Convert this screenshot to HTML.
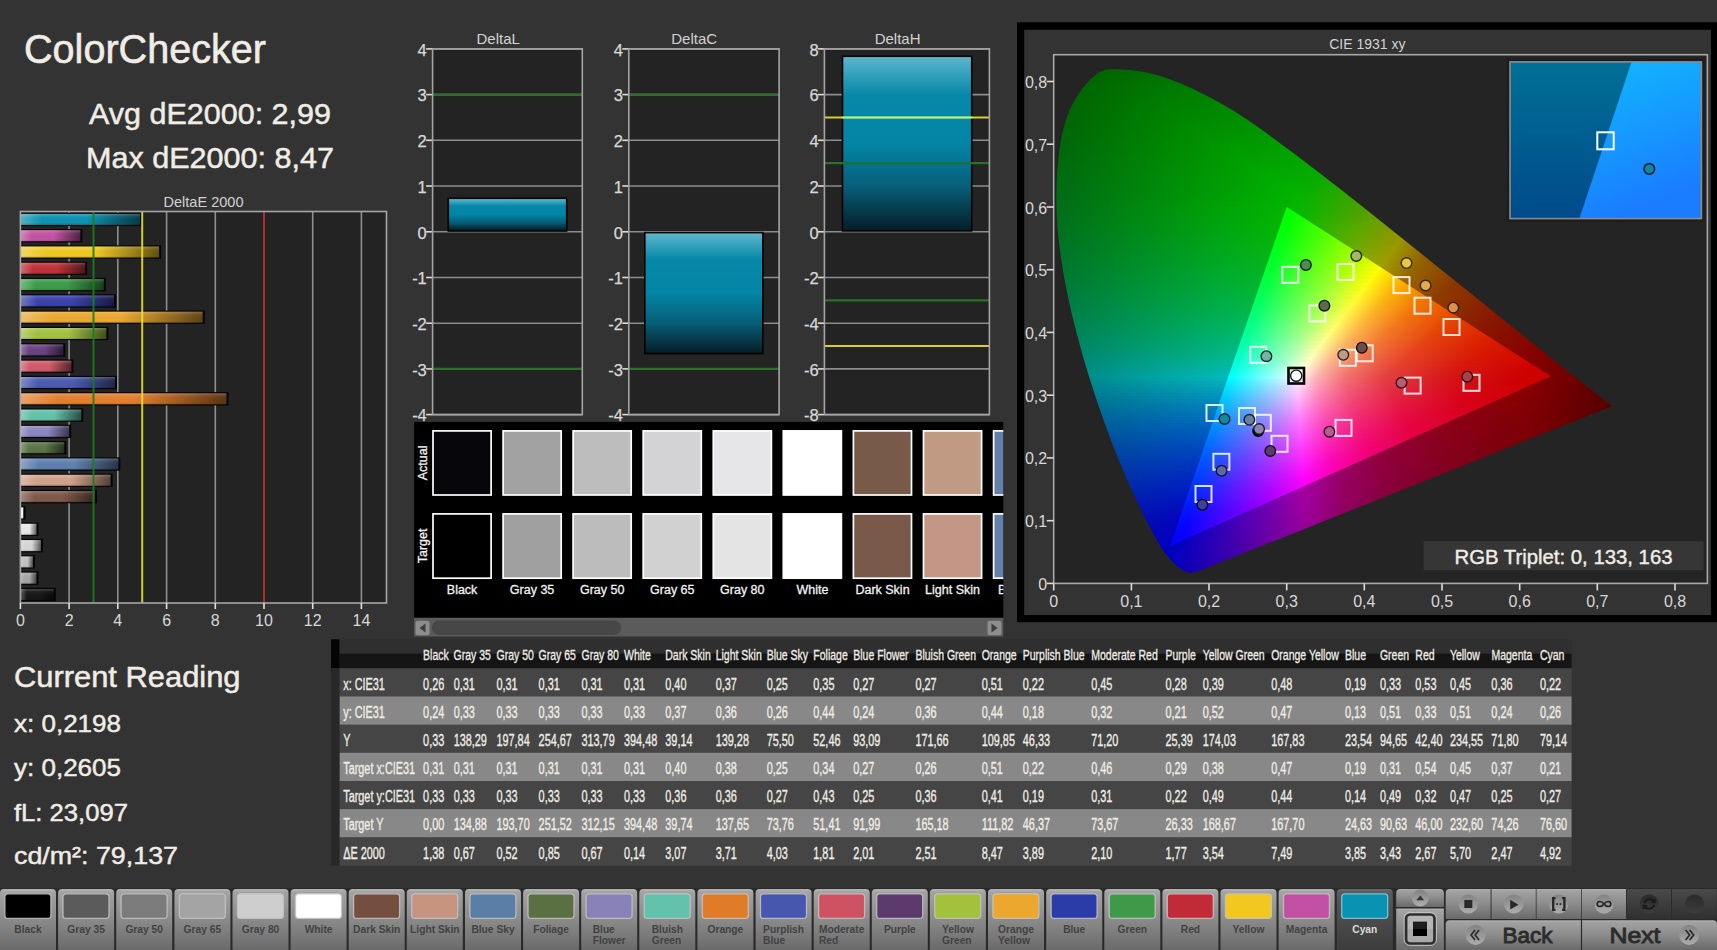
<!DOCTYPE html>
<html><head><meta charset="utf-8"><title>ColorChecker</title>
<style>
html,body{margin:0;padding:0;background:#333;overflow:hidden;}
svg{display:block;font-family:"Liberation Sans", sans-serif;}
</style></head><body>
<svg width="1717" height="950" viewBox="0 0 1717 950">
<defs>
<linearGradient id="deb0" x1="0" y1="0" x2="1" y2="0"><stop offset="0" stop-color="#575757"/><stop offset="0.18" stop-color="#161616"/><stop offset="0.55" stop-color="#161616"/><stop offset="1" stop-color="#090909"/></linearGradient>
<linearGradient id="deb1" x1="0" y1="0" x2="1" y2="0"><stop offset="0" stop-color="#bfbfbf"/><stop offset="0.18" stop-color="#a6a6a6"/><stop offset="0.55" stop-color="#a6a6a6"/><stop offset="1" stop-color="#424242"/></linearGradient>
<linearGradient id="deb2" x1="0" y1="0" x2="1" y2="0"><stop offset="0" stop-color="#d3d3d3"/><stop offset="0.18" stop-color="#c2c2c2"/><stop offset="0.55" stop-color="#c2c2c2"/><stop offset="1" stop-color="#4e4e4e"/></linearGradient>
<linearGradient id="deb3" x1="0" y1="0" x2="1" y2="0"><stop offset="0" stop-color="#e1e1e1"/><stop offset="0.18" stop-color="#d6d6d6"/><stop offset="0.55" stop-color="#d6d6d6"/><stop offset="1" stop-color="#565656"/></linearGradient>
<linearGradient id="deb4" x1="0" y1="0" x2="1" y2="0"><stop offset="0" stop-color="#eeeeee"/><stop offset="0.18" stop-color="#e8e8e8"/><stop offset="0.55" stop-color="#e8e8e8"/><stop offset="1" stop-color="#5d5d5d"/></linearGradient>
<linearGradient id="deb5" x1="0" y1="0" x2="1" y2="0"><stop offset="0" stop-color="#ffffff"/><stop offset="0.18" stop-color="#ffffff"/><stop offset="0.55" stop-color="#ffffff"/><stop offset="1" stop-color="#666666"/></linearGradient>
<linearGradient id="deb6" x1="0" y1="0" x2="1" y2="0"><stop offset="0" stop-color="#a4877d"/><stop offset="0.18" stop-color="#80594b"/><stop offset="0.55" stop-color="#80594b"/><stop offset="1" stop-color="#33241e"/></linearGradient>
<linearGradient id="deb7" x1="0" y1="0" x2="1" y2="0"><stop offset="0" stop-color="#dfbcab"/><stop offset="0.18" stop-color="#d2a28a"/><stop offset="0.55" stop-color="#d2a28a"/><stop offset="1" stop-color="#544137"/></linearGradient>
<linearGradient id="deb8" x1="0" y1="0" x2="1" y2="0"><stop offset="0" stop-color="#8ca4c6"/><stop offset="0.18" stop-color="#5f80b0"/><stop offset="0.55" stop-color="#5f80b0"/><stop offset="1" stop-color="#263346"/></linearGradient>
<linearGradient id="deb9" x1="0" y1="0" x2="1" y2="0"><stop offset="0" stop-color="#899c7a"/><stop offset="0.18" stop-color="#5b7646"/><stop offset="0.55" stop-color="#5b7646"/><stop offset="1" stop-color="#242f1c"/></linearGradient>
<linearGradient id="deb10" x1="0" y1="0" x2="1" y2="0"><stop offset="0" stop-color="#aca8d3"/><stop offset="0.18" stop-color="#8c86c2"/><stop offset="0.55" stop-color="#8c86c2"/><stop offset="1" stop-color="#38364e"/></linearGradient>
<linearGradient id="deb11" x1="0" y1="0" x2="1" y2="0"><stop offset="0" stop-color="#8ed3c2"/><stop offset="0.18" stop-color="#62c2aa"/><stop offset="0.55" stop-color="#62c2aa"/><stop offset="1" stop-color="#274e44"/></linearGradient>
<linearGradient id="deb12" x1="0" y1="0" x2="1" y2="0"><stop offset="0" stop-color="#eba469"/><stop offset="0.18" stop-color="#e3802e"/><stop offset="0.55" stop-color="#e3802e"/><stop offset="1" stop-color="#5b3312"/></linearGradient>
<linearGradient id="deb13" x1="0" y1="0" x2="1" y2="0"><stop offset="0" stop-color="#7d89c8"/><stop offset="0.18" stop-color="#4b5bb2"/><stop offset="0.55" stop-color="#4b5bb2"/><stop offset="1" stop-color="#1e2447"/></linearGradient>
<linearGradient id="deb14" x1="0" y1="0" x2="1" y2="0"><stop offset="0" stop-color="#df8994"/><stop offset="0.18" stop-color="#d25b6a"/><stop offset="0.55" stop-color="#d25b6a"/><stop offset="1" stop-color="#54242a"/></linearGradient>
<linearGradient id="deb15" x1="0" y1="0" x2="1" y2="0"><stop offset="0" stop-color="#9477a5"/><stop offset="0.18" stop-color="#6b4282"/><stop offset="0.55" stop-color="#6b4282"/><stop offset="1" stop-color="#2b1a34"/></linearGradient>
<linearGradient id="deb16" x1="0" y1="0" x2="1" y2="0"><stop offset="0" stop-color="#bcd377"/><stop offset="0.18" stop-color="#a2c242"/><stop offset="0.55" stop-color="#a2c242"/><stop offset="1" stop-color="#414e1a"/></linearGradient>
<linearGradient id="deb17" x1="0" y1="0" x2="1" y2="0"><stop offset="0" stop-color="#f1c06a"/><stop offset="0.18" stop-color="#eca830"/><stop offset="0.55" stop-color="#eca830"/><stop offset="1" stop-color="#5e4313"/></linearGradient>
<linearGradient id="deb18" x1="0" y1="0" x2="1" y2="0"><stop offset="0" stop-color="#7177c2"/><stop offset="0.18" stop-color="#3a42aa"/><stop offset="0.55" stop-color="#3a42aa"/><stop offset="1" stop-color="#171a44"/></linearGradient>
<linearGradient id="deb19" x1="0" y1="0" x2="1" y2="0"><stop offset="0" stop-color="#73b87d"/><stop offset="0.18" stop-color="#3c9c4a"/><stop offset="0.55" stop-color="#3c9c4a"/><stop offset="1" stop-color="#183e1e"/></linearGradient>
<linearGradient id="deb20" x1="0" y1="0" x2="1" y2="0"><stop offset="0" stop-color="#d36b71"/><stop offset="0.18" stop-color="#c2323a"/><stop offset="0.55" stop-color="#c2323a"/><stop offset="1" stop-color="#4e1417"/></linearGradient>
<linearGradient id="deb21" x1="0" y1="0" x2="1" y2="0"><stop offset="0" stop-color="#f4d760"/><stop offset="0.18" stop-color="#f0c822"/><stop offset="0.55" stop-color="#f0c822"/><stop offset="1" stop-color="#60500e"/></linearGradient>
<linearGradient id="deb22" x1="0" y1="0" x2="1" y2="0"><stop offset="0" stop-color="#d582bc"/><stop offset="0.18" stop-color="#c452a2"/><stop offset="0.55" stop-color="#c452a2"/><stop offset="1" stop-color="#4e2141"/></linearGradient>
<linearGradient id="deb23" x1="0" y1="0" x2="1" y2="0"><stop offset="0" stop-color="#50b1c8"/><stop offset="0.18" stop-color="#0c92b2"/><stop offset="0.55" stop-color="#0c92b2"/><stop offset="1" stop-color="#053a47"/></linearGradient>
<linearGradient id="barhl" x1="0" y1="0" x2="0" y2="1"><stop offset="0" stop-color="#fff" stop-opacity="0.22"/><stop offset="0.25" stop-color="#fff" stop-opacity="0.05"/><stop offset="0.8" stop-color="#000" stop-opacity="0"/><stop offset="1" stop-color="#000" stop-opacity="0.12"/></linearGradient>
<linearGradient id="lchbar" x1="0" y1="0" x2="0" y2="1"><stop offset="0" stop-color="#5cb6cc"/><stop offset="0.22" stop-color="#0688a8"/><stop offset="0.5" stop-color="#0385a5"/><stop offset="0.75" stop-color="#065e78"/><stop offset="1" stop-color="#061e28"/></linearGradient>
<clipPath id="hsclip"><path d="M1612.2,406.2 L1570.8,373.8 C1560.7,365.8 1552.3,359.1 1540.6,349.7 C1528.9,340.3 1515.2,329.2 1500.4,317.3 C1485.6,305.4 1468.7,291.8 1451.7,278.1 C1434.7,264.5 1416.6,249.8 1398.6,235.4 C1380.5,221.0 1361.9,206.0 1343.4,191.6 C1325.0,177.2 1303.5,160.8 1287.9,149.1 C1272.3,137.4 1261.6,129.3 1250.0,121.5 C1238.4,113.7 1229.3,108.1 1218.4,102.1 C1207.5,96.1 1195.9,90.1 1184.7,85.3 C1173.5,80.5 1162.0,76.2 1151.0,73.5 C1140.0,70.8 1127.4,69.6 1119.0,69.3 C1110.6,69.0 1106.4,68.8 1100.5,71.8 C1094.6,74.8 1088.8,80.8 1083.7,87.0 C1078.7,93.2 1073.9,100.8 1070.2,108.9 C1066.5,117.0 1063.9,126.5 1061.8,135.8 C1059.7,145.2 1058.7,156.0 1057.8,165.0 C1056.9,174.0 1056.7,181.7 1056.5,190.0 C1056.3,198.3 1056.3,206.7 1056.7,215.0 C1057.1,223.3 1057.8,231.7 1058.7,240.0 C1059.6,248.3 1060.8,256.7 1062.1,265.0 C1063.4,273.3 1064.9,281.7 1066.6,290.0 C1068.3,298.3 1070.1,306.7 1072.1,315.0 C1074.1,323.3 1076.3,331.7 1078.5,340.0 C1080.7,348.3 1083.0,356.7 1085.5,365.0 C1088.0,373.3 1090.6,381.7 1093.3,390.0 C1096.0,398.3 1098.9,406.7 1101.8,415.0 C1104.7,423.3 1107.7,431.7 1110.9,440.0 C1114.1,448.3 1117.4,456.7 1120.9,465.0 C1124.4,473.3 1127.9,481.7 1131.7,490.0 C1135.5,498.3 1139.4,506.7 1143.6,515.0 C1147.8,523.3 1153.1,533.7 1156.7,540.0 C1160.3,546.3 1161.8,548.8 1165.0,553.0 C1168.2,557.2 1172.6,561.9 1176.0,565.0 C1179.4,568.1 1182.3,570.3 1185.2,571.6 C1188.1,572.9 1190.4,573.0 1193.3,572.6 C1196.2,572.2 1199.8,570.5 1202.6,569.5 C1205.4,568.5 1207.5,567.6 1210.0,566.6 L1612.2,406.2 Z"/></clipPath>
<clipPath id="triclip"><path d="M1550.72,376.36 L1286.68,206.96 L1170.19,545.76 Z"/></clipPath>
<linearGradient id="ho0" gradientUnits="userSpaceOnUse" x1="1054" y1="0" x2="1616" y2="0"><stop offset="0.000" stop-color="#005c00"/><stop offset="0.521" stop-color="#018a00"/><stop offset="0.829" stop-color="#5d6200"/><stop offset="0.900" stop-color="#4d3e00"/><stop offset="1.000" stop-color="#351f00"/></linearGradient>
<linearGradient id="ho1" gradientUnits="userSpaceOnUse" x1="1054" y1="0" x2="1616" y2="0"><stop offset="0.000" stop-color="#005d00"/><stop offset="0.518" stop-color="#018c00"/><stop offset="0.829" stop-color="#5e6300"/><stop offset="0.943" stop-color="#422d00"/><stop offset="1.000" stop-color="#351e00"/></linearGradient>
<linearGradient id="ho2" gradientUnits="userSpaceOnUse" x1="1054" y1="0" x2="1616" y2="0"><stop offset="0.000" stop-color="#005d00"/><stop offset="0.516" stop-color="#018c00"/><stop offset="0.829" stop-color="#606300"/><stop offset="0.934" stop-color="#443000"/><stop offset="1.000" stop-color="#351e00"/></linearGradient>
<linearGradient id="ho3" gradientUnits="userSpaceOnUse" x1="1054" y1="0" x2="1616" y2="0"><stop offset="0.000" stop-color="#005d00"/><stop offset="0.333" stop-color="#008100"/><stop offset="0.518" stop-color="#028d00"/><stop offset="0.822" stop-color="#616500"/><stop offset="0.877" stop-color="#544700"/><stop offset="0.991" stop-color="#371f00"/><stop offset="1.000" stop-color="#361e00"/></linearGradient>
<linearGradient id="ho4" gradientUnits="userSpaceOnUse" x1="1054" y1="0" x2="1616" y2="0"><stop offset="0.000" stop-color="#005e00"/><stop offset="0.219" stop-color="#007700"/><stop offset="0.514" stop-color="#028e00"/><stop offset="0.822" stop-color="#636500"/><stop offset="0.931" stop-color="#463000"/><stop offset="1.000" stop-color="#361e00"/></linearGradient>
<linearGradient id="ho5" gradientUnits="userSpaceOnUse" x1="1054" y1="0" x2="1616" y2="0"><stop offset="0.000" stop-color="#005e00"/><stop offset="0.190" stop-color="#007600"/><stop offset="0.512" stop-color="#028f00"/><stop offset="0.819" stop-color="#646600"/><stop offset="0.931" stop-color="#462f00"/><stop offset="1.000" stop-color="#361d00"/></linearGradient>
<linearGradient id="ho6" gradientUnits="userSpaceOnUse" x1="1054" y1="0" x2="1616" y2="0"><stop offset="0.000" stop-color="#005e00"/><stop offset="0.180" stop-color="#007600"/><stop offset="0.511" stop-color="#029000"/><stop offset="0.817" stop-color="#656700"/><stop offset="0.925" stop-color="#483100"/><stop offset="1.000" stop-color="#371d00"/></linearGradient>
<linearGradient id="ho7" gradientUnits="userSpaceOnUse" x1="1054" y1="0" x2="1616" y2="0"><stop offset="0.000" stop-color="#005f01"/><stop offset="0.174" stop-color="#007700"/><stop offset="0.509" stop-color="#029100"/><stop offset="0.813" stop-color="#666800"/><stop offset="0.923" stop-color="#493100"/><stop offset="1.000" stop-color="#371d00"/></linearGradient>
<linearGradient id="ho8" gradientUnits="userSpaceOnUse" x1="1054" y1="0" x2="1616" y2="0"><stop offset="0.000" stop-color="#005f01"/><stop offset="0.176" stop-color="#007800"/><stop offset="0.507" stop-color="#029200"/><stop offset="0.811" stop-color="#686800"/><stop offset="0.918" stop-color="#4b3200"/><stop offset="1.000" stop-color="#371c00"/></linearGradient>
<linearGradient id="ho9" gradientUnits="userSpaceOnUse" x1="1054" y1="0" x2="1616" y2="0"><stop offset="0.000" stop-color="#005f01"/><stop offset="0.180" stop-color="#007900"/><stop offset="0.505" stop-color="#029300"/><stop offset="0.808" stop-color="#696900"/><stop offset="0.916" stop-color="#4b3200"/><stop offset="1.000" stop-color="#381c00"/></linearGradient>
<linearGradient id="ho10" gradientUnits="userSpaceOnUse" x1="1054" y1="0" x2="1616" y2="0"><stop offset="0.000" stop-color="#006001"/><stop offset="0.183" stop-color="#007b00"/><stop offset="0.504" stop-color="#029400"/><stop offset="0.802" stop-color="#6a6a00"/><stop offset="0.918" stop-color="#4b3100"/><stop offset="1.000" stop-color="#381c00"/></linearGradient>
<linearGradient id="ho11" gradientUnits="userSpaceOnUse" x1="1054" y1="0" x2="1616" y2="0"><stop offset="0.000" stop-color="#006001"/><stop offset="0.189" stop-color="#007c00"/><stop offset="0.502" stop-color="#029500"/><stop offset="0.799" stop-color="#6b6b00"/><stop offset="0.916" stop-color="#4c3100"/><stop offset="1.000" stop-color="#381b00"/></linearGradient>
<linearGradient id="ho12" gradientUnits="userSpaceOnUse" x1="1054" y1="0" x2="1616" y2="0"><stop offset="0.000" stop-color="#006102"/><stop offset="0.194" stop-color="#007e00"/><stop offset="0.500" stop-color="#029600"/><stop offset="0.795" stop-color="#6c6c00"/><stop offset="0.915" stop-color="#4d3100"/><stop offset="1.000" stop-color="#391b00"/></linearGradient>
<linearGradient id="ho13" gradientUnits="userSpaceOnUse" x1="1054" y1="0" x2="1616" y2="0"><stop offset="0.000" stop-color="#006102"/><stop offset="0.199" stop-color="#007f00"/><stop offset="0.498" stop-color="#029600"/><stop offset="0.792" stop-color="#6d6d00"/><stop offset="0.897" stop-color="#523700"/><stop offset="1.000" stop-color="#391b00"/></linearGradient>
<linearGradient id="ho14" gradientUnits="userSpaceOnUse" x1="1054" y1="0" x2="1616" y2="0"><stop offset="0.000" stop-color="#006102"/><stop offset="0.206" stop-color="#008100"/><stop offset="0.496" stop-color="#029700"/><stop offset="0.788" stop-color="#6e6e00"/><stop offset="0.884" stop-color="#563b00"/><stop offset="1.000" stop-color="#391a00"/></linearGradient>
<linearGradient id="ho15" gradientUnits="userSpaceOnUse" x1="1054" y1="0" x2="1616" y2="0"><stop offset="0.000" stop-color="#006203"/><stop offset="0.214" stop-color="#008300"/><stop offset="0.495" stop-color="#029800"/><stop offset="0.785" stop-color="#6f6f00"/><stop offset="0.877" stop-color="#593e00"/><stop offset="1.000" stop-color="#3a1a00"/></linearGradient>
<linearGradient id="ho16" gradientUnits="userSpaceOnUse" x1="1054" y1="0" x2="1616" y2="0"><stop offset="0.000" stop-color="#006203"/><stop offset="0.221" stop-color="#008500"/><stop offset="0.493" stop-color="#029900"/><stop offset="0.779" stop-color="#707000"/><stop offset="0.868" stop-color="#5c4100"/><stop offset="0.991" stop-color="#3b1b00"/><stop offset="1.000" stop-color="#3a1a00"/></linearGradient>
<linearGradient id="ho17" gradientUnits="userSpaceOnUse" x1="1054" y1="0" x2="1616" y2="0"><stop offset="0.000" stop-color="#006204"/><stop offset="0.228" stop-color="#008600"/><stop offset="0.491" stop-color="#029a00"/><stop offset="0.776" stop-color="#717100"/><stop offset="0.868" stop-color="#5c4000"/><stop offset="0.993" stop-color="#3b1a00"/><stop offset="1.000" stop-color="#3a1900"/></linearGradient>
<linearGradient id="ho18" gradientUnits="userSpaceOnUse" x1="1054" y1="0" x2="1616" y2="0"><stop offset="0.000" stop-color="#006304"/><stop offset="0.235" stop-color="#008800"/><stop offset="0.489" stop-color="#029b00"/><stop offset="0.772" stop-color="#727200"/><stop offset="0.867" stop-color="#5d4000"/><stop offset="0.991" stop-color="#3c1a00"/><stop offset="1.000" stop-color="#3b1900"/></linearGradient>
<linearGradient id="ho19" gradientUnits="userSpaceOnUse" x1="1054" y1="0" x2="1616" y2="0"><stop offset="0.000" stop-color="#006305"/><stop offset="0.242" stop-color="#008a00"/><stop offset="0.488" stop-color="#029c00"/><stop offset="0.769" stop-color="#737300"/><stop offset="0.865" stop-color="#5e4000"/><stop offset="0.989" stop-color="#3d1a00"/><stop offset="1.000" stop-color="#3b1900"/></linearGradient>
<linearGradient id="ho20" gradientUnits="userSpaceOnUse" x1="1054" y1="0" x2="1616" y2="0"><stop offset="0.000" stop-color="#006305"/><stop offset="0.249" stop-color="#008c00"/><stop offset="0.486" stop-color="#039d00"/><stop offset="0.765" stop-color="#747300"/><stop offset="0.863" stop-color="#5f4000"/><stop offset="0.988" stop-color="#3d1a00"/><stop offset="1.000" stop-color="#3b1800"/></linearGradient>
<linearGradient id="ho21" gradientUnits="userSpaceOnUse" x1="1054" y1="0" x2="1616" y2="0"><stop offset="0.000" stop-color="#006406"/><stop offset="0.258" stop-color="#008d00"/><stop offset="0.484" stop-color="#039e00"/><stop offset="0.762" stop-color="#757400"/><stop offset="0.861" stop-color="#604000"/><stop offset="0.986" stop-color="#3e1a00"/><stop offset="1.000" stop-color="#3c1800"/></linearGradient>
<linearGradient id="ho22" gradientUnits="userSpaceOnUse" x1="1054" y1="0" x2="1616" y2="0"><stop offset="0.000" stop-color="#006406"/><stop offset="0.265" stop-color="#008f00"/><stop offset="0.482" stop-color="#039f00"/><stop offset="0.756" stop-color="#767600"/><stop offset="0.861" stop-color="#603f00"/><stop offset="0.988" stop-color="#3e1a00"/><stop offset="1.000" stop-color="#3c1800"/></linearGradient>
<linearGradient id="ho23" gradientUnits="userSpaceOnUse" x1="1054" y1="0" x2="1616" y2="0"><stop offset="0.000" stop-color="#006407"/><stop offset="0.272" stop-color="#009100"/><stop offset="0.480" stop-color="#03a000"/><stop offset="0.753" stop-color="#777700"/><stop offset="0.859" stop-color="#613f00"/><stop offset="0.986" stop-color="#3f1a00"/><stop offset="1.000" stop-color="#3c1700"/></linearGradient>
<linearGradient id="ho24" gradientUnits="userSpaceOnUse" x1="1054" y1="0" x2="1616" y2="0"><stop offset="0.000" stop-color="#006507"/><stop offset="0.281" stop-color="#009300"/><stop offset="0.479" stop-color="#03a100"/><stop offset="0.749" stop-color="#787700"/><stop offset="0.859" stop-color="#623e00"/><stop offset="0.988" stop-color="#3f1900"/><stop offset="1.000" stop-color="#3d1700"/></linearGradient>
<linearGradient id="ho25" gradientUnits="userSpaceOnUse" x1="1054" y1="0" x2="1616" y2="0"><stop offset="0.000" stop-color="#006508"/><stop offset="0.288" stop-color="#009500"/><stop offset="0.477" stop-color="#03a100"/><stop offset="0.746" stop-color="#797800"/><stop offset="0.859" stop-color="#623d00"/><stop offset="0.988" stop-color="#3f1800"/><stop offset="1.000" stop-color="#3d1700"/></linearGradient>
<linearGradient id="ho26" gradientUnits="userSpaceOnUse" x1="1054" y1="0" x2="1616" y2="0"><stop offset="0.000" stop-color="#006509"/><stop offset="0.297" stop-color="#009700"/><stop offset="0.477" stop-color="#04a200"/><stop offset="0.740" stop-color="#7a7a00"/><stop offset="0.843" stop-color="#684300"/><stop offset="0.963" stop-color="#451d00"/><stop offset="1.000" stop-color="#3d1600"/></linearGradient>
<linearGradient id="ho27" gradientUnits="userSpaceOnUse" x1="1054" y1="0" x2="1616" y2="0"><stop offset="0.000" stop-color="#006609"/><stop offset="0.304" stop-color="#009800"/><stop offset="0.475" stop-color="#04a300"/><stop offset="0.737" stop-color="#7b7a00"/><stop offset="0.827" stop-color="#6d4a00"/><stop offset="0.941" stop-color="#4b2100"/><stop offset="1.000" stop-color="#3e1600"/></linearGradient>
<linearGradient id="ho28" gradientUnits="userSpaceOnUse" x1="1054" y1="0" x2="1616" y2="0"><stop offset="0.000" stop-color="#00660a"/><stop offset="0.313" stop-color="#009a00"/><stop offset="0.473" stop-color="#04a400"/><stop offset="0.733" stop-color="#7c7b00"/><stop offset="0.822" stop-color="#6e4b00"/><stop offset="0.940" stop-color="#4c2100"/><stop offset="1.000" stop-color="#3e1600"/></linearGradient>
<linearGradient id="ho29" gradientUnits="userSpaceOnUse" x1="1054" y1="0" x2="1616" y2="0"><stop offset="0.000" stop-color="#00660b"/><stop offset="0.320" stop-color="#009c00"/><stop offset="0.472" stop-color="#04a500"/><stop offset="0.730" stop-color="#7d7c00"/><stop offset="0.819" stop-color="#6f4b00"/><stop offset="0.940" stop-color="#4c2100"/><stop offset="1.000" stop-color="#3e1500"/></linearGradient>
<linearGradient id="ho30" gradientUnits="userSpaceOnUse" x1="1054" y1="0" x2="1616" y2="0"><stop offset="0.000" stop-color="#00670b"/><stop offset="0.329" stop-color="#009e00"/><stop offset="0.470" stop-color="#04a600"/><stop offset="0.726" stop-color="#7e7c00"/><stop offset="0.813" stop-color="#704c00"/><stop offset="0.940" stop-color="#4d2000"/><stop offset="1.000" stop-color="#3f1500"/></linearGradient>
<linearGradient id="ho31" gradientUnits="userSpaceOnUse" x1="1054" y1="0" x2="1616" y2="0"><stop offset="0.000" stop-color="#00670c"/><stop offset="0.336" stop-color="#00a000"/><stop offset="0.470" stop-color="#05a700"/><stop offset="0.721" stop-color="#7f7e00"/><stop offset="0.806" stop-color="#724e00"/><stop offset="0.938" stop-color="#4e2000"/><stop offset="1.000" stop-color="#3f1500"/></linearGradient>
<linearGradient id="ho32" gradientUnits="userSpaceOnUse" x1="1054" y1="0" x2="1616" y2="0"><stop offset="0.000" stop-color="#00670d"/><stop offset="0.345" stop-color="#00a100"/><stop offset="0.466" stop-color="#04a800"/><stop offset="0.717" stop-color="#807f00"/><stop offset="0.802" stop-color="#724e00"/><stop offset="0.936" stop-color="#4e2000"/><stop offset="1.000" stop-color="#3f1400"/></linearGradient>
<linearGradient id="ho33" gradientUnits="userSpaceOnUse" x1="1054" y1="0" x2="1616" y2="0"><stop offset="0.000" stop-color="#00680d"/><stop offset="0.352" stop-color="#00a300"/><stop offset="0.464" stop-color="#04a900"/><stop offset="0.714" stop-color="#818000"/><stop offset="0.797" stop-color="#734f00"/><stop offset="0.915" stop-color="#552400"/><stop offset="1.000" stop-color="#401400"/></linearGradient>
<linearGradient id="ho34" gradientUnits="userSpaceOnUse" x1="1054" y1="0" x2="1616" y2="0"><stop offset="0.000" stop-color="#00680e"/><stop offset="0.361" stop-color="#00a500"/><stop offset="0.463" stop-color="#05aa00"/><stop offset="0.710" stop-color="#828000"/><stop offset="0.794" stop-color="#744f00"/><stop offset="0.886" stop-color="#5d2c00"/><stop offset="1.000" stop-color="#401400"/></linearGradient>
<linearGradient id="ho35" gradientUnits="userSpaceOnUse" x1="1054" y1="0" x2="1616" y2="0"><stop offset="0.000" stop-color="#00680f"/><stop offset="0.368" stop-color="#00a700"/><stop offset="0.461" stop-color="#05ab00"/><stop offset="0.706" stop-color="#828100"/><stop offset="0.790" stop-color="#754f00"/><stop offset="0.875" stop-color="#612e00"/><stop offset="1.000" stop-color="#401300"/></linearGradient>
<linearGradient id="ho36" gradientUnits="userSpaceOnUse" x1="1054" y1="0" x2="1616" y2="0"><stop offset="0.000" stop-color="#00690f"/><stop offset="0.377" stop-color="#00a900"/><stop offset="0.459" stop-color="#05ab00"/><stop offset="0.701" stop-color="#848300"/><stop offset="0.783" stop-color="#765100"/><stop offset="0.867" stop-color="#643100"/><stop offset="1.000" stop-color="#411300"/></linearGradient>
<linearGradient id="ho37" gradientUnits="userSpaceOnUse" x1="1054" y1="0" x2="1616" y2="0"><stop offset="0.000" stop-color="#006910"/><stop offset="0.384" stop-color="#00ab00"/><stop offset="0.457" stop-color="#05ac00"/><stop offset="0.698" stop-color="#858400"/><stop offset="0.778" stop-color="#785200"/><stop offset="0.863" stop-color="#663100"/><stop offset="1.000" stop-color="#411200"/></linearGradient>
<linearGradient id="ho38" gradientUnits="userSpaceOnUse" x1="1054" y1="0" x2="1616" y2="0"><stop offset="0.000" stop-color="#006911"/><stop offset="0.393" stop-color="#00ac00"/><stop offset="0.457" stop-color="#06ad00"/><stop offset="0.694" stop-color="#868400"/><stop offset="0.774" stop-color="#785200"/><stop offset="0.861" stop-color="#663100"/><stop offset="1.000" stop-color="#411200"/></linearGradient>
<linearGradient id="ho39" gradientUnits="userSpaceOnUse" x1="1054" y1="0" x2="1616" y2="0"><stop offset="0.000" stop-color="#006a12"/><stop offset="0.402" stop-color="#00ae00"/><stop offset="0.456" stop-color="#06ae00"/><stop offset="0.690" stop-color="#868500"/><stop offset="0.770" stop-color="#795200"/><stop offset="0.861" stop-color="#673000"/><stop offset="1.000" stop-color="#421200"/></linearGradient>
<linearGradient id="ho40" gradientUnits="userSpaceOnUse" x1="1054" y1="0" x2="1616" y2="0"><stop offset="0.000" stop-color="#006a13"/><stop offset="0.409" stop-color="#00b000"/><stop offset="0.456" stop-color="#07af00"/><stop offset="0.685" stop-color="#888700"/><stop offset="0.763" stop-color="#7b5400"/><stop offset="0.859" stop-color="#683000"/><stop offset="1.000" stop-color="#421100"/></linearGradient>
<linearGradient id="ho41" gradientUnits="userSpaceOnUse" x1="1054" y1="0" x2="1616" y2="0"><stop offset="0.000" stop-color="#006a13"/><stop offset="0.418" stop-color="#00b200"/><stop offset="0.457" stop-color="#0aaf00"/><stop offset="0.681" stop-color="#898800"/><stop offset="0.758" stop-color="#7c5500"/><stop offset="0.858" stop-color="#692f00"/><stop offset="1.000" stop-color="#421100"/></linearGradient>
<linearGradient id="ho42" gradientUnits="userSpaceOnUse" x1="1054" y1="0" x2="1616" y2="0"><stop offset="0.000" stop-color="#006b14"/><stop offset="0.423" stop-color="#00b300"/><stop offset="0.463" stop-color="#0eaf00"/><stop offset="0.678" stop-color="#898800"/><stop offset="0.754" stop-color="#7c5500"/><stop offset="0.858" stop-color="#692e00"/><stop offset="1.000" stop-color="#431100"/></linearGradient>
<linearGradient id="ho43" gradientUnits="userSpaceOnUse" x1="1054" y1="0" x2="1616" y2="0"><stop offset="0.000" stop-color="#006b15"/><stop offset="0.423" stop-color="#00b400"/><stop offset="0.464" stop-color="#11b000"/><stop offset="0.674" stop-color="#8a8900"/><stop offset="0.749" stop-color="#7e5600"/><stop offset="0.856" stop-color="#6a2e00"/><stop offset="1.000" stop-color="#431000"/></linearGradient>
<linearGradient id="ho44" gradientUnits="userSpaceOnUse" x1="1054" y1="0" x2="1616" y2="0"><stop offset="0.000" stop-color="#006b16"/><stop offset="0.425" stop-color="#00b500"/><stop offset="0.477" stop-color="#1aaf00"/><stop offset="0.671" stop-color="#8b8900"/><stop offset="0.746" stop-color="#7e5600"/><stop offset="0.856" stop-color="#6a2d00"/><stop offset="1.000" stop-color="#441000"/></linearGradient>
<linearGradient id="ho45" gradientUnits="userSpaceOnUse" x1="1054" y1="0" x2="1616" y2="0"><stop offset="0.000" stop-color="#006c17"/><stop offset="0.320" stop-color="#00a603"/><stop offset="0.431" stop-color="#01b500"/><stop offset="0.662" stop-color="#8c8d00"/><stop offset="0.742" stop-color="#7f5600"/><stop offset="0.856" stop-color="#6b2c00"/><stop offset="1.000" stop-color="#440f00"/></linearGradient>
<linearGradient id="ho46" gradientUnits="userSpaceOnUse" x1="1054" y1="0" x2="1616" y2="0"><stop offset="0.000" stop-color="#006c18"/><stop offset="0.308" stop-color="#00a405"/><stop offset="0.431" stop-color="#02b600"/><stop offset="0.660" stop-color="#8e8e00"/><stop offset="0.731" stop-color="#815a00"/><stop offset="0.854" stop-color="#6c2c00"/><stop offset="1.000" stop-color="#440f00"/></linearGradient>
<linearGradient id="ho47" gradientUnits="userSpaceOnUse" x1="1054" y1="0" x2="1616" y2="0"><stop offset="0.000" stop-color="#006c19"/><stop offset="0.304" stop-color="#00a407"/><stop offset="0.431" stop-color="#03b600"/><stop offset="0.655" stop-color="#8e8f00"/><stop offset="0.731" stop-color="#815800"/><stop offset="0.854" stop-color="#6c2b00"/><stop offset="1.000" stop-color="#450f00"/></linearGradient>
<linearGradient id="ho48" gradientUnits="userSpaceOnUse" x1="1054" y1="0" x2="1616" y2="0"><stop offset="0.000" stop-color="#006d19"/><stop offset="0.304" stop-color="#00a408"/><stop offset="0.432" stop-color="#04b700"/><stop offset="0.651" stop-color="#8f9000"/><stop offset="0.724" stop-color="#835a00"/><stop offset="0.852" stop-color="#6d2b00"/><stop offset="1.000" stop-color="#450e00"/></linearGradient>
<linearGradient id="ho49" gradientUnits="userSpaceOnUse" x1="1054" y1="0" x2="1616" y2="0"><stop offset="0.000" stop-color="#006d1a"/><stop offset="0.304" stop-color="#00a409"/><stop offset="0.431" stop-color="#04b800"/><stop offset="0.648" stop-color="#919100"/><stop offset="0.719" stop-color="#845b00"/><stop offset="0.833" stop-color="#743000"/><stop offset="0.982" stop-color="#491000"/><stop offset="1.000" stop-color="#450e00"/></linearGradient>
<linearGradient id="ho50" gradientUnits="userSpaceOnUse" x1="1054" y1="0" x2="1616" y2="0"><stop offset="0.000" stop-color="#006e1b"/><stop offset="0.304" stop-color="#00a50b"/><stop offset="0.429" stop-color="#04b800"/><stop offset="0.609" stop-color="#7c9900"/><stop offset="0.649" stop-color="#918c00"/><stop offset="0.721" stop-color="#845900"/><stop offset="0.847" stop-color="#702b00"/><stop offset="1.000" stop-color="#460e00"/></linearGradient>
<linearGradient id="ho51" gradientUnits="userSpaceOnUse" x1="1054" y1="0" x2="1616" y2="0"><stop offset="0.000" stop-color="#006e1c"/><stop offset="0.302" stop-color="#00a50c"/><stop offset="0.427" stop-color="#04b800"/><stop offset="0.582" stop-color="#6e9f00"/><stop offset="0.644" stop-color="#928f00"/><stop offset="0.714" stop-color="#855b00"/><stop offset="0.824" stop-color="#773100"/><stop offset="0.975" stop-color="#4b1000"/><stop offset="1.000" stop-color="#460d00"/></linearGradient>
<linearGradient id="ho52" gradientUnits="userSpaceOnUse" x1="1054" y1="0" x2="1616" y2="0"><stop offset="0.000" stop-color="#006e1d"/><stop offset="0.302" stop-color="#00a50e"/><stop offset="0.425" stop-color="#05b801"/><stop offset="0.555" stop-color="#5fa600"/><stop offset="0.641" stop-color="#938f00"/><stop offset="0.710" stop-color="#865b00"/><stop offset="0.819" stop-color="#783100"/><stop offset="0.975" stop-color="#4c0f00"/><stop offset="1.000" stop-color="#460d00"/></linearGradient>
<linearGradient id="ho53" gradientUnits="userSpaceOnUse" x1="1054" y1="0" x2="1616" y2="0"><stop offset="0.000" stop-color="#006f1e"/><stop offset="0.302" stop-color="#00a60f"/><stop offset="0.423" stop-color="#05b801"/><stop offset="0.536" stop-color="#54aa00"/><stop offset="0.635" stop-color="#949100"/><stop offset="0.703" stop-color="#875d00"/><stop offset="0.810" stop-color="#793200"/><stop offset="0.972" stop-color="#4d0f00"/><stop offset="1.000" stop-color="#470c00"/></linearGradient>
<linearGradient id="ho54" gradientUnits="userSpaceOnUse" x1="1054" y1="0" x2="1616" y2="0"><stop offset="0.000" stop-color="#006f1f"/><stop offset="0.302" stop-color="#00a611"/><stop offset="0.420" stop-color="#04b802"/><stop offset="0.527" stop-color="#51ac00"/><stop offset="0.632" stop-color="#959200"/><stop offset="0.698" stop-color="#885e00"/><stop offset="0.802" stop-color="#7a3300"/><stop offset="0.916" stop-color="#5c1700"/><stop offset="1.000" stop-color="#470c00"/></linearGradient>
<linearGradient id="ho55" gradientUnits="userSpaceOnUse" x1="1054" y1="0" x2="1616" y2="0"><stop offset="0.000" stop-color="#006f21"/><stop offset="0.302" stop-color="#00a612"/><stop offset="0.418" stop-color="#04b803"/><stop offset="0.528" stop-color="#55ac00"/><stop offset="0.628" stop-color="#969200"/><stop offset="0.694" stop-color="#895e00"/><stop offset="0.797" stop-color="#7b3400"/><stop offset="0.877" stop-color="#681e00"/><stop offset="1.000" stop-color="#470c00"/></linearGradient>
<linearGradient id="ho56" gradientUnits="userSpaceOnUse" x1="1054" y1="0" x2="1616" y2="0"><stop offset="0.000" stop-color="#007022"/><stop offset="0.302" stop-color="#00a714"/><stop offset="0.416" stop-color="#04b805"/><stop offset="0.530" stop-color="#59ac00"/><stop offset="0.625" stop-color="#979300"/><stop offset="0.690" stop-color="#8a5e00"/><stop offset="0.794" stop-color="#7c3300"/><stop offset="0.870" stop-color="#6b1f00"/><stop offset="1.000" stop-color="#480b00"/></linearGradient>
<linearGradient id="ho57" gradientUnits="userSpaceOnUse" x1="1054" y1="0" x2="1616" y2="0"><stop offset="0.000" stop-color="#007023"/><stop offset="0.301" stop-color="#00a716"/><stop offset="0.415" stop-color="#04b806"/><stop offset="0.536" stop-color="#5fab00"/><stop offset="0.619" stop-color="#989500"/><stop offset="0.683" stop-color="#8b6000"/><stop offset="0.783" stop-color="#7e3500"/><stop offset="0.859" stop-color="#6f2100"/><stop offset="1.000" stop-color="#480b00"/></linearGradient>
<linearGradient id="ho58" gradientUnits="userSpaceOnUse" x1="1054" y1="0" x2="1616" y2="0"><stop offset="0.000" stop-color="#007024"/><stop offset="0.301" stop-color="#00a717"/><stop offset="0.413" stop-color="#04b808"/><stop offset="0.541" stop-color="#66aa00"/><stop offset="0.616" stop-color="#999600"/><stop offset="0.680" stop-color="#8c6000"/><stop offset="0.779" stop-color="#7e3500"/><stop offset="0.858" stop-color="#702100"/><stop offset="1.000" stop-color="#490a00"/></linearGradient>
<linearGradient id="ho59" gradientUnits="userSpaceOnUse" x1="1054" y1="0" x2="1616" y2="0"><stop offset="0.000" stop-color="#007125"/><stop offset="0.301" stop-color="#00a719"/><stop offset="0.411" stop-color="#05b80a"/><stop offset="0.543" stop-color="#6baa00"/><stop offset="0.612" stop-color="#9a9600"/><stop offset="0.674" stop-color="#8d6100"/><stop offset="0.772" stop-color="#7f3600"/><stop offset="0.856" stop-color="#712000"/><stop offset="1.000" stop-color="#490a00"/></linearGradient>
<linearGradient id="ho60" gradientUnits="userSpaceOnUse" x1="1054" y1="0" x2="1616" y2="0"><stop offset="0.000" stop-color="#007126"/><stop offset="0.301" stop-color="#00a81b"/><stop offset="0.409" stop-color="#05b80d"/><stop offset="0.537" stop-color="#6aac00"/><stop offset="0.607" stop-color="#9b9900"/><stop offset="0.667" stop-color="#8f6300"/><stop offset="0.762" stop-color="#813800"/><stop offset="0.854" stop-color="#722000"/><stop offset="1.000" stop-color="#490a00"/></linearGradient>
<linearGradient id="ho61" gradientUnits="userSpaceOnUse" x1="1054" y1="0" x2="1616" y2="0"><stop offset="0.000" stop-color="#007127"/><stop offset="0.301" stop-color="#00a81d"/><stop offset="0.406" stop-color="#04b80f"/><stop offset="0.537" stop-color="#6dac00"/><stop offset="0.603" stop-color="#9c9900"/><stop offset="0.664" stop-color="#906300"/><stop offset="0.758" stop-color="#823800"/><stop offset="0.852" stop-color="#731f00"/><stop offset="1.000" stop-color="#4a0900"/></linearGradient>
<linearGradient id="ho62" gradientUnits="userSpaceOnUse" x1="1054" y1="0" x2="1616" y2="0"><stop offset="0.000" stop-color="#007229"/><stop offset="0.301" stop-color="#00a81e"/><stop offset="0.404" stop-color="#04b811"/><stop offset="0.541" stop-color="#73ab00"/><stop offset="0.600" stop-color="#9d9900"/><stop offset="0.660" stop-color="#906300"/><stop offset="0.754" stop-color="#833700"/><stop offset="0.852" stop-color="#731e00"/><stop offset="1.000" stop-color="#4a0900"/></linearGradient>
<linearGradient id="ho63" gradientUnits="userSpaceOnUse" x1="1054" y1="0" x2="1616" y2="0"><stop offset="0.000" stop-color="#00722a"/><stop offset="0.301" stop-color="#00a920"/><stop offset="0.402" stop-color="#04b814"/><stop offset="0.546" stop-color="#7aaa00"/><stop offset="0.596" stop-color="#9e9a00"/><stop offset="0.655" stop-color="#916400"/><stop offset="0.747" stop-color="#843800"/><stop offset="0.852" stop-color="#741e00"/><stop offset="1.000" stop-color="#4a0800"/></linearGradient>
<linearGradient id="ho64" gradientUnits="userSpaceOnUse" x1="1054" y1="0" x2="1616" y2="0"><stop offset="0.000" stop-color="#00732b"/><stop offset="0.301" stop-color="#00a922"/><stop offset="0.400" stop-color="#04b816"/><stop offset="0.553" stop-color="#84a800"/><stop offset="0.593" stop-color="#9f9a00"/><stop offset="0.651" stop-color="#926400"/><stop offset="0.742" stop-color="#853900"/><stop offset="0.851" stop-color="#751d00"/><stop offset="1.000" stop-color="#4b0800"/></linearGradient>
<linearGradient id="ho65" gradientUnits="userSpaceOnUse" x1="1054" y1="0" x2="1616" y2="0"><stop offset="0.000" stop-color="#00732d"/><stop offset="0.301" stop-color="#00a924"/><stop offset="0.399" stop-color="#04b819"/><stop offset="0.560" stop-color="#8da600"/><stop offset="0.587" stop-color="#a09d00"/><stop offset="0.644" stop-color="#946700"/><stop offset="0.733" stop-color="#863a00"/><stop offset="0.851" stop-color="#751c00"/><stop offset="1.000" stop-color="#4b0800"/></linearGradient>
<linearGradient id="ho66" gradientUnits="userSpaceOnUse" x1="1054" y1="0" x2="1616" y2="0"><stop offset="0.000" stop-color="#00732e"/><stop offset="0.301" stop-color="#00aa26"/><stop offset="0.397" stop-color="#05b81b"/><stop offset="0.560" stop-color="#90a500"/><stop offset="0.584" stop-color="#a19d00"/><stop offset="0.641" stop-color="#956700"/><stop offset="0.730" stop-color="#873a00"/><stop offset="0.851" stop-color="#761b00"/><stop offset="1.000" stop-color="#4c0700"/></linearGradient>
<linearGradient id="ho67" gradientUnits="userSpaceOnUse" x1="1054" y1="0" x2="1616" y2="0"><stop offset="0.000" stop-color="#00742f"/><stop offset="0.301" stop-color="#00aa28"/><stop offset="0.395" stop-color="#05b81d"/><stop offset="0.557" stop-color="#90a501"/><stop offset="0.580" stop-color="#a19d00"/><stop offset="0.639" stop-color="#956500"/><stop offset="0.728" stop-color="#873900"/><stop offset="0.851" stop-color="#761a00"/><stop offset="1.000" stop-color="#4c0700"/></linearGradient>
<linearGradient id="ho68" gradientUnits="userSpaceOnUse" x1="1054" y1="0" x2="1616" y2="0"><stop offset="0.000" stop-color="#007431"/><stop offset="0.301" stop-color="#00ab2b"/><stop offset="0.391" stop-color="#04b820"/><stop offset="0.550" stop-color="#8da602"/><stop offset="0.577" stop-color="#a19d00"/><stop offset="0.639" stop-color="#956300"/><stop offset="0.730" stop-color="#883700"/><stop offset="0.851" stop-color="#761a00"/><stop offset="1.000" stop-color="#4c0600"/></linearGradient>
<linearGradient id="ho69" gradientUnits="userSpaceOnUse" x1="1054" y1="0" x2="1616" y2="0"><stop offset="0.000" stop-color="#007432"/><stop offset="0.301" stop-color="#00ab2d"/><stop offset="0.390" stop-color="#04b823"/><stop offset="0.546" stop-color="#8ea604"/><stop offset="0.571" stop-color="#a19e01"/><stop offset="0.635" stop-color="#966300"/><stop offset="0.726" stop-color="#883700"/><stop offset="0.849" stop-color="#771900"/><stop offset="1.000" stop-color="#4d0600"/></linearGradient>
<linearGradient id="ho70" gradientUnits="userSpaceOnUse" x1="1054" y1="0" x2="1616" y2="0"><stop offset="0.000" stop-color="#007534"/><stop offset="0.301" stop-color="#00ab2f"/><stop offset="0.388" stop-color="#04b826"/><stop offset="0.543" stop-color="#8ea607"/><stop offset="0.568" stop-color="#a19e02"/><stop offset="0.628" stop-color="#976500"/><stop offset="0.715" stop-color="#8a3900"/><stop offset="0.849" stop-color="#781800"/><stop offset="1.000" stop-color="#4d0600"/></linearGradient>
<linearGradient id="ho71" gradientUnits="userSpaceOnUse" x1="1054" y1="0" x2="1616" y2="0"><stop offset="0.000" stop-color="#007535"/><stop offset="0.302" stop-color="#00ac31"/><stop offset="0.386" stop-color="#04b828"/><stop offset="0.539" stop-color="#8ea60a"/><stop offset="0.564" stop-color="#a19d04"/><stop offset="0.621" stop-color="#996700"/><stop offset="0.705" stop-color="#8c3b00"/><stop offset="0.849" stop-color="#781700"/><stop offset="1.000" stop-color="#4d0500"/></linearGradient>
<linearGradient id="ho72" gradientUnits="userSpaceOnUse" x1="1054" y1="0" x2="1616" y2="0"><stop offset="0.000" stop-color="#007637"/><stop offset="0.302" stop-color="#00ac34"/><stop offset="0.384" stop-color="#04b82b"/><stop offset="0.536" stop-color="#8ea60d"/><stop offset="0.560" stop-color="#a19c07"/><stop offset="0.617" stop-color="#996700"/><stop offset="0.705" stop-color="#8c3900"/><stop offset="0.849" stop-color="#791600"/><stop offset="1.000" stop-color="#4e0500"/></linearGradient>
<linearGradient id="ho73" gradientUnits="userSpaceOnUse" x1="1054" y1="0" x2="1616" y2="0"><stop offset="0.000" stop-color="#007638"/><stop offset="0.302" stop-color="#00ad36"/><stop offset="0.383" stop-color="#05b82e"/><stop offset="0.532" stop-color="#8fa610"/><stop offset="0.555" stop-color="#a19e0a"/><stop offset="0.610" stop-color="#996800"/><stop offset="0.699" stop-color="#8d3a00"/><stop offset="0.849" stop-color="#791600"/><stop offset="1.000" stop-color="#4e0400"/></linearGradient>
<linearGradient id="ho74" gradientUnits="userSpaceOnUse" x1="1054" y1="0" x2="1616" y2="0"><stop offset="0.000" stop-color="#00763a"/><stop offset="0.302" stop-color="#00ad39"/><stop offset="0.381" stop-color="#05b831"/><stop offset="0.528" stop-color="#8fa613"/><stop offset="0.552" stop-color="#a19d0d"/><stop offset="0.607" stop-color="#996801"/><stop offset="0.699" stop-color="#8d3800"/><stop offset="0.849" stop-color="#7a1500"/><stop offset="1.000" stop-color="#4f0400"/></linearGradient>
<linearGradient id="ho75" gradientUnits="userSpaceOnUse" x1="1054" y1="0" x2="1616" y2="0"><stop offset="0.000" stop-color="#00773c"/><stop offset="0.304" stop-color="#00ae3b"/><stop offset="0.379" stop-color="#05b834"/><stop offset="0.525" stop-color="#8fa616"/><stop offset="0.548" stop-color="#a19d10"/><stop offset="0.601" stop-color="#996802"/><stop offset="0.694" stop-color="#8e3800"/><stop offset="0.849" stop-color="#7a1400"/><stop offset="1.000" stop-color="#4f0300"/></linearGradient>
<linearGradient id="ho76" gradientUnits="userSpaceOnUse" x1="1054" y1="0" x2="1616" y2="0"><stop offset="0.000" stop-color="#00773e"/><stop offset="0.304" stop-color="#00ae3e"/><stop offset="0.375" stop-color="#04b838"/><stop offset="0.518" stop-color="#8ca71b"/><stop offset="0.543" stop-color="#a29f14"/><stop offset="0.596" stop-color="#996904"/><stop offset="0.685" stop-color="#903a00"/><stop offset="0.835" stop-color="#801600"/><stop offset="1.000" stop-color="#4f0300"/></linearGradient>
<linearGradient id="ho77" gradientUnits="userSpaceOnUse" x1="1054" y1="0" x2="1616" y2="0"><stop offset="0.000" stop-color="#00783f"/><stop offset="0.306" stop-color="#00af41"/><stop offset="0.374" stop-color="#04b83b"/><stop offset="0.514" stop-color="#8ca71e"/><stop offset="0.539" stop-color="#a29e18"/><stop offset="0.591" stop-color="#996906"/><stop offset="0.674" stop-color="#913c00"/><stop offset="0.815" stop-color="#831800"/><stop offset="1.000" stop-color="#500300"/></linearGradient>
<linearGradient id="ho78" gradientUnits="userSpaceOnUse" x1="1054" y1="0" x2="1616" y2="0"><stop offset="0.000" stop-color="#007841"/><stop offset="0.306" stop-color="#00b044"/><stop offset="0.372" stop-color="#04b83e"/><stop offset="0.511" stop-color="#8ca722"/><stop offset="0.536" stop-color="#a29e1b"/><stop offset="0.587" stop-color="#996808"/><stop offset="0.669" stop-color="#923c00"/><stop offset="0.810" stop-color="#841800"/><stop offset="1.000" stop-color="#500200"/></linearGradient>
<linearGradient id="ho79" gradientUnits="userSpaceOnUse" x1="1054" y1="0" x2="1616" y2="0"><stop offset="0.000" stop-color="#007843"/><stop offset="0.308" stop-color="#00b047"/><stop offset="0.370" stop-color="#04b842"/><stop offset="0.507" stop-color="#8da725"/><stop offset="0.532" stop-color="#a29d1e"/><stop offset="0.584" stop-color="#99670b"/><stop offset="0.665" stop-color="#923b00"/><stop offset="0.810" stop-color="#851700"/><stop offset="1.000" stop-color="#500200"/></linearGradient>
<linearGradient id="ho80" gradientUnits="userSpaceOnUse" x1="1054" y1="0" x2="1616" y2="0"><stop offset="0.000" stop-color="#007945"/><stop offset="0.310" stop-color="#00b14a"/><stop offset="0.368" stop-color="#05b945"/><stop offset="0.504" stop-color="#8da729"/><stop offset="0.527" stop-color="#a29f23"/><stop offset="0.577" stop-color="#9a690e"/><stop offset="0.655" stop-color="#923d01"/><stop offset="0.799" stop-color="#861700"/><stop offset="0.865" stop-color="#780d00"/><stop offset="1.000" stop-color="#510200"/></linearGradient>
<linearGradient id="ho81" gradientUnits="userSpaceOnUse" x1="1054" y1="0" x2="1616" y2="0"><stop offset="0.000" stop-color="#007947"/><stop offset="0.310" stop-color="#00b14d"/><stop offset="0.367" stop-color="#05b949"/><stop offset="0.500" stop-color="#8da72d"/><stop offset="0.523" stop-color="#a29e26"/><stop offset="0.573" stop-color="#996911"/><stop offset="0.651" stop-color="#923d01"/><stop offset="0.801" stop-color="#861600"/><stop offset="0.868" stop-color="#770c00"/><stop offset="1.000" stop-color="#510100"/></linearGradient>
<linearGradient id="ho82" gradientUnits="userSpaceOnUse" x1="1054" y1="0" x2="1616" y2="0"><stop offset="0.000" stop-color="#007a49"/><stop offset="0.311" stop-color="#00b250"/><stop offset="0.365" stop-color="#05b94c"/><stop offset="0.496" stop-color="#8da731"/><stop offset="0.520" stop-color="#a29e2a"/><stop offset="0.569" stop-color="#996813"/><stop offset="0.648" stop-color="#923c02"/><stop offset="0.799" stop-color="#871500"/><stop offset="0.865" stop-color="#790b00"/><stop offset="1.000" stop-color="#520100"/></linearGradient>
<linearGradient id="ho83" gradientUnits="userSpaceOnUse" x1="1054" y1="0" x2="1616" y2="0"><stop offset="0.000" stop-color="#007a4b"/><stop offset="0.313" stop-color="#00b354"/><stop offset="0.363" stop-color="#05b950"/><stop offset="0.493" stop-color="#8ea735"/><stop offset="0.516" stop-color="#a29d2e"/><stop offset="0.564" stop-color="#9a6816"/><stop offset="0.641" stop-color="#923c03"/><stop offset="0.790" stop-color="#881600"/><stop offset="0.856" stop-color="#7c0c00"/><stop offset="1.000" stop-color="#520100"/></linearGradient>
<linearGradient id="ho84" gradientUnits="userSpaceOnUse" x1="1054" y1="0" x2="1616" y2="0"><stop offset="0.000" stop-color="#007a4d"/><stop offset="0.317" stop-color="#00b457"/><stop offset="0.361" stop-color="#05b954"/><stop offset="0.489" stop-color="#8ea739"/><stop offset="0.511" stop-color="#a39f33"/><stop offset="0.559" stop-color="#9a691a"/><stop offset="0.633" stop-color="#923d05"/><stop offset="0.778" stop-color="#8a1700"/><stop offset="0.852" stop-color="#7e0b00"/><stop offset="1.000" stop-color="#520100"/></linearGradient>
<linearGradient id="ho85" gradientUnits="userSpaceOnUse" x1="1054" y1="0" x2="1616" y2="0"><stop offset="0.000" stop-color="#007b4f"/><stop offset="0.319" stop-color="#00b55b"/><stop offset="0.359" stop-color="#06b958"/><stop offset="0.486" stop-color="#8fa83e"/><stop offset="0.507" stop-color="#a39f37"/><stop offset="0.553" stop-color="#9a6a1d"/><stop offset="0.626" stop-color="#923e08"/><stop offset="0.765" stop-color="#8b1800"/><stop offset="0.849" stop-color="#7f0b00"/><stop offset="1.000" stop-color="#530000"/></linearGradient>
<linearGradient id="ho86" gradientUnits="userSpaceOnUse" x1="1054" y1="0" x2="1616" y2="0"><stop offset="0.000" stop-color="#007b51"/><stop offset="0.320" stop-color="#00b65f"/><stop offset="0.358" stop-color="#06b95c"/><stop offset="0.484" stop-color="#91a742"/><stop offset="0.504" stop-color="#a39e3b"/><stop offset="0.550" stop-color="#9a6920"/><stop offset="0.623" stop-color="#923d0a"/><stop offset="0.751" stop-color="#8d1900"/><stop offset="0.849" stop-color="#800a00"/><stop offset="1.000" stop-color="#530000"/></linearGradient>
<linearGradient id="ho87" gradientUnits="userSpaceOnUse" x1="1054" y1="0" x2="1616" y2="0"><stop offset="0.000" stop-color="#007c53"/><stop offset="0.324" stop-color="#00b763"/><stop offset="0.356" stop-color="#06b960"/><stop offset="0.480" stop-color="#92a847"/><stop offset="0.500" stop-color="#a39e3f"/><stop offset="0.546" stop-color="#9a6823"/><stop offset="0.619" stop-color="#923c0b"/><stop offset="0.740" stop-color="#8d1a00"/><stop offset="0.847" stop-color="#810900"/><stop offset="1.000" stop-color="#540000"/></linearGradient>
<linearGradient id="ho88" gradientUnits="userSpaceOnUse" x1="1054" y1="0" x2="1616" y2="0"><stop offset="0.000" stop-color="#007c56"/><stop offset="0.327" stop-color="#00b867"/><stop offset="0.354" stop-color="#06ba65"/><stop offset="0.477" stop-color="#92a84b"/><stop offset="0.495" stop-color="#a4a045"/><stop offset="0.539" stop-color="#9b6a27"/><stop offset="0.609" stop-color="#923e0f"/><stop offset="0.726" stop-color="#8e1b00"/><stop offset="0.845" stop-color="#820900"/><stop offset="1.000" stop-color="#540000"/></linearGradient>
<linearGradient id="ho89" gradientUnits="userSpaceOnUse" x1="1054" y1="0" x2="1616" y2="0"><stop offset="0.000" stop-color="#007c58"/><stop offset="0.331" stop-color="#00b96b"/><stop offset="0.354" stop-color="#09ba69"/><stop offset="0.477" stop-color="#97a74f"/><stop offset="0.491" stop-color="#a4a04a"/><stop offset="0.536" stop-color="#9b6a2a"/><stop offset="0.605" stop-color="#923d11"/><stop offset="0.726" stop-color="#8d1a00"/><stop offset="0.843" stop-color="#830800"/><stop offset="1.000" stop-color="#540000"/></linearGradient>
<linearGradient id="ho90" gradientUnits="userSpaceOnUse" x1="1054" y1="0" x2="1616" y2="0"><stop offset="0.000" stop-color="#007d5b"/><stop offset="0.335" stop-color="#00ba70"/><stop offset="0.356" stop-color="#0dba6d"/><stop offset="0.480" stop-color="#a0a653"/><stop offset="0.496" stop-color="#a29246"/><stop offset="0.544" stop-color="#995e27"/><stop offset="0.621" stop-color="#91340e"/><stop offset="0.746" stop-color="#8d1500"/><stop offset="0.845" stop-color="#830700"/><stop offset="1.000" stop-color="#550000"/></linearGradient>
<linearGradient id="ho91" gradientUnits="userSpaceOnUse" x1="1054" y1="0" x2="1616" y2="0"><stop offset="0.000" stop-color="#007d5d"/><stop offset="0.335" stop-color="#00ba74"/><stop offset="0.358" stop-color="#11ba72"/><stop offset="0.480" stop-color="#a5a557"/><stop offset="0.523" stop-color="#9c6d34"/><stop offset="0.587" stop-color="#934018"/><stop offset="0.703" stop-color="#8e1c02"/><stop offset="0.840" stop-color="#860700"/><stop offset="1.000" stop-color="#550000"/></linearGradient>
<linearGradient id="ho92" gradientUnits="userSpaceOnUse" x1="1054" y1="0" x2="1616" y2="0"><stop offset="0.000" stop-color="#007e60"/><stop offset="0.335" stop-color="#00ba79"/><stop offset="0.361" stop-color="#18ba76"/><stop offset="0.477" stop-color="#a6a55c"/><stop offset="0.518" stop-color="#9c6e38"/><stop offset="0.580" stop-color="#94411b"/><stop offset="0.692" stop-color="#8e1c04"/><stop offset="0.838" stop-color="#870600"/><stop offset="1.000" stop-color="#560000"/></linearGradient>
<linearGradient id="ho93" gradientUnits="userSpaceOnUse" x1="1054" y1="0" x2="1616" y2="0"><stop offset="0.000" stop-color="#007e62"/><stop offset="0.336" stop-color="#01bb7e"/><stop offset="0.423" stop-color="#68b26f"/><stop offset="0.473" stop-color="#a6a461"/><stop offset="0.514" stop-color="#9d6d3c"/><stop offset="0.577" stop-color="#94401e"/><stop offset="0.689" stop-color="#8e1c05"/><stop offset="0.838" stop-color="#870500"/><stop offset="1.000" stop-color="#560000"/></linearGradient>
<linearGradient id="ho94" gradientUnits="userSpaceOnUse" x1="1054" y1="0" x2="1616" y2="0"><stop offset="0.000" stop-color="#007f65"/><stop offset="0.336" stop-color="#02bb83"/><stop offset="0.450" stop-color="#8fab6d"/><stop offset="0.470" stop-color="#a6a466"/><stop offset="0.511" stop-color="#9d6c3f"/><stop offset="0.573" stop-color="#943f20"/><stop offset="0.685" stop-color="#8e1b06"/><stop offset="0.840" stop-color="#870400"/><stop offset="1.000" stop-color="#560000"/></linearGradient>
<linearGradient id="ho95" gradientUnits="userSpaceOnUse" x1="1054" y1="0" x2="1616" y2="0"><stop offset="0.000" stop-color="#007f68"/><stop offset="0.336" stop-color="#03bb88"/><stop offset="0.448" stop-color="#92ab73"/><stop offset="0.466" stop-color="#a7a46c"/><stop offset="0.507" stop-color="#9d6c43"/><stop offset="0.569" stop-color="#943f22"/><stop offset="0.681" stop-color="#8e1a08"/><stop offset="0.840" stop-color="#880300"/><stop offset="1.000" stop-color="#560000"/></linearGradient>
<linearGradient id="ho96" gradientUnits="userSpaceOnUse" x1="1054" y1="0" x2="1616" y2="0"><stop offset="0.000" stop-color="#007f6b"/><stop offset="0.335" stop-color="#04bb8e"/><stop offset="0.447" stop-color="#95ab79"/><stop offset="0.463" stop-color="#a7a372"/><stop offset="0.502" stop-color="#9e6d48"/><stop offset="0.562" stop-color="#943f26"/><stop offset="0.671" stop-color="#8e1b0a"/><stop offset="0.831" stop-color="#8b0300"/><stop offset="1.000" stop-color="#560000"/></linearGradient>
<linearGradient id="ho97" gradientUnits="userSpaceOnUse" x1="1054" y1="0" x2="1616" y2="0"><stop offset="0.000" stop-color="#00806e"/><stop offset="0.333" stop-color="#04bb93"/><stop offset="0.443" stop-color="#96ac80"/><stop offset="0.459" stop-color="#a8a378"/><stop offset="0.498" stop-color="#9e6c4c"/><stop offset="0.559" stop-color="#943e28"/><stop offset="0.667" stop-color="#8e1a0c"/><stop offset="0.822" stop-color="#8c0300"/><stop offset="1.000" stop-color="#550000"/></linearGradient>
<linearGradient id="ho98" gradientUnits="userSpaceOnUse" x1="1054" y1="0" x2="1616" y2="0"><stop offset="0.000" stop-color="#008071"/><stop offset="0.331" stop-color="#04bc99"/><stop offset="0.441" stop-color="#99ac86"/><stop offset="0.454" stop-color="#a9a681"/><stop offset="0.491" stop-color="#9f6f53"/><stop offset="0.548" stop-color="#95412e"/><stop offset="0.649" stop-color="#8e1c10"/><stop offset="0.799" stop-color="#8c0400"/><stop offset="0.852" stop-color="#850100"/><stop offset="1.000" stop-color="#550000"/></linearGradient>
<linearGradient id="ho99" gradientUnits="userSpaceOnUse" x1="1054" y1="0" x2="1616" y2="0"><stop offset="0.000" stop-color="#008174"/><stop offset="0.327" stop-color="#03bca0"/><stop offset="0.436" stop-color="#98ad8e"/><stop offset="0.450" stop-color="#a9a687"/><stop offset="0.488" stop-color="#a06e58"/><stop offset="0.544" stop-color="#954031"/><stop offset="0.644" stop-color="#8e1c12"/><stop offset="0.797" stop-color="#8c0400"/><stop offset="0.854" stop-color="#850100"/><stop offset="1.000" stop-color="#550000"/></linearGradient>
<linearGradient id="ho100" gradientUnits="userSpaceOnUse" x1="1054" y1="0" x2="1616" y2="0"><stop offset="0.000" stop-color="#008177"/><stop offset="0.326" stop-color="#03bca6"/><stop offset="0.434" stop-color="#9bad95"/><stop offset="0.447" stop-color="#aaa58e"/><stop offset="0.484" stop-color="#a06d5c"/><stop offset="0.541" stop-color="#964034"/><stop offset="0.641" stop-color="#8e1b13"/><stop offset="0.799" stop-color="#8c0301"/><stop offset="0.858" stop-color="#840000"/><stop offset="1.000" stop-color="#550000"/></linearGradient>
<linearGradient id="ho101" gradientUnits="userSpaceOnUse" x1="1054" y1="0" x2="1616" y2="0"><stop offset="0.000" stop-color="#00827a"/><stop offset="0.324" stop-color="#03bcad"/><stop offset="0.431" stop-color="#9cae9d"/><stop offset="0.443" stop-color="#aaa595"/><stop offset="0.480" stop-color="#a16d61"/><stop offset="0.536" stop-color="#964037"/><stop offset="0.633" stop-color="#8f1b16"/><stop offset="0.797" stop-color="#8c0201"/><stop offset="0.858" stop-color="#840000"/><stop offset="1.000" stop-color="#550000"/></linearGradient>
<linearGradient id="ho102" gradientUnits="userSpaceOnUse" x1="1054" y1="0" x2="1616" y2="0"><stop offset="0.000" stop-color="#00827e"/><stop offset="0.322" stop-color="#03bcb4"/><stop offset="0.425" stop-color="#9aafa5"/><stop offset="0.438" stop-color="#aba99f"/><stop offset="0.473" stop-color="#a27069"/><stop offset="0.527" stop-color="#97423d"/><stop offset="0.619" stop-color="#8f1d1a"/><stop offset="0.790" stop-color="#8c0201"/><stop offset="0.852" stop-color="#860000"/><stop offset="1.000" stop-color="#550000"/></linearGradient>
<linearGradient id="ho103" gradientUnits="userSpaceOnUse" x1="1054" y1="0" x2="1616" y2="0"><stop offset="0.000" stop-color="#008281"/><stop offset="0.320" stop-color="#04bdbb"/><stop offset="0.420" stop-color="#99b0ae"/><stop offset="0.434" stop-color="#aca8a7"/><stop offset="0.470" stop-color="#a26f6e"/><stop offset="0.523" stop-color="#984140"/><stop offset="0.616" stop-color="#8f1c1c"/><stop offset="0.790" stop-color="#8c0202"/><stop offset="0.852" stop-color="#860000"/><stop offset="1.000" stop-color="#540000"/></linearGradient>
<linearGradient id="ho104" gradientUnits="userSpaceOnUse" x1="1054" y1="0" x2="1616" y2="0"><stop offset="0.000" stop-color="#008183"/><stop offset="0.319" stop-color="#03b7bd"/><stop offset="0.423" stop-color="#9fa8ae"/><stop offset="0.434" stop-color="#aca1a7"/><stop offset="0.470" stop-color="#a26a6f"/><stop offset="0.523" stop-color="#973e41"/><stop offset="0.616" stop-color="#8f1a1d"/><stop offset="0.786" stop-color="#8c0102"/><stop offset="0.852" stop-color="#860000"/><stop offset="1.000" stop-color="#540000"/></linearGradient>
<linearGradient id="ho105" gradientUnits="userSpaceOnUse" x1="1054" y1="0" x2="1616" y2="0"><stop offset="0.000" stop-color="#007e83"/><stop offset="0.317" stop-color="#03b1bd"/><stop offset="0.423" stop-color="#9ea0ae"/><stop offset="0.434" stop-color="#ab99a8"/><stop offset="0.470" stop-color="#a26570"/><stop offset="0.523" stop-color="#973b42"/><stop offset="0.616" stop-color="#8f181d"/><stop offset="0.781" stop-color="#8c0103"/><stop offset="0.851" stop-color="#860000"/><stop offset="1.000" stop-color="#540000"/></linearGradient>
<linearGradient id="ho106" gradientUnits="userSpaceOnUse" x1="1054" y1="0" x2="1616" y2="0"><stop offset="0.000" stop-color="#007c84"/><stop offset="0.315" stop-color="#03aabd"/><stop offset="0.422" stop-color="#9b99ae"/><stop offset="0.434" stop-color="#ab92a8"/><stop offset="0.472" stop-color="#a15f6f"/><stop offset="0.527" stop-color="#963641"/><stop offset="0.625" stop-color="#8f151c"/><stop offset="0.783" stop-color="#8c0103"/><stop offset="0.849" stop-color="#870000"/><stop offset="1.000" stop-color="#540000"/></linearGradient>
<linearGradient id="ho107" gradientUnits="userSpaceOnUse" x1="1054" y1="0" x2="1616" y2="0"><stop offset="0.000" stop-color="#007984"/><stop offset="0.313" stop-color="#03a4bd"/><stop offset="0.420" stop-color="#9892af"/><stop offset="0.434" stop-color="#ab8ca8"/><stop offset="0.472" stop-color="#a15a6f"/><stop offset="0.527" stop-color="#963342"/><stop offset="0.625" stop-color="#8f131d"/><stop offset="0.778" stop-color="#8c0104"/><stop offset="0.845" stop-color="#870001"/><stop offset="1.000" stop-color="#540000"/></linearGradient>
<linearGradient id="ho108" gradientUnits="userSpaceOnUse" x1="1054" y1="0" x2="1616" y2="0"><stop offset="0.000" stop-color="#007685"/><stop offset="0.311" stop-color="#039ebe"/><stop offset="0.418" stop-color="#958baf"/><stop offset="0.436" stop-color="#aa82a5"/><stop offset="0.473" stop-color="#a0546e"/><stop offset="0.530" stop-color="#962e41"/><stop offset="0.632" stop-color="#8e101c"/><stop offset="0.781" stop-color="#8c0004"/><stop offset="0.843" stop-color="#870001"/><stop offset="1.000" stop-color="#530000"/></linearGradient>
<linearGradient id="ho109" gradientUnits="userSpaceOnUse" x1="1054" y1="0" x2="1616" y2="0"><stop offset="0.000" stop-color="#007485"/><stop offset="0.310" stop-color="#0398be"/><stop offset="0.416" stop-color="#9285af"/><stop offset="0.436" stop-color="#aa7ca6"/><stop offset="0.475" stop-color="#a04e6d"/><stop offset="0.534" stop-color="#952a40"/><stop offset="0.639" stop-color="#8e0d1b"/><stop offset="0.788" stop-color="#8c0004"/><stop offset="0.847" stop-color="#850001"/><stop offset="1.000" stop-color="#530000"/></linearGradient>
<linearGradient id="ho110" gradientUnits="userSpaceOnUse" x1="1054" y1="0" x2="1616" y2="0"><stop offset="0.000" stop-color="#007186"/><stop offset="0.308" stop-color="#0392be"/><stop offset="0.415" stop-color="#907eaf"/><stop offset="0.436" stop-color="#aa76a6"/><stop offset="0.475" stop-color="#9f4a6e"/><stop offset="0.534" stop-color="#952841"/><stop offset="0.639" stop-color="#8e0b1c"/><stop offset="0.790" stop-color="#8c0005"/><stop offset="0.852" stop-color="#820001"/><stop offset="1.000" stop-color="#530000"/></linearGradient>
<linearGradient id="ho111" gradientUnits="userSpaceOnUse" x1="1054" y1="0" x2="1616" y2="0"><stop offset="0.000" stop-color="#006f86"/><stop offset="0.306" stop-color="#038dbe"/><stop offset="0.413" stop-color="#8d79b0"/><stop offset="0.436" stop-color="#a970a6"/><stop offset="0.475" stop-color="#9f466f"/><stop offset="0.534" stop-color="#952542"/><stop offset="0.639" stop-color="#8e0a1d"/><stop offset="0.797" stop-color="#8c0004"/><stop offset="0.859" stop-color="#7f0001"/><stop offset="1.000" stop-color="#530000"/></linearGradient>
<linearGradient id="ho112" gradientUnits="userSpaceOnUse" x1="1054" y1="0" x2="1616" y2="0"><stop offset="0.000" stop-color="#006c86"/><stop offset="0.304" stop-color="#0387bf"/><stop offset="0.411" stop-color="#8b73b0"/><stop offset="0.436" stop-color="#a96aa7"/><stop offset="0.475" stop-color="#9f426f"/><stop offset="0.536" stop-color="#952242"/><stop offset="0.642" stop-color="#8e081d"/><stop offset="0.831" stop-color="#880002"/><stop offset="1.000" stop-color="#530000"/></linearGradient>
<linearGradient id="ho113" gradientUnits="userSpaceOnUse" x1="1054" y1="0" x2="1616" y2="0"><stop offset="0.000" stop-color="#006a87"/><stop offset="0.304" stop-color="#0482bf"/><stop offset="0.411" stop-color="#8b6db0"/><stop offset="0.436" stop-color="#a964a7"/><stop offset="0.477" stop-color="#9f3d6e"/><stop offset="0.537" stop-color="#951f42"/><stop offset="0.646" stop-color="#8e061d"/><stop offset="0.836" stop-color="#850002"/><stop offset="1.000" stop-color="#530000"/></linearGradient>
<linearGradient id="ho114" gradientUnits="userSpaceOnUse" x1="1054" y1="0" x2="1616" y2="0"><stop offset="0.000" stop-color="#006887"/><stop offset="0.301" stop-color="#037dbf"/><stop offset="0.407" stop-color="#8668b1"/><stop offset="0.438" stop-color="#a85da4"/><stop offset="0.479" stop-color="#9e396d"/><stop offset="0.541" stop-color="#941b41"/><stop offset="0.653" stop-color="#8e031c"/><stop offset="0.836" stop-color="#840003"/><stop offset="1.000" stop-color="#520000"/></linearGradient>
<linearGradient id="ho115" gradientUnits="userSpaceOnUse" x1="1054" y1="0" x2="1616" y2="0"><stop offset="0.000" stop-color="#006588"/><stop offset="0.297" stop-color="#0279bf"/><stop offset="0.406" stop-color="#8463b1"/><stop offset="0.438" stop-color="#a858a4"/><stop offset="0.479" stop-color="#9e356e"/><stop offset="0.541" stop-color="#941941"/><stop offset="0.653" stop-color="#8e031d"/><stop offset="0.838" stop-color="#830003"/><stop offset="1.000" stop-color="#520000"/></linearGradient>
<linearGradient id="ho116" gradientUnits="userSpaceOnUse" x1="1054" y1="0" x2="1616" y2="0"><stop offset="0.000" stop-color="#006388"/><stop offset="0.295" stop-color="#0274bf"/><stop offset="0.404" stop-color="#825eb1"/><stop offset="0.438" stop-color="#a853a5"/><stop offset="0.480" stop-color="#9e316d"/><stop offset="0.544" stop-color="#941641"/><stop offset="0.660" stop-color="#8e011c"/><stop offset="0.843" stop-color="#800003"/><stop offset="1.000" stop-color="#520000"/></linearGradient>
<linearGradient id="ho117" gradientUnits="userSpaceOnUse" x1="1054" y1="0" x2="1616" y2="0"><stop offset="0.000" stop-color="#006189"/><stop offset="0.292" stop-color="#016fbf"/><stop offset="0.361" stop-color="#4e64ba"/><stop offset="0.438" stop-color="#a84ea5"/><stop offset="0.480" stop-color="#9e2d6e"/><stop offset="0.546" stop-color="#941341"/><stop offset="0.664" stop-color="#8e011c"/><stop offset="0.843" stop-color="#800003"/><stop offset="1.000" stop-color="#520000"/></linearGradient>
<linearGradient id="ho118" gradientUnits="userSpaceOnUse" x1="1054" y1="0" x2="1616" y2="0"><stop offset="0.000" stop-color="#005e89"/><stop offset="0.290" stop-color="#016bc0"/><stop offset="0.359" stop-color="#4c5fbb"/><stop offset="0.438" stop-color="#a849a6"/><stop offset="0.480" stop-color="#9e2a6f"/><stop offset="0.546" stop-color="#941141"/><stop offset="0.662" stop-color="#8e001d"/><stop offset="0.845" stop-color="#7e0004"/><stop offset="1.000" stop-color="#510000"/></linearGradient>
<linearGradient id="ho119" gradientUnits="userSpaceOnUse" x1="1054" y1="0" x2="1616" y2="0"><stop offset="0.000" stop-color="#005c8a"/><stop offset="0.286" stop-color="#0067c0"/><stop offset="0.320" stop-color="#2062bf"/><stop offset="0.436" stop-color="#a745a8"/><stop offset="0.480" stop-color="#9e276f"/><stop offset="0.546" stop-color="#940f42"/><stop offset="0.660" stop-color="#8e001e"/><stop offset="0.845" stop-color="#7d0004"/><stop offset="1.000" stop-color="#510000"/></linearGradient>
<linearGradient id="ho120" gradientUnits="userSpaceOnUse" x1="1054" y1="0" x2="1616" y2="0"><stop offset="0.000" stop-color="#005a8a"/><stop offset="0.285" stop-color="#0062c0"/><stop offset="0.319" stop-color="#1f5dbf"/><stop offset="0.436" stop-color="#a741a8"/><stop offset="0.484" stop-color="#9d226d"/><stop offset="0.552" stop-color="#940c41"/><stop offset="0.667" stop-color="#8e001d"/><stop offset="0.845" stop-color="#7d0004"/><stop offset="1.000" stop-color="#500000"/></linearGradient>
<linearGradient id="ho121" gradientUnits="userSpaceOnUse" x1="1054" y1="0" x2="1616" y2="0"><stop offset="0.000" stop-color="#00588a"/><stop offset="0.281" stop-color="#005ec0"/><stop offset="0.308" stop-color="#155bc0"/><stop offset="0.429" stop-color="#9e3eaa"/><stop offset="0.441" stop-color="#a738a1"/><stop offset="0.488" stop-color="#9d1e6a"/><stop offset="0.559" stop-color="#93083e"/><stop offset="0.692" stop-color="#8c0019"/><stop offset="0.847" stop-color="#7b0005"/><stop offset="1.000" stop-color="#500000"/></linearGradient>
<linearGradient id="ho122" gradientUnits="userSpaceOnUse" x1="1054" y1="0" x2="1616" y2="0"><stop offset="0.000" stop-color="#00558b"/><stop offset="0.279" stop-color="#005ac0"/><stop offset="0.306" stop-color="#1556c0"/><stop offset="0.427" stop-color="#9c3aaa"/><stop offset="0.441" stop-color="#a734a2"/><stop offset="0.488" stop-color="#9d1b6b"/><stop offset="0.559" stop-color="#93063f"/><stop offset="0.694" stop-color="#8b0019"/><stop offset="0.847" stop-color="#7b0005"/><stop offset="1.000" stop-color="#4f0000"/></linearGradient>
<linearGradient id="ho123" gradientUnits="userSpaceOnUse" x1="1054" y1="0" x2="1616" y2="0"><stop offset="0.000" stop-color="#00538b"/><stop offset="0.276" stop-color="#0057c0"/><stop offset="0.301" stop-color="#1153c0"/><stop offset="0.420" stop-color="#9438ac"/><stop offset="0.441" stop-color="#a730a2"/><stop offset="0.488" stop-color="#9d186c"/><stop offset="0.559" stop-color="#940540"/><stop offset="0.696" stop-color="#8a0019"/><stop offset="0.847" stop-color="#7a0006"/><stop offset="1.000" stop-color="#4e0000"/></linearGradient>
<linearGradient id="ho124" gradientUnits="userSpaceOnUse" x1="1054" y1="0" x2="1616" y2="0"><stop offset="0.000" stop-color="#00518c"/><stop offset="0.274" stop-color="#0053c0"/><stop offset="0.299" stop-color="#104fc0"/><stop offset="0.418" stop-color="#9234ad"/><stop offset="0.441" stop-color="#a72ca2"/><stop offset="0.489" stop-color="#9d156b"/><stop offset="0.562" stop-color="#93033f"/><stop offset="0.706" stop-color="#880018"/><stop offset="0.847" stop-color="#790006"/><stop offset="1.000" stop-color="#4e0000"/></linearGradient>
<linearGradient id="ho125" gradientUnits="userSpaceOnUse" x1="1054" y1="0" x2="1616" y2="0"><stop offset="0.000" stop-color="#004f8c"/><stop offset="0.272" stop-color="#004fc1"/><stop offset="0.297" stop-color="#104bc0"/><stop offset="0.418" stop-color="#922fac"/><stop offset="0.441" stop-color="#a728a3"/><stop offset="0.489" stop-color="#9d126c"/><stop offset="0.564" stop-color="#93023f"/><stop offset="0.706" stop-color="#880018"/><stop offset="0.847" stop-color="#780006"/><stop offset="1.000" stop-color="#4d0000"/></linearGradient>
<linearGradient id="ho126" gradientUnits="userSpaceOnUse" x1="1054" y1="0" x2="1616" y2="0"><stop offset="0.000" stop-color="#004d8d"/><stop offset="0.270" stop-color="#004bc1"/><stop offset="0.295" stop-color="#1047c0"/><stop offset="0.416" stop-color="#902cad"/><stop offset="0.441" stop-color="#a724a3"/><stop offset="0.489" stop-color="#9d0f6d"/><stop offset="0.564" stop-color="#940140"/><stop offset="0.703" stop-color="#870019"/><stop offset="0.847" stop-color="#770007"/><stop offset="1.000" stop-color="#4d0000"/></linearGradient>
<linearGradient id="ho127" gradientUnits="userSpaceOnUse" x1="1054" y1="0" x2="1616" y2="0"><stop offset="0.000" stop-color="#004b8d"/><stop offset="0.269" stop-color="#0048c1"/><stop offset="0.294" stop-color="#1044c1"/><stop offset="0.416" stop-color="#9028ad"/><stop offset="0.441" stop-color="#a721a4"/><stop offset="0.489" stop-color="#9d0d6e"/><stop offset="0.564" stop-color="#940041"/><stop offset="0.699" stop-color="#87001a"/><stop offset="0.849" stop-color="#760007"/><stop offset="1.000" stop-color="#4c0000"/></linearGradient>
<linearGradient id="ho128" gradientUnits="userSpaceOnUse" x1="1054" y1="0" x2="1616" y2="0"><stop offset="0.000" stop-color="#00498d"/><stop offset="0.265" stop-color="#0044c1"/><stop offset="0.290" stop-color="#0e40c1"/><stop offset="0.413" stop-color="#8c25ae"/><stop offset="0.443" stop-color="#a61ca2"/><stop offset="0.493" stop-color="#9c096b"/><stop offset="0.571" stop-color="#93003f"/><stop offset="0.706" stop-color="#85001a"/><stop offset="0.849" stop-color="#750007"/><stop offset="1.000" stop-color="#4c0000"/></linearGradient>
<linearGradient id="ho129" gradientUnits="userSpaceOnUse" x1="1054" y1="0" x2="1616" y2="0"><stop offset="0.000" stop-color="#00478e"/><stop offset="0.263" stop-color="#0041c1"/><stop offset="0.288" stop-color="#0d3dc1"/><stop offset="0.413" stop-color="#8c21ae"/><stop offset="0.443" stop-color="#a619a2"/><stop offset="0.493" stop-color="#9d076c"/><stop offset="0.571" stop-color="#93003f"/><stop offset="0.703" stop-color="#85001b"/><stop offset="0.849" stop-color="#740008"/><stop offset="1.000" stop-color="#4b0000"/></linearGradient>
<linearGradient id="ho130" gradientUnits="userSpaceOnUse" x1="1054" y1="0" x2="1616" y2="0"><stop offset="0.000" stop-color="#00458e"/><stop offset="0.262" stop-color="#003ec1"/><stop offset="0.286" stop-color="#0d3ac1"/><stop offset="0.411" stop-color="#8a1eae"/><stop offset="0.443" stop-color="#a615a3"/><stop offset="0.495" stop-color="#9c046b"/><stop offset="0.577" stop-color="#92003d"/><stop offset="0.712" stop-color="#830019"/><stop offset="0.849" stop-color="#740008"/><stop offset="1.000" stop-color="#4b0000"/></linearGradient>
<linearGradient id="ho131" gradientUnits="userSpaceOnUse" x1="1054" y1="0" x2="1616" y2="0"><stop offset="0.000" stop-color="#00438f"/><stop offset="0.260" stop-color="#003ac1"/><stop offset="0.285" stop-color="#0d36c1"/><stop offset="0.411" stop-color="#8a1aae"/><stop offset="0.443" stop-color="#a612a3"/><stop offset="0.495" stop-color="#9d026c"/><stop offset="0.580" stop-color="#91003c"/><stop offset="0.719" stop-color="#820019"/><stop offset="0.849" stop-color="#730008"/><stop offset="1.000" stop-color="#4a0000"/></linearGradient>
<linearGradient id="ho132" gradientUnits="userSpaceOnUse" x1="1054" y1="0" x2="1616" y2="0"><stop offset="0.000" stop-color="#00418f"/><stop offset="0.258" stop-color="#0037c1"/><stop offset="0.285" stop-color="#0e33c1"/><stop offset="0.415" stop-color="#8e16ad"/><stop offset="0.443" stop-color="#a70ea4"/><stop offset="0.495" stop-color="#9d016d"/><stop offset="0.582" stop-color="#90003c"/><stop offset="0.722" stop-color="#810018"/><stop offset="0.849" stop-color="#720009"/><stop offset="1.000" stop-color="#490001"/></linearGradient>
<linearGradient id="ho133" gradientUnits="userSpaceOnUse" x1="1054" y1="0" x2="1616" y2="0"><stop offset="0.000" stop-color="#003f90"/><stop offset="0.256" stop-color="#0034c1"/><stop offset="0.283" stop-color="#0e30c1"/><stop offset="0.413" stop-color="#8c13ae"/><stop offset="0.445" stop-color="#a60ba2"/><stop offset="0.498" stop-color="#9c006b"/><stop offset="0.584" stop-color="#8f003c"/><stop offset="0.728" stop-color="#7f0018"/><stop offset="0.851" stop-color="#710009"/><stop offset="1.000" stop-color="#490001"/></linearGradient>
<linearGradient id="ho134" gradientUnits="userSpaceOnUse" x1="1054" y1="0" x2="1616" y2="0"><stop offset="0.000" stop-color="#003d90"/><stop offset="0.254" stop-color="#0031c1"/><stop offset="0.281" stop-color="#0e2cc1"/><stop offset="0.413" stop-color="#8c0fad"/><stop offset="0.445" stop-color="#a607a2"/><stop offset="0.498" stop-color="#9c006c"/><stop offset="0.580" stop-color="#8e003d"/><stop offset="0.721" stop-color="#7f0019"/><stop offset="0.851" stop-color="#700009"/><stop offset="1.000" stop-color="#480001"/></linearGradient>
<linearGradient id="ho135" gradientUnits="userSpaceOnUse" x1="1054" y1="0" x2="1616" y2="0"><stop offset="0.000" stop-color="#003b90"/><stop offset="0.254" stop-color="#002ec1"/><stop offset="0.283" stop-color="#1129c1"/><stop offset="0.420" stop-color="#930bac"/><stop offset="0.445" stop-color="#a605a2"/><stop offset="0.498" stop-color="#9d006c"/><stop offset="0.577" stop-color="#8e003f"/><stop offset="0.714" stop-color="#7f001b"/><stop offset="0.851" stop-color="#6f000a"/><stop offset="1.000" stop-color="#480001"/></linearGradient>
<linearGradient id="ho136" gradientUnits="userSpaceOnUse" x1="1054" y1="0" x2="1616" y2="0"><stop offset="0.000" stop-color="#003991"/><stop offset="0.253" stop-color="#002bc1"/><stop offset="0.281" stop-color="#1126c1"/><stop offset="0.420" stop-color="#9207ac"/><stop offset="0.445" stop-color="#a602a3"/><stop offset="0.502" stop-color="#9b006a"/><stop offset="0.584" stop-color="#8c003d"/><stop offset="0.728" stop-color="#7d0019"/><stop offset="0.851" stop-color="#6e000a"/><stop offset="1.000" stop-color="#470001"/></linearGradient>
<linearGradient id="ho137" gradientUnits="userSpaceOnUse" x1="1054" y1="0" x2="1616" y2="0"><stop offset="0.000" stop-color="#003791"/><stop offset="0.251" stop-color="#0028c1"/><stop offset="0.279" stop-color="#1023c1"/><stop offset="0.420" stop-color="#9204ac"/><stop offset="0.445" stop-color="#a601a3"/><stop offset="0.505" stop-color="#990067"/><stop offset="0.589" stop-color="#8b003b"/><stop offset="0.738" stop-color="#7b0018"/><stop offset="0.851" stop-color="#6e000a"/><stop offset="1.000" stop-color="#470001"/></linearGradient>
<linearGradient id="ho138" gradientUnits="userSpaceOnUse" x1="1054" y1="0" x2="1616" y2="0"><stop offset="0.000" stop-color="#003592"/><stop offset="0.249" stop-color="#0025c1"/><stop offset="0.278" stop-color="#1020c1"/><stop offset="0.418" stop-color="#9103ac"/><stop offset="0.447" stop-color="#a600a1"/><stop offset="0.505" stop-color="#990067"/><stop offset="0.591" stop-color="#8a003b"/><stop offset="0.742" stop-color="#7a0017"/><stop offset="0.852" stop-color="#6c000a"/><stop offset="1.000" stop-color="#460001"/></linearGradient>
<linearGradient id="ho139" gradientUnits="userSpaceOnUse" x1="1054" y1="0" x2="1616" y2="0"><stop offset="0.000" stop-color="#003392"/><stop offset="0.249" stop-color="#0022c2"/><stop offset="0.283" stop-color="#161cc1"/><stop offset="0.438" stop-color="#a200a8"/><stop offset="0.456" stop-color="#a40097"/><stop offset="0.514" stop-color="#960061"/><stop offset="0.605" stop-color="#870036"/><stop offset="0.770" stop-color="#770014"/><stop offset="0.856" stop-color="#6b000a"/><stop offset="1.000" stop-color="#450001"/></linearGradient>
<linearGradient id="ho140" gradientUnits="userSpaceOnUse" x1="1054" y1="0" x2="1616" y2="0"><stop offset="0.000" stop-color="#003192"/><stop offset="0.247" stop-color="#001fc2"/><stop offset="0.281" stop-color="#1619c1"/><stop offset="0.429" stop-color="#9a00aa"/><stop offset="0.447" stop-color="#a600a2"/><stop offset="0.502" stop-color="#98006a"/><stop offset="0.585" stop-color="#89003d"/><stop offset="0.733" stop-color="#790019"/><stop offset="0.852" stop-color="#6b000b"/><stop offset="1.000" stop-color="#450001"/></linearGradient>
<linearGradient id="ho141" gradientUnits="userSpaceOnUse" x1="1054" y1="0" x2="1616" y2="0"><stop offset="0.000" stop-color="#003093"/><stop offset="0.247" stop-color="#001cc2"/><stop offset="0.288" stop-color="#1d15c1"/><stop offset="0.420" stop-color="#9200ac"/><stop offset="0.447" stop-color="#a500a1"/><stop offset="0.502" stop-color="#97006a"/><stop offset="0.585" stop-color="#88003d"/><stop offset="0.733" stop-color="#79001a"/><stop offset="0.852" stop-color="#6a000b"/><stop offset="1.000" stop-color="#440002"/></linearGradient>
<linearGradient id="ho142" gradientUnits="userSpaceOnUse" x1="1054" y1="0" x2="1616" y2="0"><stop offset="0.000" stop-color="#002e93"/><stop offset="0.246" stop-color="#001ac2"/><stop offset="0.286" stop-color="#1d12c1"/><stop offset="0.411" stop-color="#8a00ae"/><stop offset="0.447" stop-color="#a400a1"/><stop offset="0.502" stop-color="#96006a"/><stop offset="0.587" stop-color="#87003d"/><stop offset="0.737" stop-color="#770019"/><stop offset="0.852" stop-color="#69000b"/><stop offset="1.000" stop-color="#440002"/></linearGradient>
<linearGradient id="ho143" gradientUnits="userSpaceOnUse" x1="1054" y1="0" x2="1616" y2="0"><stop offset="0.000" stop-color="#002c94"/><stop offset="0.246" stop-color="#0117c2"/><stop offset="0.308" stop-color="#300bbf"/><stop offset="0.420" stop-color="#9100ab"/><stop offset="0.448" stop-color="#a2009e"/><stop offset="0.505" stop-color="#950067"/><stop offset="0.593" stop-color="#86003b"/><stop offset="0.747" stop-color="#760018"/><stop offset="0.854" stop-color="#68000c"/><stop offset="1.000" stop-color="#430002"/></linearGradient>
<linearGradient id="ho144" gradientUnits="userSpaceOnUse" x1="1054" y1="0" x2="1616" y2="0"><stop offset="0.000" stop-color="#002a94"/><stop offset="0.244" stop-color="#0114c2"/><stop offset="0.306" stop-color="#3008bf"/><stop offset="0.432" stop-color="#9a00a6"/><stop offset="0.450" stop-color="#a1009b"/><stop offset="0.509" stop-color="#930065"/><stop offset="0.600" stop-color="#840039"/><stop offset="0.762" stop-color="#740016"/><stop offset="0.856" stop-color="#67000c"/><stop offset="1.000" stop-color="#430002"/></linearGradient>
<linearGradient id="ho145" gradientUnits="userSpaceOnUse" x1="1054" y1="0" x2="1616" y2="0"><stop offset="0.000" stop-color="#002894"/><stop offset="0.244" stop-color="#0112c2"/><stop offset="0.375" stop-color="#6c00b5"/><stop offset="0.448" stop-color="#a1009d"/><stop offset="0.507" stop-color="#930066"/><stop offset="0.598" stop-color="#84003a"/><stop offset="0.760" stop-color="#730017"/><stop offset="0.856" stop-color="#66000c"/><stop offset="1.000" stop-color="#420002"/></linearGradient>
<linearGradient id="ho146" gradientUnits="userSpaceOnUse" x1="1054" y1="0" x2="1616" y2="0"><stop offset="0.000" stop-color="#002795"/><stop offset="0.244" stop-color="#020fc2"/><stop offset="0.370" stop-color="#6800b6"/><stop offset="0.448" stop-color="#a0009c"/><stop offset="0.507" stop-color="#920066"/><stop offset="0.598" stop-color="#83003a"/><stop offset="0.760" stop-color="#720017"/><stop offset="0.856" stop-color="#65000c"/><stop offset="1.000" stop-color="#410002"/></linearGradient>
<linearGradient id="ho147" gradientUnits="userSpaceOnUse" x1="1054" y1="0" x2="1616" y2="0"><stop offset="0.000" stop-color="#002595"/><stop offset="0.242" stop-color="#020dc2"/><stop offset="0.367" stop-color="#6500b5"/><stop offset="0.448" stop-color="#9f009c"/><stop offset="0.507" stop-color="#910066"/><stop offset="0.598" stop-color="#82003a"/><stop offset="0.760" stop-color="#720017"/><stop offset="0.856" stop-color="#64000c"/><stop offset="1.000" stop-color="#410002"/></linearGradient>
<linearGradient id="ho148" gradientUnits="userSpaceOnUse" x1="1054" y1="0" x2="1616" y2="0"><stop offset="0.000" stop-color="#002396"/><stop offset="0.242" stop-color="#020ac2"/><stop offset="0.365" stop-color="#6300b5"/><stop offset="0.448" stop-color="#9e009b"/><stop offset="0.509" stop-color="#900064"/><stop offset="0.601" stop-color="#810039"/><stop offset="0.767" stop-color="#700017"/><stop offset="0.858" stop-color="#63000c"/><stop offset="1.000" stop-color="#400003"/></linearGradient>
<linearGradient id="ho149" gradientUnits="userSpaceOnUse" x1="1054" y1="0" x2="1616" y2="0"><stop offset="0.000" stop-color="#002296"/><stop offset="0.242" stop-color="#0307c2"/><stop offset="0.358" stop-color="#5e00b5"/><stop offset="0.448" stop-color="#9d009a"/><stop offset="0.509" stop-color="#8f0064"/><stop offset="0.603" stop-color="#800039"/><stop offset="0.772" stop-color="#6f0016"/><stop offset="0.861" stop-color="#61000c"/><stop offset="1.000" stop-color="#400003"/></linearGradient>
<linearGradient id="ho150" gradientUnits="userSpaceOnUse" x1="1054" y1="0" x2="1616" y2="0"><stop offset="0.000" stop-color="#002096"/><stop offset="0.242" stop-color="#0405c2"/><stop offset="0.351" stop-color="#5800b6"/><stop offset="0.450" stop-color="#9c0098"/><stop offset="0.512" stop-color="#8e0062"/><stop offset="0.609" stop-color="#7e0037"/><stop offset="0.783" stop-color="#6d0015"/><stop offset="0.867" stop-color="#5f000c"/><stop offset="1.000" stop-color="#3f0003"/></linearGradient>
<linearGradient id="ho151" gradientUnits="userSpaceOnUse" x1="1054" y1="0" x2="1616" y2="0"><stop offset="0.000" stop-color="#001e97"/><stop offset="0.240" stop-color="#0304c2"/><stop offset="0.343" stop-color="#5300b7"/><stop offset="0.450" stop-color="#9b0097"/><stop offset="0.512" stop-color="#8d0062"/><stop offset="0.610" stop-color="#7d0037"/><stop offset="0.786" stop-color="#6c0015"/><stop offset="0.870" stop-color="#5d000c"/><stop offset="1.000" stop-color="#3f0003"/></linearGradient>
<linearGradient id="ho152" gradientUnits="userSpaceOnUse" x1="1054" y1="0" x2="1616" y2="0"><stop offset="0.000" stop-color="#001d97"/><stop offset="0.240" stop-color="#0402c2"/><stop offset="0.338" stop-color="#4f00b7"/><stop offset="0.450" stop-color="#9a0097"/><stop offset="0.514" stop-color="#8c0061"/><stop offset="0.614" stop-color="#7c0036"/><stop offset="0.794" stop-color="#6b0014"/><stop offset="0.883" stop-color="#59000b"/><stop offset="1.000" stop-color="#3e0003"/></linearGradient>
<linearGradient id="ho153" gradientUnits="userSpaceOnUse" x1="1054" y1="0" x2="1616" y2="0"><stop offset="0.000" stop-color="#001b98"/><stop offset="0.238" stop-color="#0401c2"/><stop offset="0.338" stop-color="#4f00b5"/><stop offset="0.450" stop-color="#990096"/><stop offset="0.514" stop-color="#8b0061"/><stop offset="0.614" stop-color="#7b0036"/><stop offset="0.795" stop-color="#6a0014"/><stop offset="0.890" stop-color="#57000a"/><stop offset="1.000" stop-color="#3e0003"/></linearGradient>
<linearGradient id="ho154" gradientUnits="userSpaceOnUse" x1="1054" y1="0" x2="1616" y2="0"><stop offset="0.000" stop-color="#001998"/><stop offset="0.237" stop-color="#0401c2"/><stop offset="0.347" stop-color="#5500b2"/><stop offset="0.450" stop-color="#980095"/><stop offset="0.514" stop-color="#8a0060"/><stop offset="0.614" stop-color="#7b0036"/><stop offset="0.795" stop-color="#690015"/><stop offset="0.891" stop-color="#56000a"/><stop offset="1.000" stop-color="#3d0003"/></linearGradient>
<linearGradient id="ho155" gradientUnits="userSpaceOnUse" x1="1054" y1="0" x2="1616" y2="0"><stop offset="0.000" stop-color="#001898"/><stop offset="0.235" stop-color="#0400c2"/><stop offset="0.367" stop-color="#6300ac"/><stop offset="0.452" stop-color="#960093"/><stop offset="0.518" stop-color="#88005e"/><stop offset="0.621" stop-color="#790034"/><stop offset="0.810" stop-color="#670013"/><stop offset="1.000" stop-color="#3c0004"/></linearGradient>
<linearGradient id="ho156" gradientUnits="userSpaceOnUse" x1="1054" y1="0" x2="1616" y2="0"><stop offset="0.000" stop-color="#001699"/><stop offset="0.233" stop-color="#0400c2"/><stop offset="0.384" stop-color="#6e00a6"/><stop offset="0.452" stop-color="#950092"/><stop offset="0.520" stop-color="#87005d"/><stop offset="0.625" stop-color="#780033"/><stop offset="0.817" stop-color="#660013"/><stop offset="1.000" stop-color="#3c0004"/></linearGradient>
<linearGradient id="ho157" gradientUnits="userSpaceOnUse" x1="1054" y1="0" x2="1616" y2="0"><stop offset="0.000" stop-color="#001499"/><stop offset="0.231" stop-color="#0400c2"/><stop offset="0.402" stop-color="#7900a1"/><stop offset="0.452" stop-color="#950091"/><stop offset="0.520" stop-color="#86005d"/><stop offset="0.626" stop-color="#770033"/><stop offset="0.822" stop-color="#640012"/><stop offset="1.000" stop-color="#3b0004"/></linearGradient>
<linearGradient id="ho158" gradientUnits="userSpaceOnUse" x1="1054" y1="0" x2="1616" y2="0"><stop offset="0.000" stop-color="#001399"/><stop offset="0.228" stop-color="#0300c1"/><stop offset="0.407" stop-color="#7c009e"/><stop offset="0.454" stop-color="#93008f"/><stop offset="0.523" stop-color="#85005b"/><stop offset="0.632" stop-color="#750031"/><stop offset="0.838" stop-color="#610011"/><stop offset="1.000" stop-color="#3b0004"/></linearGradient>
<linearGradient id="ho159" gradientUnits="userSpaceOnUse" x1="1054" y1="0" x2="1616" y2="0"><stop offset="0.000" stop-color="#00119a"/><stop offset="0.222" stop-color="#0200c1"/><stop offset="0.402" stop-color="#78009f"/><stop offset="0.454" stop-color="#92008e"/><stop offset="0.523" stop-color="#84005b"/><stop offset="0.633" stop-color="#740031"/><stop offset="0.845" stop-color="#5e0010"/><stop offset="1.000" stop-color="#3a0004"/></linearGradient>
<linearGradient id="ho160" gradientUnits="userSpaceOnUse" x1="1054" y1="0" x2="1616" y2="0"><stop offset="0.000" stop-color="#00109a"/><stop offset="0.217" stop-color="#0100c0"/><stop offset="0.399" stop-color="#75009f"/><stop offset="0.454" stop-color="#91008e"/><stop offset="0.525" stop-color="#830059"/><stop offset="0.637" stop-color="#730030"/><stop offset="0.854" stop-color="#5b000f"/><stop offset="1.000" stop-color="#3a0004"/></linearGradient>
<linearGradient id="ho161" gradientUnits="userSpaceOnUse" x1="1054" y1="0" x2="1616" y2="0"><stop offset="0.000" stop-color="#000e9a"/><stop offset="0.212" stop-color="#0000bf"/><stop offset="0.267" stop-color="#2000b9"/><stop offset="0.450" stop-color="#910091"/><stop offset="0.520" stop-color="#83005c"/><stop offset="0.628" stop-color="#730032"/><stop offset="0.827" stop-color="#610012"/><stop offset="1.000" stop-color="#390004"/></linearGradient>
<linearGradient id="ho162" gradientUnits="userSpaceOnUse" x1="1054" y1="0" x2="1616" y2="0"><stop offset="0.000" stop-color="#000d9b"/><stop offset="0.206" stop-color="#0000bf"/><stop offset="0.246" stop-color="#1200bb"/><stop offset="0.450" stop-color="#900090"/><stop offset="0.520" stop-color="#82005c"/><stop offset="0.630" stop-color="#720032"/><stop offset="0.836" stop-color="#5e0011"/><stop offset="1.000" stop-color="#380004"/></linearGradient>
<linearGradient id="ho163" gradientUnits="userSpaceOnUse" x1="1054" y1="0" x2="1616" y2="0"><stop offset="0.000" stop-color="#000b9b"/><stop offset="0.205" stop-color="#0000be"/><stop offset="0.246" stop-color="#1300b9"/><stop offset="0.450" stop-color="#8f008f"/><stop offset="0.521" stop-color="#81005b"/><stop offset="0.633" stop-color="#710031"/><stop offset="0.852" stop-color="#590010"/><stop offset="1.000" stop-color="#380004"/></linearGradient>
<linearGradient id="ho164" gradientUnits="userSpaceOnUse" x1="1054" y1="0" x2="1616" y2="0"><stop offset="0.000" stop-color="#000a9c"/><stop offset="0.201" stop-color="#0000bd"/><stop offset="0.240" stop-color="#1000b9"/><stop offset="0.450" stop-color="#8e008e"/><stop offset="0.523" stop-color="#80005a"/><stop offset="0.637" stop-color="#700030"/><stop offset="0.856" stop-color="#57000f"/><stop offset="1.000" stop-color="#370005"/></linearGradient>
<linearGradient id="ho165" gradientUnits="userSpaceOnUse" x1="1054" y1="0" x2="1616" y2="0"><stop offset="0.000" stop-color="#00089c"/><stop offset="0.196" stop-color="#0000bc"/><stop offset="0.233" stop-color="#0d00b9"/><stop offset="0.450" stop-color="#8d008d"/><stop offset="0.525" stop-color="#7f0058"/><stop offset="0.641" stop-color="#6f002f"/><stop offset="0.856" stop-color="#56000f"/><stop offset="1.000" stop-color="#370005"/></linearGradient>
<linearGradient id="ho166" gradientUnits="userSpaceOnUse" x1="1054" y1="0" x2="1616" y2="0"><stop offset="0.000" stop-color="#00069c"/><stop offset="0.189" stop-color="#0000bb"/><stop offset="0.228" stop-color="#0a00b8"/><stop offset="0.448" stop-color="#8b008d"/><stop offset="0.532" stop-color="#7d0055"/><stop offset="0.653" stop-color="#6d002d"/><stop offset="0.858" stop-color="#55000f"/><stop offset="1.000" stop-color="#360005"/></linearGradient>
<linearGradient id="ho167" gradientUnits="userSpaceOnUse" x1="1054" y1="0" x2="1616" y2="0"><stop offset="0.000" stop-color="#00059d"/><stop offset="0.180" stop-color="#0000b9"/><stop offset="0.222" stop-color="#0800b7"/><stop offset="0.445" stop-color="#88008d"/><stop offset="0.496" stop-color="#820068"/><stop offset="0.594" stop-color="#73003c"/><stop offset="0.767" stop-color="#61001a"/><stop offset="0.868" stop-color="#52000e"/><stop offset="1.000" stop-color="#360005"/></linearGradient>
<linearGradient id="ho168" gradientUnits="userSpaceOnUse" x1="1054" y1="0" x2="1616" y2="0"><stop offset="0.000" stop-color="#00049d"/><stop offset="0.173" stop-color="#0000b8"/><stop offset="0.221" stop-color="#0800b6"/><stop offset="0.445" stop-color="#87008c"/><stop offset="0.488" stop-color="#83006e"/><stop offset="0.582" stop-color="#740040"/><stop offset="0.744" stop-color="#62001d"/><stop offset="0.863" stop-color="#52000f"/><stop offset="1.000" stop-color="#350005"/></linearGradient>
<linearGradient id="ho169" gradientUnits="userSpaceOnUse" x1="1054" y1="0" x2="1616" y2="0"><stop offset="0.000" stop-color="#00039d"/><stop offset="0.167" stop-color="#0000b6"/><stop offset="0.217" stop-color="#0600b6"/><stop offset="0.443" stop-color="#85008b"/><stop offset="0.468" stop-color="#86007c"/><stop offset="0.552" stop-color="#77004b"/><stop offset="0.690" stop-color="#660025"/><stop offset="0.859" stop-color="#52000f"/><stop offset="1.000" stop-color="#350005"/></linearGradient>
<linearGradient id="ho170" gradientUnits="userSpaceOnUse" x1="1054" y1="0" x2="1616" y2="0"><stop offset="0.000" stop-color="#00029e"/><stop offset="0.165" stop-color="#0000b5"/><stop offset="0.215" stop-color="#0600b5"/><stop offset="0.443" stop-color="#84008a"/><stop offset="0.470" stop-color="#85007a"/><stop offset="0.555" stop-color="#76004a"/><stop offset="0.698" stop-color="#650024"/><stop offset="0.859" stop-color="#520010"/><stop offset="1.000" stop-color="#340005"/></linearGradient>
<linearGradient id="tr0" gradientUnits="userSpaceOnUse" x1="1169" y1="0" x2="1552" y2="0"><stop offset="0.000" stop-color="#00ff21"/><stop offset="0.282" stop-color="#00ff00"/><stop offset="0.334" stop-color="#06ff00"/><stop offset="0.587" stop-color="#bdff00"/><stop offset="0.671" stop-color="#fffc00"/><stop offset="0.775" stop-color="#fbb200"/><stop offset="0.916" stop-color="#f17500"/><stop offset="1.000" stop-color="#ec5c00"/></linearGradient>
<linearGradient id="tr1" gradientUnits="userSpaceOnUse" x1="1169" y1="0" x2="1552" y2="0"><stop offset="0.000" stop-color="#00ff23"/><stop offset="0.292" stop-color="#00ff00"/><stop offset="0.334" stop-color="#07ff00"/><stop offset="0.587" stop-color="#bfff00"/><stop offset="0.666" stop-color="#fffd00"/><stop offset="0.770" stop-color="#fbb300"/><stop offset="0.909" stop-color="#f27500"/><stop offset="1.000" stop-color="#ec5a00"/></linearGradient>
<linearGradient id="tr2" gradientUnits="userSpaceOnUse" x1="1169" y1="0" x2="1552" y2="0"><stop offset="0.000" stop-color="#00ff24"/><stop offset="0.300" stop-color="#00ff00"/><stop offset="0.337" stop-color="#0aff00"/><stop offset="0.587" stop-color="#c2ff00"/><stop offset="0.663" stop-color="#fffc00"/><stop offset="0.768" stop-color="#fbb200"/><stop offset="0.906" stop-color="#f17500"/><stop offset="1.000" stop-color="#eb5900"/></linearGradient>
<linearGradient id="tr3" gradientUnits="userSpaceOnUse" x1="1169" y1="0" x2="1552" y2="0"><stop offset="0.000" stop-color="#00ff26"/><stop offset="0.308" stop-color="#00ff00"/><stop offset="0.347" stop-color="#13ff00"/><stop offset="0.587" stop-color="#c5ff00"/><stop offset="0.658" stop-color="#fffd00"/><stop offset="0.762" stop-color="#fbb200"/><stop offset="0.901" stop-color="#f17400"/><stop offset="1.000" stop-color="#eb5700"/></linearGradient>
<linearGradient id="tr4" gradientUnits="userSpaceOnUse" x1="1169" y1="0" x2="1552" y2="0"><stop offset="0.000" stop-color="#00ff27"/><stop offset="0.316" stop-color="#02ff00"/><stop offset="0.535" stop-color="#9eff00"/><stop offset="0.655" stop-color="#fffc00"/><stop offset="0.757" stop-color="#fbb300"/><stop offset="0.893" stop-color="#f27500"/><stop offset="1.000" stop-color="#ea5600"/></linearGradient>
<linearGradient id="tr5" gradientUnits="userSpaceOnUse" x1="1169" y1="0" x2="1552" y2="0"><stop offset="0.000" stop-color="#00ff29"/><stop offset="0.319" stop-color="#03ff00"/><stop offset="0.556" stop-color="#b1ff00"/><stop offset="0.650" stop-color="#fffd00"/><stop offset="0.752" stop-color="#fbb300"/><stop offset="0.888" stop-color="#f27500"/><stop offset="1.000" stop-color="#ea5400"/></linearGradient>
<linearGradient id="tr6" gradientUnits="userSpaceOnUse" x1="1169" y1="0" x2="1552" y2="0"><stop offset="0.000" stop-color="#00ff2a"/><stop offset="0.316" stop-color="#03ff01"/><stop offset="0.548" stop-color="#adff00"/><stop offset="0.648" stop-color="#fffc00"/><stop offset="0.749" stop-color="#fbb200"/><stop offset="0.885" stop-color="#f17400"/><stop offset="1.000" stop-color="#ea5300"/></linearGradient>
<linearGradient id="tr7" gradientUnits="userSpaceOnUse" x1="1169" y1="0" x2="1552" y2="0"><stop offset="0.000" stop-color="#00ff2c"/><stop offset="0.316" stop-color="#04ff01"/><stop offset="0.554" stop-color="#b4ff00"/><stop offset="0.642" stop-color="#fffd00"/><stop offset="0.744" stop-color="#fbb200"/><stop offset="0.880" stop-color="#f17400"/><stop offset="1.000" stop-color="#e95100"/></linearGradient>
<linearGradient id="tr8" gradientUnits="userSpaceOnUse" x1="1169" y1="0" x2="1552" y2="0"><stop offset="0.000" stop-color="#00ff2d"/><stop offset="0.313" stop-color="#04ff02"/><stop offset="0.548" stop-color="#b3ff00"/><stop offset="0.640" stop-color="#fffc00"/><stop offset="0.739" stop-color="#fbb300"/><stop offset="0.872" stop-color="#f17500"/><stop offset="1.000" stop-color="#e95000"/></linearGradient>
<linearGradient id="tr9" gradientUnits="userSpaceOnUse" x1="1169" y1="0" x2="1552" y2="0"><stop offset="0.000" stop-color="#00ff2f"/><stop offset="0.311" stop-color="#03ff03"/><stop offset="0.540" stop-color="#afff00"/><stop offset="0.634" stop-color="#fffd00"/><stop offset="0.734" stop-color="#fbb300"/><stop offset="0.867" stop-color="#f17500"/><stop offset="1.000" stop-color="#e94e00"/></linearGradient>
<linearGradient id="tr10" gradientUnits="userSpaceOnUse" x1="1169" y1="0" x2="1552" y2="0"><stop offset="0.000" stop-color="#00ff30"/><stop offset="0.311" stop-color="#04ff04"/><stop offset="0.543" stop-color="#b4ff00"/><stop offset="0.632" stop-color="#fffc00"/><stop offset="0.731" stop-color="#fbb200"/><stop offset="0.864" stop-color="#f17400"/><stop offset="1.000" stop-color="#e84d00"/></linearGradient>
<linearGradient id="tr11" gradientUnits="userSpaceOnUse" x1="1169" y1="0" x2="1552" y2="0"><stop offset="0.000" stop-color="#00ff32"/><stop offset="0.308" stop-color="#04ff05"/><stop offset="0.538" stop-color="#b3ff00"/><stop offset="0.627" stop-color="#fffd00"/><stop offset="0.726" stop-color="#fbb200"/><stop offset="0.856" stop-color="#f17500"/><stop offset="1.000" stop-color="#e84c00"/></linearGradient>
<linearGradient id="tr12" gradientUnits="userSpaceOnUse" x1="1169" y1="0" x2="1552" y2="0"><stop offset="0.000" stop-color="#00ff33"/><stop offset="0.305" stop-color="#04ff07"/><stop offset="0.493" stop-color="#91ff00"/><stop offset="0.624" stop-color="#fffc00"/><stop offset="0.721" stop-color="#fbb300"/><stop offset="0.851" stop-color="#f17500"/><stop offset="1.000" stop-color="#e74a00"/></linearGradient>
<linearGradient id="tr13" gradientUnits="userSpaceOnUse" x1="1169" y1="0" x2="1552" y2="0"><stop offset="0.000" stop-color="#00ff35"/><stop offset="0.303" stop-color="#03ff09"/><stop offset="0.457" stop-color="#76ff00"/><stop offset="0.619" stop-color="#fffd00"/><stop offset="0.715" stop-color="#fbb300"/><stop offset="0.843" stop-color="#f27600"/><stop offset="1.000" stop-color="#e74900"/></linearGradient>
<linearGradient id="tr14" gradientUnits="userSpaceOnUse" x1="1169" y1="0" x2="1552" y2="0"><stop offset="0.000" stop-color="#00ff37"/><stop offset="0.303" stop-color="#04ff0b"/><stop offset="0.444" stop-color="#6eff00"/><stop offset="0.616" stop-color="#fffc00"/><stop offset="0.713" stop-color="#fbb200"/><stop offset="0.841" stop-color="#f17500"/><stop offset="1.000" stop-color="#e74700"/></linearGradient>
<linearGradient id="tr15" gradientUnits="userSpaceOnUse" x1="1169" y1="0" x2="1552" y2="0"><stop offset="0.000" stop-color="#00ff38"/><stop offset="0.300" stop-color="#04ff0d"/><stop offset="0.436" stop-color="#6aff00"/><stop offset="0.611" stop-color="#fffd00"/><stop offset="0.708" stop-color="#fbb200"/><stop offset="0.836" stop-color="#f17500"/><stop offset="1.000" stop-color="#e64600"/></linearGradient>
<linearGradient id="tr16" gradientUnits="userSpaceOnUse" x1="1169" y1="0" x2="1552" y2="0"><stop offset="0.000" stop-color="#00ff3a"/><stop offset="0.298" stop-color="#04ff0f"/><stop offset="0.436" stop-color="#6cff00"/><stop offset="0.608" stop-color="#fffc00"/><stop offset="0.705" stop-color="#fbb100"/><stop offset="0.833" stop-color="#f17400"/><stop offset="1.000" stop-color="#e64500"/></linearGradient>
<linearGradient id="tr17" gradientUnits="userSpaceOnUse" x1="1169" y1="0" x2="1552" y2="0"><stop offset="0.000" stop-color="#00ff3c"/><stop offset="0.295" stop-color="#03ff12"/><stop offset="0.439" stop-color="#70ff00"/><stop offset="0.603" stop-color="#fffd00"/><stop offset="0.697" stop-color="#fbb300"/><stop offset="0.822" stop-color="#f27600"/><stop offset="1.000" stop-color="#e64300"/></linearGradient>
<linearGradient id="tr18" gradientUnits="userSpaceOnUse" x1="1169" y1="0" x2="1552" y2="0"><stop offset="0.000" stop-color="#00ff3d"/><stop offset="0.295" stop-color="#04ff13"/><stop offset="0.444" stop-color="#77ff00"/><stop offset="0.601" stop-color="#fffc00"/><stop offset="0.695" stop-color="#fbb200"/><stop offset="0.820" stop-color="#f17500"/><stop offset="1.000" stop-color="#e54200"/></linearGradient>
<linearGradient id="tr19" gradientUnits="userSpaceOnUse" x1="1169" y1="0" x2="1552" y2="0"><stop offset="0.000" stop-color="#00ff3f"/><stop offset="0.292" stop-color="#04ff16"/><stop offset="0.449" stop-color="#7eff00"/><stop offset="0.595" stop-color="#fffd00"/><stop offset="0.689" stop-color="#fbb200"/><stop offset="0.815" stop-color="#f17400"/><stop offset="1.000" stop-color="#e54000"/></linearGradient>
<linearGradient id="tr20" gradientUnits="userSpaceOnUse" x1="1169" y1="0" x2="1552" y2="0"><stop offset="0.000" stop-color="#00ff41"/><stop offset="0.290" stop-color="#03ff18"/><stop offset="0.454" stop-color="#85ff00"/><stop offset="0.593" stop-color="#fffb00"/><stop offset="0.687" stop-color="#fbb100"/><stop offset="0.812" stop-color="#f17300"/><stop offset="0.997" stop-color="#e44000"/><stop offset="1.000" stop-color="#e43f00"/></linearGradient>
<linearGradient id="tr21" gradientUnits="userSpaceOnUse" x1="1169" y1="0" x2="1552" y2="0"><stop offset="0.000" stop-color="#00ff43"/><stop offset="0.287" stop-color="#03ff1a"/><stop offset="0.460" stop-color="#8bff00"/><stop offset="0.587" stop-color="#fffd00"/><stop offset="0.679" stop-color="#fbb300"/><stop offset="0.802" stop-color="#f27500"/><stop offset="0.982" stop-color="#e54200"/><stop offset="1.000" stop-color="#e43e00"/></linearGradient>
<linearGradient id="tr22" gradientUnits="userSpaceOnUse" x1="1169" y1="0" x2="1552" y2="0"><stop offset="0.000" stop-color="#00ff44"/><stop offset="0.287" stop-color="#04ff1c"/><stop offset="0.467" stop-color="#95ff00"/><stop offset="0.585" stop-color="#fffb00"/><stop offset="0.676" stop-color="#fbb200"/><stop offset="0.799" stop-color="#f17400"/><stop offset="0.979" stop-color="#e54100"/><stop offset="1.000" stop-color="#e43c00"/></linearGradient>
<linearGradient id="tr23" gradientUnits="userSpaceOnUse" x1="1169" y1="0" x2="1552" y2="0"><stop offset="0.000" stop-color="#00ff46"/><stop offset="0.285" stop-color="#04ff1f"/><stop offset="0.475" stop-color="#9fff00"/><stop offset="0.580" stop-color="#fffd00"/><stop offset="0.671" stop-color="#fbb200"/><stop offset="0.791" stop-color="#f27500"/><stop offset="0.969" stop-color="#e54200"/><stop offset="1.000" stop-color="#e33b00"/></linearGradient>
<linearGradient id="tr24" gradientUnits="userSpaceOnUse" x1="1169" y1="0" x2="1552" y2="0"><stop offset="0.000" stop-color="#00ff48"/><stop offset="0.282" stop-color="#03ff21"/><stop offset="0.483" stop-color="#a8ff00"/><stop offset="0.577" stop-color="#fffb00"/><stop offset="0.668" stop-color="#fbb100"/><stop offset="0.789" stop-color="#f17400"/><stop offset="0.966" stop-color="#e54100"/><stop offset="1.000" stop-color="#e33a00"/></linearGradient>
<linearGradient id="tr25" gradientUnits="userSpaceOnUse" x1="1169" y1="0" x2="1552" y2="0"><stop offset="0.000" stop-color="#00ff4a"/><stop offset="0.279" stop-color="#03ff24"/><stop offset="0.486" stop-color="#aeff00"/><stop offset="0.572" stop-color="#fffd00"/><stop offset="0.661" stop-color="#fbb300"/><stop offset="0.781" stop-color="#f17500"/><stop offset="0.956" stop-color="#e54200"/><stop offset="1.000" stop-color="#e23800"/></linearGradient>
<linearGradient id="tr26" gradientUnits="userSpaceOnUse" x1="1169" y1="0" x2="1552" y2="0"><stop offset="0.000" stop-color="#00ff4c"/><stop offset="0.279" stop-color="#04ff26"/><stop offset="0.488" stop-color="#b3ff01"/><stop offset="0.569" stop-color="#fffb00"/><stop offset="0.658" stop-color="#fbb200"/><stop offset="0.778" stop-color="#f17400"/><stop offset="0.956" stop-color="#e54000"/><stop offset="1.000" stop-color="#e23700"/></linearGradient>
<linearGradient id="tr27" gradientUnits="userSpaceOnUse" x1="1169" y1="0" x2="1552" y2="0"><stop offset="0.000" stop-color="#00ff4e"/><stop offset="0.277" stop-color="#04ff28"/><stop offset="0.483" stop-color="#b2ff02"/><stop offset="0.564" stop-color="#fffd00"/><stop offset="0.653" stop-color="#fbb200"/><stop offset="0.770" stop-color="#f17500"/><stop offset="0.945" stop-color="#e54100"/><stop offset="1.000" stop-color="#e13600"/></linearGradient>
<linearGradient id="tr28" gradientUnits="userSpaceOnUse" x1="1169" y1="0" x2="1552" y2="0"><stop offset="0.000" stop-color="#00ff4f"/><stop offset="0.274" stop-color="#03ff2b"/><stop offset="0.478" stop-color="#b0ff04"/><stop offset="0.561" stop-color="#fffb00"/><stop offset="0.650" stop-color="#fbb100"/><stop offset="0.768" stop-color="#f17400"/><stop offset="0.943" stop-color="#e54000"/><stop offset="1.000" stop-color="#e13500"/></linearGradient>
<linearGradient id="tr29" gradientUnits="userSpaceOnUse" x1="1169" y1="0" x2="1552" y2="0"><stop offset="0.000" stop-color="#00ff51"/><stop offset="0.274" stop-color="#04ff2d"/><stop offset="0.480" stop-color="#b6ff04"/><stop offset="0.556" stop-color="#fffd00"/><stop offset="0.642" stop-color="#fbb300"/><stop offset="0.757" stop-color="#f27600"/><stop offset="0.927" stop-color="#e54200"/><stop offset="1.000" stop-color="#e13300"/></linearGradient>
<linearGradient id="tr30" gradientUnits="userSpaceOnUse" x1="1169" y1="0" x2="1552" y2="0"><stop offset="0.000" stop-color="#00ff53"/><stop offset="0.272" stop-color="#04ff2f"/><stop offset="0.475" stop-color="#b4ff07"/><stop offset="0.554" stop-color="#fffb00"/><stop offset="0.640" stop-color="#fbb200"/><stop offset="0.755" stop-color="#f17500"/><stop offset="0.924" stop-color="#e54100"/><stop offset="1.000" stop-color="#e03200"/></linearGradient>
<linearGradient id="tr31" gradientUnits="userSpaceOnUse" x1="1169" y1="0" x2="1552" y2="0"><stop offset="0.000" stop-color="#00ff55"/><stop offset="0.269" stop-color="#04ff32"/><stop offset="0.467" stop-color="#b0ff0b"/><stop offset="0.548" stop-color="#fffd00"/><stop offset="0.634" stop-color="#fbb300"/><stop offset="0.749" stop-color="#f17500"/><stop offset="0.919" stop-color="#e54100"/><stop offset="1.000" stop-color="#e03100"/></linearGradient>
<linearGradient id="tr32" gradientUnits="userSpaceOnUse" x1="1169" y1="0" x2="1552" y2="0"><stop offset="0.000" stop-color="#00ff57"/><stop offset="0.266" stop-color="#03ff34"/><stop offset="0.462" stop-color="#aeff0f"/><stop offset="0.546" stop-color="#fffb00"/><stop offset="0.632" stop-color="#fbb100"/><stop offset="0.747" stop-color="#f17400"/><stop offset="0.916" stop-color="#e54000"/><stop offset="1.000" stop-color="#df3000"/></linearGradient>
<linearGradient id="tr33" gradientUnits="userSpaceOnUse" x1="1169" y1="0" x2="1552" y2="0"><stop offset="0.000" stop-color="#00ff59"/><stop offset="0.266" stop-color="#04ff37"/><stop offset="0.465" stop-color="#b3ff10"/><stop offset="0.540" stop-color="#fffd01"/><stop offset="0.624" stop-color="#fbb300"/><stop offset="0.736" stop-color="#f27600"/><stop offset="0.901" stop-color="#e54200"/><stop offset="1.000" stop-color="#df2e00"/></linearGradient>
<linearGradient id="tr34" gradientUnits="userSpaceOnUse" x1="1169" y1="0" x2="1552" y2="0"><stop offset="0.000" stop-color="#00ff5b"/><stop offset="0.264" stop-color="#04ff39"/><stop offset="0.460" stop-color="#b2ff14"/><stop offset="0.538" stop-color="#fffb03"/><stop offset="0.621" stop-color="#fbb200"/><stop offset="0.734" stop-color="#f17500"/><stop offset="0.898" stop-color="#e54100"/><stop offset="1.000" stop-color="#df2d00"/></linearGradient>
<linearGradient id="tr35" gradientUnits="userSpaceOnUse" x1="1169" y1="0" x2="1552" y2="0"><stop offset="0.000" stop-color="#00ff5d"/><stop offset="0.261" stop-color="#03ff3c"/><stop offset="0.454" stop-color="#b0ff18"/><stop offset="0.533" stop-color="#fffd05"/><stop offset="0.616" stop-color="#fbb300"/><stop offset="0.728" stop-color="#f17500"/><stop offset="0.893" stop-color="#e54100"/><stop offset="1.000" stop-color="#de2c00"/></linearGradient>
<linearGradient id="tr36" gradientUnits="userSpaceOnUse" x1="1169" y1="0" x2="1552" y2="0"><stop offset="0.000" stop-color="#00ff60"/><stop offset="0.258" stop-color="#03ff3f"/><stop offset="0.449" stop-color="#aeff1b"/><stop offset="0.530" stop-color="#fffb07"/><stop offset="0.614" stop-color="#fbb100"/><stop offset="0.726" stop-color="#f17300"/><stop offset="0.890" stop-color="#e54000"/><stop offset="1.000" stop-color="#de2b00"/></linearGradient>
<linearGradient id="tr37" gradientUnits="userSpaceOnUse" x1="1169" y1="0" x2="1552" y2="0"><stop offset="0.000" stop-color="#00ff62"/><stop offset="0.258" stop-color="#04ff41"/><stop offset="0.452" stop-color="#b4ff1d"/><stop offset="0.525" stop-color="#fffd0b"/><stop offset="0.606" stop-color="#fbb400"/><stop offset="0.715" stop-color="#f27600"/><stop offset="0.877" stop-color="#e54100"/><stop offset="1.000" stop-color="#dd2900"/></linearGradient>
<linearGradient id="tr38" gradientUnits="userSpaceOnUse" x1="1169" y1="0" x2="1552" y2="0"><stop offset="0.000" stop-color="#00ff64"/><stop offset="0.256" stop-color="#04ff44"/><stop offset="0.446" stop-color="#b2ff21"/><stop offset="0.522" stop-color="#fffb0e"/><stop offset="0.598" stop-color="#fbb600"/><stop offset="0.705" stop-color="#f27800"/><stop offset="0.862" stop-color="#e64400"/><stop offset="1.000" stop-color="#dd2800"/></linearGradient>
<linearGradient id="tr39" gradientUnits="userSpaceOnUse" x1="1169" y1="0" x2="1552" y2="0"><stop offset="0.000" stop-color="#00ff66"/><stop offset="0.253" stop-color="#03ff47"/><stop offset="0.441" stop-color="#b0ff25"/><stop offset="0.517" stop-color="#fffd12"/><stop offset="0.593" stop-color="#fbb701"/><stop offset="0.697" stop-color="#f27900"/><stop offset="0.851" stop-color="#e64500"/><stop offset="1.000" stop-color="#dc2700"/></linearGradient>
<linearGradient id="tr40" gradientUnits="userSpaceOnUse" x1="1169" y1="0" x2="1552" y2="0"><stop offset="0.000" stop-color="#00ff68"/><stop offset="0.251" stop-color="#03ff49"/><stop offset="0.433" stop-color="#acff29"/><stop offset="0.514" stop-color="#fffb16"/><stop offset="0.593" stop-color="#fbb301"/><stop offset="0.700" stop-color="#f27500"/><stop offset="0.856" stop-color="#e54200"/><stop offset="1.000" stop-color="#dc2600"/></linearGradient>
<linearGradient id="tr41" gradientUnits="userSpaceOnUse" x1="1169" y1="0" x2="1552" y2="0"><stop offset="0.000" stop-color="#00ff6b"/><stop offset="0.251" stop-color="#04ff4c"/><stop offset="0.439" stop-color="#b4ff2b"/><stop offset="0.509" stop-color="#fffd1a"/><stop offset="0.587" stop-color="#fbb402"/><stop offset="0.692" stop-color="#f27600"/><stop offset="0.846" stop-color="#e54300"/><stop offset="1.000" stop-color="#dc2400"/></linearGradient>
<linearGradient id="tr42" gradientUnits="userSpaceOnUse" x1="1169" y1="0" x2="1552" y2="0"><stop offset="0.000" stop-color="#00ff6d"/><stop offset="0.248" stop-color="#04ff4f"/><stop offset="0.433" stop-color="#b2ff2e"/><stop offset="0.507" stop-color="#fffb1d"/><stop offset="0.585" stop-color="#fbb204"/><stop offset="0.689" stop-color="#f17500"/><stop offset="0.843" stop-color="#e54200"/><stop offset="1.000" stop-color="#db2300"/></linearGradient>
<linearGradient id="tr43" gradientUnits="userSpaceOnUse" x1="1169" y1="0" x2="1552" y2="0"><stop offset="0.000" stop-color="#00ff6f"/><stop offset="0.245" stop-color="#03ff52"/><stop offset="0.426" stop-color="#aeff33"/><stop offset="0.501" stop-color="#fffd21"/><stop offset="0.580" stop-color="#fbb306"/><stop offset="0.684" stop-color="#f17500"/><stop offset="0.838" stop-color="#e54100"/><stop offset="1.000" stop-color="#db2200"/></linearGradient>
<linearGradient id="tr44" gradientUnits="userSpaceOnUse" x1="1169" y1="0" x2="1552" y2="0"><stop offset="0.000" stop-color="#00ff71"/><stop offset="0.243" stop-color="#03ff55"/><stop offset="0.420" stop-color="#acff37"/><stop offset="0.499" stop-color="#fffb25"/><stop offset="0.577" stop-color="#fbb108"/><stop offset="0.681" stop-color="#f17400"/><stop offset="0.836" stop-color="#e54000"/><stop offset="1.000" stop-color="#da2100"/></linearGradient>
<linearGradient id="tr45" gradientUnits="userSpaceOnUse" x1="1169" y1="0" x2="1552" y2="0"><stop offset="0.000" stop-color="#00ff74"/><stop offset="0.243" stop-color="#04ff57"/><stop offset="0.423" stop-color="#b2ff39"/><stop offset="0.493" stop-color="#fffd29"/><stop offset="0.569" stop-color="#fbb40c"/><stop offset="0.666" stop-color="#f27900"/><stop offset="0.815" stop-color="#e64400"/><stop offset="1.000" stop-color="#da2000"/></linearGradient>
<linearGradient id="tr46" gradientUnits="userSpaceOnUse" x1="1169" y1="0" x2="1552" y2="0"><stop offset="0.000" stop-color="#00ff76"/><stop offset="0.240" stop-color="#04ff5a"/><stop offset="0.418" stop-color="#b0ff3d"/><stop offset="0.491" stop-color="#fffb2c"/><stop offset="0.567" stop-color="#fbb20f"/><stop offset="0.658" stop-color="#f27a00"/><stop offset="0.804" stop-color="#e64500"/><stop offset="1.000" stop-color="#d91f00"/></linearGradient>
<linearGradient id="tr47" gradientUnits="userSpaceOnUse" x1="1169" y1="0" x2="1552" y2="0"><stop offset="0.000" stop-color="#00ff79"/><stop offset="0.238" stop-color="#03ff5e"/><stop offset="0.413" stop-color="#aeff41"/><stop offset="0.486" stop-color="#fffc31"/><stop offset="0.561" stop-color="#fbb312"/><stop offset="0.653" stop-color="#f27a01"/><stop offset="0.796" stop-color="#e64500"/><stop offset="1.000" stop-color="#d91d00"/></linearGradient>
<linearGradient id="tr48" gradientUnits="userSpaceOnUse" x1="1169" y1="0" x2="1552" y2="0"><stop offset="0.000" stop-color="#00ff7b"/><stop offset="0.238" stop-color="#04ff60"/><stop offset="0.415" stop-color="#b5ff43"/><stop offset="0.483" stop-color="#fffb34"/><stop offset="0.559" stop-color="#fbb114"/><stop offset="0.653" stop-color="#f27701"/><stop offset="0.799" stop-color="#e54300"/><stop offset="1.000" stop-color="#d81c00"/></linearGradient>
<linearGradient id="tr49" gradientUnits="userSpaceOnUse" x1="1169" y1="0" x2="1552" y2="0"><stop offset="0.000" stop-color="#00ff7e"/><stop offset="0.235" stop-color="#04ff64"/><stop offset="0.410" stop-color="#b3ff47"/><stop offset="0.478" stop-color="#fffc39"/><stop offset="0.554" stop-color="#fbb218"/><stop offset="0.653" stop-color="#f17501"/><stop offset="0.799" stop-color="#e54100"/><stop offset="1.000" stop-color="#d81b00"/></linearGradient>
<linearGradient id="tr50" gradientUnits="userSpaceOnUse" x1="1169" y1="0" x2="1552" y2="0"><stop offset="0.000" stop-color="#00ff80"/><stop offset="0.232" stop-color="#03ff67"/><stop offset="0.405" stop-color="#b0ff4c"/><stop offset="0.475" stop-color="#fffb3c"/><stop offset="0.548" stop-color="#fbb21b"/><stop offset="0.648" stop-color="#f17503"/><stop offset="0.794" stop-color="#e54100"/><stop offset="1.000" stop-color="#d81a00"/></linearGradient>
<linearGradient id="tr51" gradientUnits="userSpaceOnUse" x1="1169" y1="0" x2="1552" y2="0"><stop offset="0.000" stop-color="#00ff83"/><stop offset="0.230" stop-color="#03ff6a"/><stop offset="0.397" stop-color="#abff50"/><stop offset="0.470" stop-color="#fffc41"/><stop offset="0.543" stop-color="#fbb31f"/><stop offset="0.640" stop-color="#f27604"/><stop offset="0.783" stop-color="#e54200"/><stop offset="1.000" stop-color="#d71900"/></linearGradient>
<linearGradient id="tr52" gradientUnits="userSpaceOnUse" x1="1169" y1="0" x2="1552" y2="0"><stop offset="0.000" stop-color="#00ff86"/><stop offset="0.230" stop-color="#04ff6d"/><stop offset="0.402" stop-color="#b5ff52"/><stop offset="0.467" stop-color="#fffb44"/><stop offset="0.540" stop-color="#fbb122"/><stop offset="0.637" stop-color="#f17506"/><stop offset="0.781" stop-color="#e54100"/><stop offset="1.000" stop-color="#d71800"/></linearGradient>
<linearGradient id="tr53" gradientUnits="userSpaceOnUse" x1="1169" y1="0" x2="1552" y2="0"><stop offset="0.000" stop-color="#00ff88"/><stop offset="0.227" stop-color="#04ff70"/><stop offset="0.397" stop-color="#b3ff57"/><stop offset="0.462" stop-color="#fffc49"/><stop offset="0.535" stop-color="#fbb225"/><stop offset="0.632" stop-color="#f17408"/><stop offset="0.775" stop-color="#e54000"/><stop offset="1.000" stop-color="#d61700"/></linearGradient>
<linearGradient id="tr54" gradientUnits="userSpaceOnUse" x1="1169" y1="0" x2="1552" y2="0"><stop offset="0.000" stop-color="#00ff8b"/><stop offset="0.225" stop-color="#03ff74"/><stop offset="0.389" stop-color="#aeff5b"/><stop offset="0.460" stop-color="#fffb4d"/><stop offset="0.530" stop-color="#fbb229"/><stop offset="0.627" stop-color="#f1740a"/><stop offset="0.752" stop-color="#e64500"/><stop offset="0.971" stop-color="#d71900"/><stop offset="1.000" stop-color="#d61600"/></linearGradient>
<linearGradient id="tr55" gradientUnits="userSpaceOnUse" x1="1169" y1="0" x2="1552" y2="0"><stop offset="0.000" stop-color="#00ff8e"/><stop offset="0.222" stop-color="#03ff77"/><stop offset="0.384" stop-color="#acff60"/><stop offset="0.454" stop-color="#fffc52"/><stop offset="0.525" stop-color="#fbb32d"/><stop offset="0.619" stop-color="#f2760e"/><stop offset="0.734" stop-color="#e74900"/><stop offset="0.943" stop-color="#d81c00"/><stop offset="1.000" stop-color="#d51400"/></linearGradient>
<linearGradient id="tr56" gradientUnits="userSpaceOnUse" x1="1169" y1="0" x2="1552" y2="0"><stop offset="0.000" stop-color="#00ff91"/><stop offset="0.222" stop-color="#04ff7a"/><stop offset="0.386" stop-color="#b3ff63"/><stop offset="0.452" stop-color="#fffb55"/><stop offset="0.522" stop-color="#fbb12f"/><stop offset="0.616" stop-color="#f17410"/><stop offset="0.728" stop-color="#e74800"/><stop offset="0.937" stop-color="#d81c00"/><stop offset="1.000" stop-color="#d51300"/></linearGradient>
<linearGradient id="tr57" gradientUnits="userSpaceOnUse" x1="1169" y1="0" x2="1552" y2="0"><stop offset="0.000" stop-color="#00ff93"/><stop offset="0.219" stop-color="#04ff7e"/><stop offset="0.381" stop-color="#b0ff67"/><stop offset="0.446" stop-color="#fffc5b"/><stop offset="0.517" stop-color="#fbb233"/><stop offset="0.611" stop-color="#f17413"/><stop offset="0.726" stop-color="#e74701"/><stop offset="0.935" stop-color="#d81b00"/><stop offset="1.000" stop-color="#d41200"/></linearGradient>
<linearGradient id="tr58" gradientUnits="userSpaceOnUse" x1="1169" y1="0" x2="1552" y2="0"><stop offset="0.000" stop-color="#00ff96"/><stop offset="0.217" stop-color="#03ff81"/><stop offset="0.376" stop-color="#aeff6c"/><stop offset="0.441" stop-color="#fffe60"/><stop offset="0.509" stop-color="#fbb538"/><stop offset="0.601" stop-color="#f27717"/><stop offset="0.721" stop-color="#e74701"/><stop offset="0.930" stop-color="#d81b00"/><stop offset="1.000" stop-color="#d41100"/></linearGradient>
<linearGradient id="tr59" gradientUnits="userSpaceOnUse" x1="1169" y1="0" x2="1552" y2="0"><stop offset="0.000" stop-color="#00ff99"/><stop offset="0.214" stop-color="#03ff85"/><stop offset="0.368" stop-color="#a9ff71"/><stop offset="0.439" stop-color="#fffc64"/><stop offset="0.507" stop-color="#fbb33b"/><stop offset="0.598" stop-color="#f27519"/><stop offset="0.723" stop-color="#e64401"/><stop offset="0.937" stop-color="#d71800"/><stop offset="1.000" stop-color="#d31000"/></linearGradient>
<linearGradient id="tr60" gradientUnits="userSpaceOnUse" x1="1169" y1="0" x2="1552" y2="0"><stop offset="0.000" stop-color="#00ff9c"/><stop offset="0.214" stop-color="#04ff89"/><stop offset="0.373" stop-color="#b3ff74"/><stop offset="0.433" stop-color="#fffe69"/><stop offset="0.501" stop-color="#fbb43f"/><stop offset="0.590" stop-color="#f2771c"/><stop offset="0.721" stop-color="#e54302"/><stop offset="0.935" stop-color="#d71700"/><stop offset="1.000" stop-color="#d30f00"/></linearGradient>
<linearGradient id="tr61" gradientUnits="userSpaceOnUse" x1="1169" y1="0" x2="1552" y2="0"><stop offset="0.000" stop-color="#00ff9f"/><stop offset="0.211" stop-color="#04ff8c"/><stop offset="0.368" stop-color="#b1ff78"/><stop offset="0.431" stop-color="#fffc6d"/><stop offset="0.499" stop-color="#fbb242"/><stop offset="0.587" stop-color="#f1751e"/><stop offset="0.721" stop-color="#e54103"/><stop offset="0.937" stop-color="#d61600"/><stop offset="1.000" stop-color="#d30e00"/></linearGradient>
<linearGradient id="tr62" gradientUnits="userSpaceOnUse" x1="1169" y1="0" x2="1552" y2="0"><stop offset="0.000" stop-color="#00ffa2"/><stop offset="0.209" stop-color="#03ff90"/><stop offset="0.360" stop-color="#abff7d"/><stop offset="0.426" stop-color="#fffe73"/><stop offset="0.491" stop-color="#fbb547"/><stop offset="0.580" stop-color="#f27622"/><stop offset="0.710" stop-color="#e54204"/><stop offset="0.922" stop-color="#d61700"/><stop offset="1.000" stop-color="#d20d00"/></linearGradient>
<linearGradient id="tr63" gradientUnits="userSpaceOnUse" x1="1169" y1="0" x2="1552" y2="0"><stop offset="0.000" stop-color="#00ffa6"/><stop offset="0.206" stop-color="#03ff94"/><stop offset="0.355" stop-color="#a9ff82"/><stop offset="0.423" stop-color="#fffc77"/><stop offset="0.488" stop-color="#fbb34a"/><stop offset="0.577" stop-color="#f17524"/><stop offset="0.708" stop-color="#e54105"/><stop offset="0.922" stop-color="#d61600"/><stop offset="1.000" stop-color="#d20c00"/></linearGradient>
<linearGradient id="tr64" gradientUnits="userSpaceOnUse" x1="1169" y1="0" x2="1552" y2="0"><stop offset="0.000" stop-color="#00ffa9"/><stop offset="0.206" stop-color="#04ff98"/><stop offset="0.360" stop-color="#b4ff86"/><stop offset="0.418" stop-color="#fffe7d"/><stop offset="0.483" stop-color="#fbb44e"/><stop offset="0.569" stop-color="#f27628"/><stop offset="0.697" stop-color="#e54208"/><stop offset="0.888" stop-color="#d71900"/><stop offset="1.000" stop-color="#d10b00"/></linearGradient>
<linearGradient id="tr65" gradientUnits="userSpaceOnUse" x1="1169" y1="0" x2="1552" y2="0"><stop offset="0.000" stop-color="#00ffac"/><stop offset="0.204" stop-color="#03ff9c"/><stop offset="0.352" stop-color="#aeff8b"/><stop offset="0.415" stop-color="#fffc80"/><stop offset="0.480" stop-color="#fbb251"/><stop offset="0.567" stop-color="#f1752a"/><stop offset="0.695" stop-color="#e54109"/><stop offset="0.859" stop-color="#d91d00"/><stop offset="1.000" stop-color="#d10a00"/></linearGradient>
<linearGradient id="tr66" gradientUnits="userSpaceOnUse" x1="1169" y1="0" x2="1552" y2="0"><stop offset="0.000" stop-color="#00ffaf"/><stop offset="0.201" stop-color="#03ffa0"/><stop offset="0.347" stop-color="#acff90"/><stop offset="0.410" stop-color="#fffe87"/><stop offset="0.473" stop-color="#fbb557"/><stop offset="0.556" stop-color="#f2782f"/><stop offset="0.679" stop-color="#e6440e"/><stop offset="0.820" stop-color="#db2200"/><stop offset="1.000" stop-color="#d00900"/></linearGradient>
<linearGradient id="tr67" gradientUnits="userSpaceOnUse" x1="1169" y1="0" x2="1552" y2="0"><stop offset="0.000" stop-color="#00ffb3"/><stop offset="0.201" stop-color="#04ffa4"/><stop offset="0.350" stop-color="#b3ff94"/><stop offset="0.407" stop-color="#fffc8b"/><stop offset="0.470" stop-color="#fbb35a"/><stop offset="0.554" stop-color="#f27631"/><stop offset="0.676" stop-color="#e5430f"/><stop offset="0.817" stop-color="#da2100"/><stop offset="1.000" stop-color="#d00800"/></linearGradient>
<linearGradient id="tr68" gradientUnits="userSpaceOnUse" x1="1169" y1="0" x2="1552" y2="0"><stop offset="0.000" stop-color="#00ffb6"/><stop offset="0.198" stop-color="#04ffa8"/><stop offset="0.345" stop-color="#b1ff99"/><stop offset="0.402" stop-color="#fffe91"/><stop offset="0.465" stop-color="#fbb45e"/><stop offset="0.548" stop-color="#f27634"/><stop offset="0.671" stop-color="#e54211"/><stop offset="0.812" stop-color="#da2100"/><stop offset="1.000" stop-color="#cf0700"/></linearGradient>
<linearGradient id="tr69" gradientUnits="userSpaceOnUse" x1="1169" y1="0" x2="1552" y2="0"><stop offset="0.000" stop-color="#00ffba"/><stop offset="0.196" stop-color="#03ffac"/><stop offset="0.339" stop-color="#aeff9e"/><stop offset="0.399" stop-color="#fffc95"/><stop offset="0.462" stop-color="#fbb261"/><stop offset="0.546" stop-color="#f17437"/><stop offset="0.668" stop-color="#e54113"/><stop offset="0.812" stop-color="#da1f01"/><stop offset="1.000" stop-color="#cf0600"/></linearGradient>
<linearGradient id="tr70" gradientUnits="userSpaceOnUse" x1="1169" y1="0" x2="1552" y2="0"><stop offset="0.000" stop-color="#00ffbd"/><stop offset="0.193" stop-color="#03ffb0"/><stop offset="0.334" stop-color="#acffa3"/><stop offset="0.394" stop-color="#fffe9c"/><stop offset="0.454" stop-color="#fbb568"/><stop offset="0.535" stop-color="#f2773c"/><stop offset="0.655" stop-color="#e54317"/><stop offset="0.807" stop-color="#d91f01"/><stop offset="1.000" stop-color="#ce0500"/></linearGradient>
<linearGradient id="tr71" gradientUnits="userSpaceOnUse" x1="1169" y1="0" x2="1552" y2="0"><stop offset="0.000" stop-color="#00ffc1"/><stop offset="0.193" stop-color="#04ffb5"/><stop offset="0.337" stop-color="#b4ffa8"/><stop offset="0.392" stop-color="#fffca0"/><stop offset="0.452" stop-color="#fbb36b"/><stop offset="0.533" stop-color="#f2763e"/><stop offset="0.653" stop-color="#e54219"/><stop offset="0.809" stop-color="#d91d01"/><stop offset="1.000" stop-color="#ce0400"/></linearGradient>
<linearGradient id="tr72" gradientUnits="userSpaceOnUse" x1="1169" y1="0" x2="1552" y2="0"><stop offset="0.000" stop-color="#00ffc5"/><stop offset="0.191" stop-color="#04ffb9"/><stop offset="0.332" stop-color="#b1ffad"/><stop offset="0.386" stop-color="#fffea7"/><stop offset="0.446" stop-color="#fbb470"/><stop offset="0.527" stop-color="#f27642"/><stop offset="0.645" stop-color="#e5421b"/><stop offset="0.809" stop-color="#d81b02"/><stop offset="1.000" stop-color="#ce0400"/></linearGradient>
<linearGradient id="tr73" gradientUnits="userSpaceOnUse" x1="1169" y1="0" x2="1552" y2="0"><stop offset="0.000" stop-color="#00ffc8"/><stop offset="0.188" stop-color="#03ffbe"/><stop offset="0.326" stop-color="#afffb3"/><stop offset="0.384" stop-color="#fffcab"/><stop offset="0.444" stop-color="#fbb273"/><stop offset="0.522" stop-color="#f27645"/><stop offset="0.640" stop-color="#e5421e"/><stop offset="0.812" stop-color="#d71a02"/><stop offset="1.000" stop-color="#cd0300"/></linearGradient>
<linearGradient id="tr74" gradientUnits="userSpaceOnUse" x1="1169" y1="0" x2="1552" y2="0"><stop offset="0.000" stop-color="#00ffcc"/><stop offset="0.185" stop-color="#03ffc2"/><stop offset="0.319" stop-color="#a8ffb9"/><stop offset="0.379" stop-color="#fffeb3"/><stop offset="0.436" stop-color="#fbb67a"/><stop offset="0.514" stop-color="#f2774a"/><stop offset="0.629" stop-color="#e54321"/><stop offset="0.809" stop-color="#d71902"/><stop offset="1.000" stop-color="#cd0200"/></linearGradient>
<linearGradient id="tr75" gradientUnits="userSpaceOnUse" x1="1169" y1="0" x2="1552" y2="0"><stop offset="0.000" stop-color="#00ffd0"/><stop offset="0.185" stop-color="#04ffc7"/><stop offset="0.324" stop-color="#b4ffbe"/><stop offset="0.376" stop-color="#fffcb7"/><stop offset="0.433" stop-color="#fbb47d"/><stop offset="0.512" stop-color="#f2764c"/><stop offset="0.627" stop-color="#e54223"/><stop offset="0.812" stop-color="#d61703"/><stop offset="1.000" stop-color="#cd0200"/></linearGradient>
<linearGradient id="tr76" gradientUnits="userSpaceOnUse" x1="1169" y1="0" x2="1552" y2="0"><stop offset="0.000" stop-color="#00ffd4"/><stop offset="0.183" stop-color="#04ffcc"/><stop offset="0.316" stop-color="#aeffc4"/><stop offset="0.371" stop-color="#fffebe"/><stop offset="0.428" stop-color="#fbb482"/><stop offset="0.504" stop-color="#f27751"/><stop offset="0.616" stop-color="#e54327"/><stop offset="0.799" stop-color="#d71704"/><stop offset="1.000" stop-color="#cd0200"/></linearGradient>
<linearGradient id="tr77" gradientUnits="userSpaceOnUse" x1="1169" y1="0" x2="1552" y2="0"><stop offset="0.000" stop-color="#00ffd8"/><stop offset="0.180" stop-color="#03ffd1"/><stop offset="0.311" stop-color="#abffc9"/><stop offset="0.368" stop-color="#fffcc3"/><stop offset="0.426" stop-color="#fbb286"/><stop offset="0.501" stop-color="#f27553"/><stop offset="0.614" stop-color="#e54228"/><stop offset="0.796" stop-color="#d61705"/><stop offset="1.000" stop-color="#cd0100"/></linearGradient>
<linearGradient id="tr78" gradientUnits="userSpaceOnUse" x1="1169" y1="0" x2="1552" y2="0"><stop offset="0.000" stop-color="#00ffdc"/><stop offset="0.178" stop-color="#03ffd6"/><stop offset="0.305" stop-color="#a9ffcf"/><stop offset="0.363" stop-color="#fffecb"/><stop offset="0.418" stop-color="#fbb68d"/><stop offset="0.491" stop-color="#f2795a"/><stop offset="0.598" stop-color="#e6452e"/><stop offset="0.773" stop-color="#d71909"/><stop offset="0.984" stop-color="#cd0100"/><stop offset="1.000" stop-color="#cc0100"/></linearGradient>
<linearGradient id="tr79" gradientUnits="userSpaceOnUse" x1="1169" y1="0" x2="1552" y2="0"><stop offset="0.000" stop-color="#00ffe0"/><stop offset="0.178" stop-color="#04ffdb"/><stop offset="0.308" stop-color="#b1ffd5"/><stop offset="0.360" stop-color="#fffccf"/><stop offset="0.415" stop-color="#fbb491"/><stop offset="0.488" stop-color="#f2775c"/><stop offset="0.598" stop-color="#e5422f"/><stop offset="0.775" stop-color="#d61709"/><stop offset="0.982" stop-color="#cd0100"/><stop offset="1.000" stop-color="#cc0100"/></linearGradient>
<linearGradient id="tr80" gradientUnits="userSpaceOnUse" x1="1169" y1="0" x2="1552" y2="0"><stop offset="0.000" stop-color="#00ffe5"/><stop offset="0.175" stop-color="#03ffe0"/><stop offset="0.303" stop-color="#aeffdb"/><stop offset="0.355" stop-color="#fffed8"/><stop offset="0.410" stop-color="#fbb497"/><stop offset="0.483" stop-color="#f27760"/><stop offset="0.590" stop-color="#e54332"/><stop offset="0.765" stop-color="#d7180c"/><stop offset="0.950" stop-color="#cd0200"/><stop offset="1.000" stop-color="#cc0000"/></linearGradient>
<linearGradient id="tr81" gradientUnits="userSpaceOnUse" x1="1169" y1="0" x2="1552" y2="0"><stop offset="0.000" stop-color="#00ffe9"/><stop offset="0.172" stop-color="#03ffe5"/><stop offset="0.298" stop-color="#acffe1"/><stop offset="0.352" stop-color="#fffcdd"/><stop offset="0.407" stop-color="#fbb29a"/><stop offset="0.480" stop-color="#f17562"/><stop offset="0.587" stop-color="#e54234"/><stop offset="0.762" stop-color="#d6160d"/><stop offset="0.945" stop-color="#cd0200"/><stop offset="1.000" stop-color="#cc0000"/></linearGradient>
<linearGradient id="tr82" gradientUnits="userSpaceOnUse" x1="1169" y1="0" x2="1552" y2="0"><stop offset="0.000" stop-color="#00ffee"/><stop offset="0.170" stop-color="#02ffeb"/><stop offset="0.290" stop-color="#a5ffe8"/><stop offset="0.347" stop-color="#fffee5"/><stop offset="0.402" stop-color="#fbb3a0"/><stop offset="0.473" stop-color="#f27768"/><stop offset="0.577" stop-color="#e54338"/><stop offset="0.747" stop-color="#d71810"/><stop offset="0.924" stop-color="#cd0200"/><stop offset="1.000" stop-color="#cc0000"/></linearGradient>
<linearGradient id="tr83" gradientUnits="userSpaceOnUse" x1="1169" y1="0" x2="1552" y2="0"><stop offset="0.000" stop-color="#00fff2"/><stop offset="0.170" stop-color="#04fff0"/><stop offset="0.295" stop-color="#b2ffee"/><stop offset="0.345" stop-color="#fffcea"/><stop offset="0.397" stop-color="#fbb4a6"/><stop offset="0.467" stop-color="#f2776c"/><stop offset="0.572" stop-color="#e5423b"/><stop offset="0.742" stop-color="#d61712"/><stop offset="0.922" stop-color="#cd0200"/><stop offset="1.000" stop-color="#cc0000"/></linearGradient>
<linearGradient id="tr84" gradientUnits="userSpaceOnUse" x1="1169" y1="0" x2="1552" y2="0"><stop offset="0.000" stop-color="#00fff7"/><stop offset="0.167" stop-color="#03fff6"/><stop offset="0.290" stop-color="#affff5"/><stop offset="0.339" stop-color="#fffef3"/><stop offset="0.392" stop-color="#fbb5ac"/><stop offset="0.462" stop-color="#f27670"/><stop offset="0.564" stop-color="#e5433e"/><stop offset="0.731" stop-color="#d71814"/><stop offset="0.916" stop-color="#cd0201"/><stop offset="1.000" stop-color="#cc0000"/></linearGradient>
<linearGradient id="tr85" gradientUnits="userSpaceOnUse" x1="1169" y1="0" x2="1552" y2="0"><stop offset="0.000" stop-color="#00fffc"/><stop offset="0.164" stop-color="#03fffc"/><stop offset="0.282" stop-color="#a8fffb"/><stop offset="0.337" stop-color="#fffcf8"/><stop offset="0.389" stop-color="#fbb2b0"/><stop offset="0.460" stop-color="#f17573"/><stop offset="0.561" stop-color="#e54140"/><stop offset="0.728" stop-color="#d61616"/><stop offset="0.919" stop-color="#cd0101"/><stop offset="1.000" stop-color="#cc0000"/></linearGradient>
<linearGradient id="tr86" gradientUnits="userSpaceOnUse" x1="1169" y1="0" x2="1552" y2="0"><stop offset="0.000" stop-color="#00fdff"/><stop offset="0.164" stop-color="#04fcff"/><stop offset="0.287" stop-color="#b3fcff"/><stop offset="0.334" stop-color="#fffafd"/><stop offset="0.386" stop-color="#fbb1b4"/><stop offset="0.457" stop-color="#f27375"/><stop offset="0.559" stop-color="#e54042"/><stop offset="0.726" stop-color="#d61517"/><stop offset="0.914" stop-color="#cd0101"/><stop offset="1.000" stop-color="#cc0000"/></linearGradient>
<linearGradient id="tr87" gradientUnits="userSpaceOnUse" x1="1169" y1="0" x2="1552" y2="0"><stop offset="0.000" stop-color="#00f8ff"/><stop offset="0.162" stop-color="#03f7ff"/><stop offset="0.285" stop-color="#aff5ff"/><stop offset="0.334" stop-color="#fff3fe"/><stop offset="0.386" stop-color="#fbacb5"/><stop offset="0.457" stop-color="#f27077"/><stop offset="0.559" stop-color="#e53e43"/><stop offset="0.726" stop-color="#d71418"/><stop offset="0.909" stop-color="#cd0102"/><stop offset="1.000" stop-color="#cc0000"/></linearGradient>
<linearGradient id="tr88" gradientUnits="userSpaceOnUse" x1="1169" y1="0" x2="1552" y2="0"><stop offset="0.000" stop-color="#00f4ff"/><stop offset="0.159" stop-color="#03f1ff"/><stop offset="0.279" stop-color="#a8eeff"/><stop offset="0.334" stop-color="#ffecfe"/><stop offset="0.386" stop-color="#fba7b6"/><stop offset="0.457" stop-color="#f26d78"/><stop offset="0.561" stop-color="#e63b43"/><stop offset="0.731" stop-color="#d71218"/><stop offset="0.909" stop-color="#cd0002"/><stop offset="1.000" stop-color="#cc0000"/></linearGradient>
<linearGradient id="tr89" gradientUnits="userSpaceOnUse" x1="1169" y1="0" x2="1552" y2="0"><stop offset="0.000" stop-color="#00efff"/><stop offset="0.159" stop-color="#04ebff"/><stop offset="0.287" stop-color="#b4e8ff"/><stop offset="0.334" stop-color="#ffe6ff"/><stop offset="0.386" stop-color="#fba3b7"/><stop offset="0.457" stop-color="#f26979"/><stop offset="0.561" stop-color="#e63944"/><stop offset="0.731" stop-color="#d71019"/><stop offset="0.906" stop-color="#cd0003"/><stop offset="1.000" stop-color="#cc0000"/></linearGradient>
<linearGradient id="tr90" gradientUnits="userSpaceOnUse" x1="1169" y1="0" x2="1552" y2="0"><stop offset="0.000" stop-color="#00eaff"/><stop offset="0.157" stop-color="#03e6ff"/><stop offset="0.285" stop-color="#b0e1ff"/><stop offset="0.337" stop-color="#ffdcfb"/><stop offset="0.392" stop-color="#fb99b2"/><stop offset="0.465" stop-color="#f16275"/><stop offset="0.572" stop-color="#e53342"/><stop offset="0.749" stop-color="#d60c16"/><stop offset="0.932" stop-color="#cd0002"/><stop offset="1.000" stop-color="#cc0000"/></linearGradient>
<linearGradient id="tr91" gradientUnits="userSpaceOnUse" x1="1169" y1="0" x2="1552" y2="0"><stop offset="0.000" stop-color="#00e6ff"/><stop offset="0.154" stop-color="#03e1ff"/><stop offset="0.279" stop-color="#a9dbff"/><stop offset="0.337" stop-color="#ffd5fc"/><stop offset="0.392" stop-color="#fb95b3"/><stop offset="0.465" stop-color="#f25f76"/><stop offset="0.574" stop-color="#e53042"/><stop offset="0.752" stop-color="#d60a17"/><stop offset="0.948" stop-color="#cd0001"/><stop offset="1.000" stop-color="#cc0000"/></linearGradient>
<linearGradient id="tr92" gradientUnits="userSpaceOnUse" x1="1169" y1="0" x2="1552" y2="0"><stop offset="0.000" stop-color="#00e1ff"/><stop offset="0.154" stop-color="#04dcff"/><stop offset="0.285" stop-color="#b1d5ff"/><stop offset="0.337" stop-color="#ffcffc"/><stop offset="0.392" stop-color="#fb91b4"/><stop offset="0.465" stop-color="#f25c77"/><stop offset="0.574" stop-color="#e52e43"/><stop offset="0.752" stop-color="#d70918"/><stop offset="0.963" stop-color="#cd0001"/><stop offset="1.000" stop-color="#cc0000"/></linearGradient>
<linearGradient id="tr93" gradientUnits="userSpaceOnUse" x1="1169" y1="0" x2="1552" y2="0"><stop offset="0.000" stop-color="#00ddff"/><stop offset="0.151" stop-color="#03d6ff"/><stop offset="0.282" stop-color="#aecfff"/><stop offset="0.337" stop-color="#ffc9fd"/><stop offset="0.394" stop-color="#fb8ab2"/><stop offset="0.470" stop-color="#f15675"/><stop offset="0.582" stop-color="#e52a41"/><stop offset="0.765" stop-color="#d60616"/><stop offset="0.974" stop-color="#cc0001"/><stop offset="1.000" stop-color="#cc0000"/></linearGradient>
<linearGradient id="tr94" gradientUnits="userSpaceOnUse" x1="1169" y1="0" x2="1552" y2="0"><stop offset="0.000" stop-color="#00d8ff"/><stop offset="0.149" stop-color="#03d2ff"/><stop offset="0.277" stop-color="#a7caff"/><stop offset="0.337" stop-color="#ffc4fd"/><stop offset="0.394" stop-color="#fb86b3"/><stop offset="0.470" stop-color="#f25376"/><stop offset="0.582" stop-color="#e52842"/><stop offset="0.765" stop-color="#d60517"/><stop offset="0.979" stop-color="#cd0001"/><stop offset="1.000" stop-color="#cc0001"/></linearGradient>
<linearGradient id="tr95" gradientUnits="userSpaceOnUse" x1="1169" y1="0" x2="1552" y2="0"><stop offset="0.000" stop-color="#00d4ff"/><stop offset="0.149" stop-color="#04cdff"/><stop offset="0.285" stop-color="#b2c3ff"/><stop offset="0.337" stop-color="#ffbefe"/><stop offset="0.394" stop-color="#fb82b4"/><stop offset="0.470" stop-color="#f25077"/><stop offset="0.582" stop-color="#e52643"/><stop offset="0.765" stop-color="#d70418"/><stop offset="0.982" stop-color="#cd0001"/><stop offset="1.000" stop-color="#cc0001"/></linearGradient>
<linearGradient id="tr96" gradientUnits="userSpaceOnUse" x1="1169" y1="0" x2="1552" y2="0"><stop offset="0.000" stop-color="#00d0ff"/><stop offset="0.146" stop-color="#03c8ff"/><stop offset="0.279" stop-color="#abbeff"/><stop offset="0.337" stop-color="#ffb8fe"/><stop offset="0.394" stop-color="#fb7eb5"/><stop offset="0.470" stop-color="#f24d78"/><stop offset="0.582" stop-color="#e62444"/><stop offset="0.765" stop-color="#d70319"/><stop offset="0.987" stop-color="#cd0001"/><stop offset="1.000" stop-color="#cc0001"/></linearGradient>
<linearGradient id="tr97" gradientUnits="userSpaceOnUse" x1="1169" y1="0" x2="1552" y2="0"><stop offset="0.000" stop-color="#00cbff"/><stop offset="0.146" stop-color="#04c3ff"/><stop offset="0.287" stop-color="#b7b8ff"/><stop offset="0.339" stop-color="#ffaffb"/><stop offset="0.399" stop-color="#fb76b1"/><stop offset="0.478" stop-color="#f14774"/><stop offset="0.595" stop-color="#e51f41"/><stop offset="0.770" stop-color="#d70219"/><stop offset="0.995" stop-color="#cd0001"/><stop offset="1.000" stop-color="#cd0001"/></linearGradient>
<linearGradient id="tr98" gradientUnits="userSpaceOnUse" x1="1169" y1="0" x2="1552" y2="0"><stop offset="0.000" stop-color="#00c7ff"/><stop offset="0.144" stop-color="#04beff"/><stop offset="0.282" stop-color="#b0b3ff"/><stop offset="0.339" stop-color="#ffaafb"/><stop offset="0.399" stop-color="#fb72b2"/><stop offset="0.480" stop-color="#f14374"/><stop offset="0.598" stop-color="#e51c41"/><stop offset="0.765" stop-color="#d8021a"/><stop offset="0.995" stop-color="#cd0001"/><stop offset="1.000" stop-color="#cd0001"/></linearGradient>
<linearGradient id="tr99" gradientUnits="userSpaceOnUse" x1="1169" y1="0" x2="1552" y2="0"><stop offset="0.000" stop-color="#00c3ff"/><stop offset="0.141" stop-color="#03baff"/><stop offset="0.279" stop-color="#acaeff"/><stop offset="0.339" stop-color="#ffa5fc"/><stop offset="0.399" stop-color="#fb6eb3"/><stop offset="0.480" stop-color="#f14075"/><stop offset="0.601" stop-color="#e51a41"/><stop offset="0.760" stop-color="#d8011c"/><stop offset="0.997" stop-color="#cd0002"/><stop offset="1.000" stop-color="#cd0002"/></linearGradient>
<linearGradient id="tr100" gradientUnits="userSpaceOnUse" x1="1169" y1="0" x2="1552" y2="0"><stop offset="0.000" stop-color="#00bfff"/><stop offset="0.141" stop-color="#04b5ff"/><stop offset="0.285" stop-color="#b4a8ff"/><stop offset="0.339" stop-color="#ffa0fc"/><stop offset="0.399" stop-color="#fb6ab3"/><stop offset="0.480" stop-color="#f23e76"/><stop offset="0.601" stop-color="#e51842"/><stop offset="0.755" stop-color="#d9011e"/><stop offset="1.000" stop-color="#cd0002"/></linearGradient>
<linearGradient id="tr101" gradientUnits="userSpaceOnUse" x1="1169" y1="0" x2="1552" y2="0"><stop offset="0.000" stop-color="#00bbff"/><stop offset="0.138" stop-color="#03b1ff"/><stop offset="0.282" stop-color="#b1a3ff"/><stop offset="0.339" stop-color="#ff9afd"/><stop offset="0.399" stop-color="#fb67b4"/><stop offset="0.480" stop-color="#f23b77"/><stop offset="0.601" stop-color="#e51643"/><stop offset="0.749" stop-color="#da011f"/><stop offset="1.000" stop-color="#cd0002"/></linearGradient>
<linearGradient id="tr102" gradientUnits="userSpaceOnUse" x1="1169" y1="0" x2="1552" y2="0"><stop offset="0.000" stop-color="#00b7ff"/><stop offset="0.136" stop-color="#03adff"/><stop offset="0.277" stop-color="#aa9eff"/><stop offset="0.339" stop-color="#ff95fd"/><stop offset="0.402" stop-color="#fb61b3"/><stop offset="0.486" stop-color="#f13675"/><stop offset="0.608" stop-color="#e51341"/><stop offset="0.749" stop-color="#da0120"/><stop offset="1.000" stop-color="#cd0002"/></linearGradient>
<linearGradient id="tr103" gradientUnits="userSpaceOnUse" x1="1169" y1="0" x2="1552" y2="0"><stop offset="0.000" stop-color="#00b3ff"/><stop offset="0.136" stop-color="#04a8ff"/><stop offset="0.285" stop-color="#b598ff"/><stop offset="0.339" stop-color="#ff90fd"/><stop offset="0.402" stop-color="#fb5eb4"/><stop offset="0.486" stop-color="#f23476"/><stop offset="0.608" stop-color="#e51142"/><stop offset="0.747" stop-color="#da0021"/><stop offset="1.000" stop-color="#cd0003"/></linearGradient>
<linearGradient id="tr104" gradientUnits="userSpaceOnUse" x1="1169" y1="0" x2="1552" y2="0"><stop offset="0.000" stop-color="#00afff"/><stop offset="0.133" stop-color="#03a4ff"/><stop offset="0.279" stop-color="#ae94ff"/><stop offset="0.339" stop-color="#ff8bfe"/><stop offset="0.402" stop-color="#fb5ab5"/><stop offset="0.486" stop-color="#f23177"/><stop offset="0.608" stop-color="#e50f43"/><stop offset="0.747" stop-color="#db0022"/><stop offset="1.000" stop-color="#cd0003"/></linearGradient>
<linearGradient id="tr105" gradientUnits="userSpaceOnUse" x1="1169" y1="0" x2="1552" y2="0"><stop offset="0.000" stop-color="#00abff"/><stop offset="0.133" stop-color="#04a0ff"/><stop offset="0.285" stop-color="#b58fff"/><stop offset="0.342" stop-color="#ff84fb"/><stop offset="0.407" stop-color="#fb53b1"/><stop offset="0.493" stop-color="#f12c74"/><stop offset="0.621" stop-color="#e50a40"/><stop offset="0.775" stop-color="#d9001e"/><stop offset="1.000" stop-color="#ce0003"/></linearGradient>
<linearGradient id="tr106" gradientUnits="userSpaceOnUse" x1="1169" y1="0" x2="1552" y2="0"><stop offset="0.000" stop-color="#00a8ff"/><stop offset="0.131" stop-color="#049cff"/><stop offset="0.282" stop-color="#b28aff"/><stop offset="0.342" stop-color="#ff7ffb"/><stop offset="0.407" stop-color="#fb50b1"/><stop offset="0.493" stop-color="#f12975"/><stop offset="0.621" stop-color="#e50941"/><stop offset="0.796" stop-color="#d8001b"/><stop offset="1.000" stop-color="#ce0004"/></linearGradient>
<linearGradient id="tr107" gradientUnits="userSpaceOnUse" x1="1169" y1="0" x2="1552" y2="0"><stop offset="0.000" stop-color="#00a4ff"/><stop offset="0.128" stop-color="#0398ff"/><stop offset="0.279" stop-color="#af86ff"/><stop offset="0.342" stop-color="#ff7afc"/><stop offset="0.407" stop-color="#fb4cb2"/><stop offset="0.493" stop-color="#f22776"/><stop offset="0.621" stop-color="#e50742"/><stop offset="0.830" stop-color="#d60017"/><stop offset="1.000" stop-color="#ce0004"/></linearGradient>
<linearGradient id="tr108" gradientUnits="userSpaceOnUse" x1="1169" y1="0" x2="1552" y2="0"><stop offset="0.000" stop-color="#00a0ff"/><stop offset="0.128" stop-color="#0494ff"/><stop offset="0.285" stop-color="#b680ff"/><stop offset="0.342" stop-color="#ff76fc"/><stop offset="0.407" stop-color="#fb49b3"/><stop offset="0.496" stop-color="#f12475"/><stop offset="0.627" stop-color="#e50541"/><stop offset="0.841" stop-color="#d60016"/><stop offset="1.000" stop-color="#ce0005"/></linearGradient>
<linearGradient id="tr109" gradientUnits="userSpaceOnUse" x1="1169" y1="0" x2="1552" y2="0"><stop offset="0.000" stop-color="#009cff"/><stop offset="0.125" stop-color="#0490ff"/><stop offset="0.282" stop-color="#b37cff"/><stop offset="0.342" stop-color="#ff71fc"/><stop offset="0.407" stop-color="#fb46b4"/><stop offset="0.496" stop-color="#f22176"/><stop offset="0.627" stop-color="#e50442"/><stop offset="0.841" stop-color="#d60017"/><stop offset="1.000" stop-color="#ce0005"/></linearGradient>
<linearGradient id="tr110" gradientUnits="userSpaceOnUse" x1="1169" y1="0" x2="1552" y2="0"><stop offset="0.000" stop-color="#0099ff"/><stop offset="0.123" stop-color="#038dff"/><stop offset="0.277" stop-color="#ad78ff"/><stop offset="0.342" stop-color="#ff6dfd"/><stop offset="0.410" stop-color="#fb41b2"/><stop offset="0.499" stop-color="#f21e76"/><stop offset="0.629" stop-color="#e50242"/><stop offset="0.843" stop-color="#d60017"/><stop offset="1.000" stop-color="#cf0005"/></linearGradient>
<linearGradient id="tr111" gradientUnits="userSpaceOnUse" x1="1169" y1="0" x2="1552" y2="0"><stop offset="0.000" stop-color="#0095ff"/><stop offset="0.123" stop-color="#0489ff"/><stop offset="0.282" stop-color="#b473ff"/><stop offset="0.342" stop-color="#ff68fd"/><stop offset="0.410" stop-color="#fb3eb3"/><stop offset="0.499" stop-color="#f21b76"/><stop offset="0.629" stop-color="#e50243"/><stop offset="0.843" stop-color="#d70018"/><stop offset="1.000" stop-color="#cf0006"/></linearGradient>
<linearGradient id="tr112" gradientUnits="userSpaceOnUse" x1="1169" y1="0" x2="1552" y2="0"><stop offset="0.000" stop-color="#0092ff"/><stop offset="0.120" stop-color="#0485ff"/><stop offset="0.279" stop-color="#b16fff"/><stop offset="0.342" stop-color="#ff64fe"/><stop offset="0.410" stop-color="#fb3bb4"/><stop offset="0.501" stop-color="#f21876"/><stop offset="0.624" stop-color="#e60145"/><stop offset="0.836" stop-color="#d7001a"/><stop offset="1.000" stop-color="#cf0006"/></linearGradient>
<linearGradient id="tr113" gradientUnits="userSpaceOnUse" x1="1169" y1="0" x2="1552" y2="0"><stop offset="0.000" stop-color="#008eff"/><stop offset="0.117" stop-color="#0382ff"/><stop offset="0.277" stop-color="#ae6bff"/><stop offset="0.345" stop-color="#ff5efb"/><stop offset="0.413" stop-color="#fb36b3"/><stop offset="0.504" stop-color="#f21576"/><stop offset="0.621" stop-color="#e70147"/><stop offset="0.830" stop-color="#d8001b"/><stop offset="1.000" stop-color="#cf0007"/></linearGradient>
<linearGradient id="tr114" gradientUnits="userSpaceOnUse" x1="1169" y1="0" x2="1552" y2="0"><stop offset="0.000" stop-color="#008bff"/><stop offset="0.117" stop-color="#047eff"/><stop offset="0.282" stop-color="#b566ff"/><stop offset="0.345" stop-color="#ff59fb"/><stop offset="0.415" stop-color="#fb32b1"/><stop offset="0.509" stop-color="#f11174"/><stop offset="0.621" stop-color="#e70148"/><stop offset="0.830" stop-color="#d8001c"/><stop offset="1.000" stop-color="#d00008"/></linearGradient>
<linearGradient id="tr115" gradientUnits="userSpaceOnUse" x1="1169" y1="0" x2="1552" y2="0"><stop offset="0.000" stop-color="#0087ff"/><stop offset="0.115" stop-color="#037bff"/><stop offset="0.279" stop-color="#b263ff"/><stop offset="0.345" stop-color="#ff55fc"/><stop offset="0.415" stop-color="#fb2fb2"/><stop offset="0.509" stop-color="#f10f75"/><stop offset="0.621" stop-color="#e70049"/><stop offset="0.830" stop-color="#d8001c"/><stop offset="1.000" stop-color="#d00008"/></linearGradient>
<linearGradient id="tr116" gradientUnits="userSpaceOnUse" x1="1169" y1="0" x2="1552" y2="0"><stop offset="0.000" stop-color="#0084ff"/><stop offset="0.115" stop-color="#0477ff"/><stop offset="0.285" stop-color="#b85dff"/><stop offset="0.345" stop-color="#ff51fc"/><stop offset="0.415" stop-color="#fb2cb3"/><stop offset="0.509" stop-color="#f20d76"/><stop offset="0.624" stop-color="#e70049"/><stop offset="0.836" stop-color="#d8001c"/><stop offset="1.000" stop-color="#d00009"/></linearGradient>
<linearGradient id="tr117" gradientUnits="userSpaceOnUse" x1="1169" y1="0" x2="1552" y2="0"><stop offset="0.000" stop-color="#0081ff"/><stop offset="0.112" stop-color="#0474ff"/><stop offset="0.279" stop-color="#b25aff"/><stop offset="0.345" stop-color="#ff4dfc"/><stop offset="0.415" stop-color="#fb29b4"/><stop offset="0.509" stop-color="#f20b76"/><stop offset="0.632" stop-color="#e70047"/><stop offset="0.849" stop-color="#d8001b"/><stop offset="1.000" stop-color="#d00009"/></linearGradient>
<linearGradient id="tr118" gradientUnits="userSpaceOnUse" x1="1169" y1="0" x2="1552" y2="0"><stop offset="0.000" stop-color="#007dff"/><stop offset="0.110" stop-color="#0370ff"/><stop offset="0.277" stop-color="#b057ff"/><stop offset="0.345" stop-color="#ff49fd"/><stop offset="0.418" stop-color="#fb24b2"/><stop offset="0.514" stop-color="#f10775"/><stop offset="0.658" stop-color="#e50041"/><stop offset="0.893" stop-color="#d60016"/><stop offset="1.000" stop-color="#d1000a"/></linearGradient>
<linearGradient id="tr119" gradientUnits="userSpaceOnUse" x1="1169" y1="0" x2="1552" y2="0"><stop offset="0.000" stop-color="#007aff"/><stop offset="0.110" stop-color="#046dff"/><stop offset="0.282" stop-color="#b652ff"/><stop offset="0.345" stop-color="#ff45fd"/><stop offset="0.418" stop-color="#fb21b3"/><stop offset="0.514" stop-color="#f20576"/><stop offset="0.658" stop-color="#e50042"/><stop offset="0.893" stop-color="#d60016"/><stop offset="1.000" stop-color="#d1000a"/></linearGradient>
<linearGradient id="tr120" gradientUnits="userSpaceOnUse" x1="1169" y1="0" x2="1552" y2="0"><stop offset="0.000" stop-color="#0077ff"/><stop offset="0.107" stop-color="#046aff"/><stop offset="0.279" stop-color="#b34eff"/><stop offset="0.345" stop-color="#ff41fe"/><stop offset="0.418" stop-color="#fb1eb4"/><stop offset="0.514" stop-color="#f20476"/><stop offset="0.658" stop-color="#e50042"/><stop offset="0.893" stop-color="#d60017"/><stop offset="1.000" stop-color="#d1000b"/></linearGradient>
<linearGradient id="tr121" gradientUnits="userSpaceOnUse" x1="1169" y1="0" x2="1552" y2="0"><stop offset="0.000" stop-color="#0074ff"/><stop offset="0.104" stop-color="#0367ff"/><stop offset="0.274" stop-color="#ae4bff"/><stop offset="0.347" stop-color="#ff3bfb"/><stop offset="0.420" stop-color="#fb1ab2"/><stop offset="0.520" stop-color="#f10275"/><stop offset="0.666" stop-color="#e50041"/><stop offset="0.906" stop-color="#d60016"/><stop offset="1.000" stop-color="#d1000c"/></linearGradient>
<linearGradient id="tr122" gradientUnits="userSpaceOnUse" x1="1169" y1="0" x2="1552" y2="0"><stop offset="0.000" stop-color="#0071ff"/><stop offset="0.104" stop-color="#0463ff"/><stop offset="0.282" stop-color="#b746ff"/><stop offset="0.347" stop-color="#ff37fb"/><stop offset="0.423" stop-color="#fb17b1"/><stop offset="0.520" stop-color="#f20176"/><stop offset="0.666" stop-color="#e50042"/><stop offset="0.906" stop-color="#d60017"/><stop offset="1.000" stop-color="#d2000c"/></linearGradient>
<linearGradient id="tr123" gradientUnits="userSpaceOnUse" x1="1169" y1="0" x2="1552" y2="0"><stop offset="0.000" stop-color="#006eff"/><stop offset="0.102" stop-color="#0460ff"/><stop offset="0.277" stop-color="#b143ff"/><stop offset="0.347" stop-color="#ff33fc"/><stop offset="0.423" stop-color="#fb14b2"/><stop offset="0.517" stop-color="#f20178"/><stop offset="0.663" stop-color="#e60043"/><stop offset="0.901" stop-color="#d70018"/><stop offset="1.000" stop-color="#d2000d"/></linearGradient>
<linearGradient id="tr124" gradientUnits="userSpaceOnUse" x1="1169" y1="0" x2="1552" y2="0"><stop offset="0.000" stop-color="#006aff"/><stop offset="0.102" stop-color="#055dff"/><stop offset="0.282" stop-color="#b73fff"/><stop offset="0.347" stop-color="#ff30fc"/><stop offset="0.423" stop-color="#fb11b2"/><stop offset="0.514" stop-color="#f2007a"/><stop offset="0.658" stop-color="#e60045"/><stop offset="0.890" stop-color="#d7001a"/><stop offset="1.000" stop-color="#d2000d"/></linearGradient>
<linearGradient id="tr125" gradientUnits="userSpaceOnUse" x1="1169" y1="0" x2="1552" y2="0"><stop offset="0.000" stop-color="#0067ff"/><stop offset="0.099" stop-color="#045aff"/><stop offset="0.279" stop-color="#b43bff"/><stop offset="0.347" stop-color="#ff2cfc"/><stop offset="0.423" stop-color="#fb0eb3"/><stop offset="0.514" stop-color="#f3007b"/><stop offset="0.658" stop-color="#e60046"/><stop offset="0.890" stop-color="#d8001a"/><stop offset="1.000" stop-color="#d2000e"/></linearGradient>
<linearGradient id="tr126" gradientUnits="userSpaceOnUse" x1="1169" y1="0" x2="1552" y2="0"><stop offset="0.000" stop-color="#0064ff"/><stop offset="0.097" stop-color="#0457ff"/><stop offset="0.277" stop-color="#b238ff"/><stop offset="0.347" stop-color="#ff28fd"/><stop offset="0.423" stop-color="#fb0bb4"/><stop offset="0.522" stop-color="#f20078"/><stop offset="0.671" stop-color="#e60043"/><stop offset="0.914" stop-color="#d70018"/><stop offset="1.000" stop-color="#d3000e"/></linearGradient>
<linearGradient id="tr127" gradientUnits="userSpaceOnUse" x1="1169" y1="0" x2="1552" y2="0"><stop offset="0.000" stop-color="#0061ff"/><stop offset="0.097" stop-color="#0454ff"/><stop offset="0.282" stop-color="#b834ff"/><stop offset="0.347" stop-color="#ff24fd"/><stop offset="0.426" stop-color="#fb07b3"/><stop offset="0.530" stop-color="#f10075"/><stop offset="0.684" stop-color="#e50041"/><stop offset="0.935" stop-color="#d60016"/><stop offset="1.000" stop-color="#d3000f"/></linearGradient>
<linearGradient id="tr128" gradientUnits="userSpaceOnUse" x1="1169" y1="0" x2="1552" y2="0"><stop offset="0.000" stop-color="#005eff"/><stop offset="0.094" stop-color="#0451ff"/><stop offset="0.279" stop-color="#b531ff"/><stop offset="0.347" stop-color="#ff21fd"/><stop offset="0.426" stop-color="#fb05b3"/><stop offset="0.530" stop-color="#f20076"/><stop offset="0.684" stop-color="#e50042"/><stop offset="0.935" stop-color="#d60017"/><stop offset="1.000" stop-color="#d3000f"/></linearGradient>
<linearGradient id="tr129" gradientUnits="userSpaceOnUse" x1="1169" y1="0" x2="1552" y2="0"><stop offset="0.000" stop-color="#005bff"/><stop offset="0.091" stop-color="#034fff"/><stop offset="0.274" stop-color="#b02eff"/><stop offset="0.350" stop-color="#ff1cfb"/><stop offset="0.428" stop-color="#fb03b2"/><stop offset="0.533" stop-color="#f10075"/><stop offset="0.687" stop-color="#e50042"/><stop offset="0.940" stop-color="#d60017"/><stop offset="1.000" stop-color="#d30010"/></linearGradient>
<linearGradient id="tr130" gradientUnits="userSpaceOnUse" x1="1169" y1="0" x2="1552" y2="0"><stop offset="0.000" stop-color="#0058ff"/><stop offset="0.091" stop-color="#044cff"/><stop offset="0.279" stop-color="#b629ff"/><stop offset="0.350" stop-color="#ff18fb"/><stop offset="0.428" stop-color="#fb02b3"/><stop offset="0.535" stop-color="#f10075"/><stop offset="0.692" stop-color="#e50041"/><stop offset="0.948" stop-color="#d60016"/><stop offset="1.000" stop-color="#d40011"/></linearGradient>
<linearGradient id="tr131" gradientUnits="userSpaceOnUse" x1="1169" y1="0" x2="1552" y2="0"><stop offset="0.000" stop-color="#0056ff"/><stop offset="0.089" stop-color="#0449ff"/><stop offset="0.277" stop-color="#b327ff"/><stop offset="0.350" stop-color="#ff15fc"/><stop offset="0.428" stop-color="#fb01b3"/><stop offset="0.535" stop-color="#f20076"/><stop offset="0.692" stop-color="#e50042"/><stop offset="0.948" stop-color="#d60017"/><stop offset="1.000" stop-color="#d40011"/></linearGradient>
<linearGradient id="tr132" gradientUnits="userSpaceOnUse" x1="1169" y1="0" x2="1552" y2="0"><stop offset="0.000" stop-color="#0053ff"/><stop offset="0.089" stop-color="#0546ff"/><stop offset="0.282" stop-color="#b922ff"/><stop offset="0.350" stop-color="#ff11fc"/><stop offset="0.426" stop-color="#fb00b6"/><stop offset="0.533" stop-color="#f20078"/><stop offset="0.689" stop-color="#e60043"/><stop offset="0.945" stop-color="#d70018"/><stop offset="1.000" stop-color="#d40012"/></linearGradient>
<linearGradient id="tr133" gradientUnits="userSpaceOnUse" x1="1169" y1="0" x2="1552" y2="0"><stop offset="0.000" stop-color="#0050ff"/><stop offset="0.086" stop-color="#0443ff"/><stop offset="0.279" stop-color="#b61fff"/><stop offset="0.350" stop-color="#ff0dfc"/><stop offset="0.426" stop-color="#fb00b7"/><stop offset="0.533" stop-color="#f20078"/><stop offset="0.689" stop-color="#e60044"/><stop offset="0.945" stop-color="#d70018"/><stop offset="1.000" stop-color="#d40012"/></linearGradient>
<linearGradient id="tr134" gradientUnits="userSpaceOnUse" x1="1169" y1="0" x2="1552" y2="0"><stop offset="0.000" stop-color="#004dff"/><stop offset="0.084" stop-color="#0441ff"/><stop offset="0.277" stop-color="#b41cff"/><stop offset="0.350" stop-color="#ff0afd"/><stop offset="0.431" stop-color="#fb00b4"/><stop offset="0.540" stop-color="#f20076"/><stop offset="0.702" stop-color="#e50042"/><stop offset="0.966" stop-color="#d60016"/><stop offset="1.000" stop-color="#d50013"/></linearGradient>
<linearGradient id="tr135" gradientUnits="userSpaceOnUse" x1="1169" y1="0" x2="1552" y2="0"><stop offset="0.000" stop-color="#004aff"/><stop offset="0.084" stop-color="#053eff"/><stop offset="0.282" stop-color="#b918ff"/><stop offset="0.350" stop-color="#ff07fd"/><stop offset="0.433" stop-color="#fb00b2"/><stop offset="0.543" stop-color="#f10075"/><stop offset="0.705" stop-color="#e50042"/><stop offset="0.971" stop-color="#d60016"/><stop offset="1.000" stop-color="#d50013"/></linearGradient>
<linearGradient id="tr136" gradientUnits="userSpaceOnUse" x1="1169" y1="0" x2="1552" y2="0"><stop offset="0.000" stop-color="#0048ff"/><stop offset="0.081" stop-color="#043bff"/><stop offset="0.277" stop-color="#b416ff"/><stop offset="0.350" stop-color="#ff04fd"/><stop offset="0.433" stop-color="#fb00b3"/><stop offset="0.543" stop-color="#f20076"/><stop offset="0.705" stop-color="#e50042"/><stop offset="0.971" stop-color="#d60017"/><stop offset="1.000" stop-color="#d50014"/></linearGradient>
<linearGradient id="tr137" gradientUnits="userSpaceOnUse" x1="1169" y1="0" x2="1552" y2="0"><stop offset="0.000" stop-color="#0045ff"/><stop offset="0.081" stop-color="#0539ff"/><stop offset="0.282" stop-color="#ba11ff"/><stop offset="0.352" stop-color="#ff02fb"/><stop offset="0.436" stop-color="#fb00b2"/><stop offset="0.548" stop-color="#f10074"/><stop offset="0.715" stop-color="#e50041"/><stop offset="0.990" stop-color="#d60015"/><stop offset="1.000" stop-color="#d50014"/></linearGradient>
<linearGradient id="tr138" gradientUnits="userSpaceOnUse" x1="1169" y1="0" x2="1552" y2="0"><stop offset="0.000" stop-color="#0042ff"/><stop offset="0.078" stop-color="#0436ff"/><stop offset="0.279" stop-color="#b70eff"/><stop offset="0.352" stop-color="#ff01fb"/><stop offset="0.436" stop-color="#fb00b3"/><stop offset="0.548" stop-color="#f10075"/><stop offset="0.715" stop-color="#e50041"/><stop offset="0.990" stop-color="#d60016"/><stop offset="1.000" stop-color="#d50015"/></linearGradient>
<linearGradient id="tr139" gradientUnits="userSpaceOnUse" x1="1169" y1="0" x2="1552" y2="0"><stop offset="0.000" stop-color="#003fff"/><stop offset="0.076" stop-color="#0434ff"/><stop offset="0.277" stop-color="#b50cff"/><stop offset="0.352" stop-color="#ff00fc"/><stop offset="0.439" stop-color="#fb00b1"/><stop offset="0.554" stop-color="#f10074"/><stop offset="0.723" stop-color="#e50040"/><stop offset="1.000" stop-color="#d60015"/></linearGradient>
<linearGradient id="tr140" gradientUnits="userSpaceOnUse" x1="1169" y1="0" x2="1552" y2="0"><stop offset="0.000" stop-color="#003dff"/><stop offset="0.076" stop-color="#0531ff"/><stop offset="0.282" stop-color="#ba07ff"/><stop offset="0.352" stop-color="#ff00fc"/><stop offset="0.439" stop-color="#fb00b2"/><stop offset="0.554" stop-color="#f10075"/><stop offset="0.723" stop-color="#e50041"/><stop offset="1.000" stop-color="#d60016"/></linearGradient>
<linearGradient id="tr141" gradientUnits="userSpaceOnUse" x1="1169" y1="0" x2="1552" y2="0"><stop offset="0.000" stop-color="#003aff"/><stop offset="0.073" stop-color="#042fff"/><stop offset="0.279" stop-color="#b805ff"/><stop offset="0.352" stop-color="#ff00fc"/><stop offset="0.439" stop-color="#fb00b3"/><stop offset="0.554" stop-color="#f20075"/><stop offset="0.723" stop-color="#e50041"/><stop offset="1.000" stop-color="#d60017"/></linearGradient>
<linearGradient id="tr142" gradientUnits="userSpaceOnUse" x1="1169" y1="0" x2="1552" y2="0"><stop offset="0.000" stop-color="#0037ff"/><stop offset="0.073" stop-color="#052cff"/><stop offset="0.282" stop-color="#bb03ff"/><stop offset="0.352" stop-color="#ff00fd"/><stop offset="0.439" stop-color="#fb00b3"/><stop offset="0.554" stop-color="#f20076"/><stop offset="0.723" stop-color="#e50042"/><stop offset="1.000" stop-color="#d60017"/></linearGradient>
<linearGradient id="tr143" gradientUnits="userSpaceOnUse" x1="1169" y1="0" x2="1552" y2="0"><stop offset="0.000" stop-color="#0035ff"/><stop offset="0.070" stop-color="#052aff"/><stop offset="0.279" stop-color="#b802ff"/><stop offset="0.352" stop-color="#ff00fd"/><stop offset="0.439" stop-color="#fb00b4"/><stop offset="0.554" stop-color="#f20077"/><stop offset="0.723" stop-color="#e50043"/><stop offset="1.000" stop-color="#d70018"/></linearGradient>
<linearGradient id="tr144" gradientUnits="userSpaceOnUse" x1="1169" y1="0" x2="1552" y2="0"><stop offset="0.000" stop-color="#0032ff"/><stop offset="0.068" stop-color="#0427ff"/><stop offset="0.277" stop-color="#b601ff"/><stop offset="0.352" stop-color="#ff00fd"/><stop offset="0.441" stop-color="#fb00b3"/><stop offset="0.559" stop-color="#f20075"/><stop offset="0.731" stop-color="#e50042"/><stop offset="1.000" stop-color="#d70018"/></linearGradient>
<linearGradient id="tr145" gradientUnits="userSpaceOnUse" x1="1169" y1="0" x2="1552" y2="0"><stop offset="0.000" stop-color="#0030ff"/><stop offset="0.068" stop-color="#0525ff"/><stop offset="0.279" stop-color="#b900ff"/><stop offset="0.355" stop-color="#ff00fb"/><stop offset="0.444" stop-color="#fb00b2"/><stop offset="0.564" stop-color="#f10074"/><stop offset="0.742" stop-color="#e50040"/><stop offset="1.000" stop-color="#d70019"/></linearGradient>
<linearGradient id="tr146" gradientUnits="userSpaceOnUse" x1="1169" y1="0" x2="1552" y2="0"><stop offset="0.000" stop-color="#002dff"/><stop offset="0.065" stop-color="#0522ff"/><stop offset="0.269" stop-color="#af00ff"/><stop offset="0.355" stop-color="#ff00fb"/><stop offset="0.444" stop-color="#fb00b2"/><stop offset="0.564" stop-color="#f10075"/><stop offset="0.742" stop-color="#e50041"/><stop offset="1.000" stop-color="#d70019"/></linearGradient>
<linearGradient id="tr147" gradientUnits="userSpaceOnUse" x1="1169" y1="0" x2="1552" y2="0"><stop offset="0.000" stop-color="#002bff"/><stop offset="0.065" stop-color="#0620ff"/><stop offset="0.256" stop-color="#a300ff"/><stop offset="0.355" stop-color="#ff00fc"/><stop offset="0.446" stop-color="#fb00b1"/><stop offset="0.567" stop-color="#f10074"/><stop offset="0.744" stop-color="#e50041"/><stop offset="1.000" stop-color="#d7001a"/></linearGradient>
<linearGradient id="tr148" gradientUnits="userSpaceOnUse" x1="1169" y1="0" x2="1552" y2="0"><stop offset="0.000" stop-color="#0028ff"/><stop offset="0.063" stop-color="#051eff"/><stop offset="0.245" stop-color="#9b00ff"/><stop offset="0.355" stop-color="#ff00fc"/><stop offset="0.446" stop-color="#fb00b2"/><stop offset="0.569" stop-color="#f10074"/><stop offset="0.749" stop-color="#e50040"/><stop offset="1.000" stop-color="#d8001a"/></linearGradient>
<linearGradient id="tr149" gradientUnits="userSpaceOnUse" x1="1169" y1="0" x2="1552" y2="0"><stop offset="0.000" stop-color="#0026ff"/><stop offset="0.060" stop-color="#041cff"/><stop offset="0.235" stop-color="#9200ff"/><stop offset="0.355" stop-color="#ff00fc"/><stop offset="0.446" stop-color="#fb00b2"/><stop offset="0.569" stop-color="#f10075"/><stop offset="0.749" stop-color="#e50041"/><stop offset="1.000" stop-color="#d8001b"/></linearGradient>
<linearGradient id="tr150" gradientUnits="userSpaceOnUse" x1="1169" y1="0" x2="1552" y2="0"><stop offset="0.000" stop-color="#0023ff"/><stop offset="0.060" stop-color="#0519ff"/><stop offset="0.225" stop-color="#8900ff"/><stop offset="0.355" stop-color="#ff00fd"/><stop offset="0.446" stop-color="#fb00b3"/><stop offset="0.569" stop-color="#f20075"/><stop offset="0.749" stop-color="#e50042"/><stop offset="1.000" stop-color="#d8001b"/></linearGradient>
<linearGradient id="tr151" gradientUnits="userSpaceOnUse" x1="1169" y1="0" x2="1552" y2="0"><stop offset="0.000" stop-color="#0021ff"/><stop offset="0.057" stop-color="#0517ff"/><stop offset="0.214" stop-color="#8100ff"/><stop offset="0.355" stop-color="#ff00fd"/><stop offset="0.446" stop-color="#fb00b4"/><stop offset="0.569" stop-color="#f20076"/><stop offset="0.749" stop-color="#e50042"/><stop offset="1.000" stop-color="#d8001c"/></linearGradient>
<linearGradient id="tr152" gradientUnits="userSpaceOnUse" x1="1169" y1="0" x2="1552" y2="0"><stop offset="0.000" stop-color="#001eff"/><stop offset="0.057" stop-color="#0614ff"/><stop offset="0.204" stop-color="#7900ff"/><stop offset="0.355" stop-color="#ff00fd"/><stop offset="0.449" stop-color="#fb00b3"/><stop offset="0.574" stop-color="#f10075"/><stop offset="0.760" stop-color="#e50041"/><stop offset="1.000" stop-color="#d8001c"/></linearGradient>
<linearGradient id="tr153" gradientUnits="userSpaceOnUse" x1="1169" y1="0" x2="1552" y2="0"><stop offset="0.000" stop-color="#001cff"/><stop offset="0.055" stop-color="#0512ff"/><stop offset="0.196" stop-color="#7300ff"/><stop offset="0.358" stop-color="#ff00fb"/><stop offset="0.452" stop-color="#fb00b2"/><stop offset="0.577" stop-color="#f10074"/><stop offset="0.762" stop-color="#e50041"/><stop offset="1.000" stop-color="#d9001d"/></linearGradient>
<linearGradient id="tr154" gradientUnits="userSpaceOnUse" x1="1169" y1="0" x2="1552" y2="0"><stop offset="0.000" stop-color="#0019ff"/><stop offset="0.055" stop-color="#0610ff"/><stop offset="0.191" stop-color="#6f00ff"/><stop offset="0.358" stop-color="#ff00fb"/><stop offset="0.452" stop-color="#fb00b2"/><stop offset="0.577" stop-color="#f10075"/><stop offset="0.762" stop-color="#e50041"/><stop offset="1.000" stop-color="#d9001d"/></linearGradient>
<linearGradient id="tr155" gradientUnits="userSpaceOnUse" x1="1169" y1="0" x2="1552" y2="0"><stop offset="0.000" stop-color="#0017ff"/><stop offset="0.052" stop-color="#060eff"/><stop offset="0.185" stop-color="#6c00ff"/><stop offset="0.358" stop-color="#ff00fc"/><stop offset="0.452" stop-color="#fb00b3"/><stop offset="0.580" stop-color="#f10075"/><stop offset="0.768" stop-color="#e50041"/><stop offset="1.000" stop-color="#d9001e"/></linearGradient>
<linearGradient id="tr156" gradientUnits="userSpaceOnUse" x1="1169" y1="0" x2="1552" y2="0"><stop offset="0.000" stop-color="#0014ff"/><stop offset="0.050" stop-color="#050cff"/><stop offset="0.185" stop-color="#6c00ff"/><stop offset="0.358" stop-color="#ff00fc"/><stop offset="0.454" stop-color="#fb00b2"/><stop offset="0.582" stop-color="#f10074"/><stop offset="0.773" stop-color="#e50040"/><stop offset="1.000" stop-color="#d9001e"/></linearGradient>
<linearGradient id="tr157" gradientUnits="userSpaceOnUse" x1="1169" y1="0" x2="1552" y2="0"><stop offset="0.000" stop-color="#0012ff"/><stop offset="0.050" stop-color="#0609ff"/><stop offset="0.198" stop-color="#7700ff"/><stop offset="0.358" stop-color="#ff00fc"/><stop offset="0.454" stop-color="#fb00b2"/><stop offset="0.582" stop-color="#f10075"/><stop offset="0.773" stop-color="#e50041"/><stop offset="1.000" stop-color="#d9001f"/></linearGradient>
<linearGradient id="tr158" gradientUnits="userSpaceOnUse" x1="1169" y1="0" x2="1552" y2="0"><stop offset="0.000" stop-color="#0010ff"/><stop offset="0.047" stop-color="#0507ff"/><stop offset="0.222" stop-color="#8b00ff"/><stop offset="0.358" stop-color="#ff00fc"/><stop offset="0.454" stop-color="#fb00b3"/><stop offset="0.582" stop-color="#f20076"/><stop offset="0.773" stop-color="#e50042"/><stop offset="1.000" stop-color="#da001f"/></linearGradient>
<linearGradient id="tr159" gradientUnits="userSpaceOnUse" x1="1169" y1="0" x2="1552" y2="0"><stop offset="0.000" stop-color="#000dff"/><stop offset="0.047" stop-color="#0605ff"/><stop offset="0.285" stop-color="#bf00ff"/><stop offset="0.358" stop-color="#ff00fd"/><stop offset="0.454" stop-color="#fb00b3"/><stop offset="0.585" stop-color="#f20075"/><stop offset="0.775" stop-color="#e50042"/><stop offset="1.000" stop-color="#da0020"/></linearGradient>
<linearGradient id="tr160" gradientUnits="userSpaceOnUse" x1="1169" y1="0" x2="1552" y2="0"><stop offset="0.000" stop-color="#000bff"/><stop offset="0.044" stop-color="#0604ff"/><stop offset="0.282" stop-color="#bd00ff"/><stop offset="0.358" stop-color="#ff00fd"/><stop offset="0.454" stop-color="#fb00b4"/><stop offset="0.585" stop-color="#f20076"/><stop offset="0.778" stop-color="#e50042"/><stop offset="1.000" stop-color="#da0020"/></linearGradient>
<linearGradient id="tr161" gradientUnits="userSpaceOnUse" x1="1169" y1="0" x2="1552" y2="0"><stop offset="0.000" stop-color="#0009ff"/><stop offset="0.044" stop-color="#0703ff"/><stop offset="0.285" stop-color="#c000ff"/><stop offset="0.360" stop-color="#ff00fb"/><stop offset="0.460" stop-color="#fb00b1"/><stop offset="0.593" stop-color="#f10074"/><stop offset="0.789" stop-color="#e50040"/><stop offset="1.000" stop-color="#da0021"/></linearGradient>
<linearGradient id="tr162" gradientUnits="userSpaceOnUse" x1="1169" y1="0" x2="1552" y2="0"><stop offset="0.000" stop-color="#0007ff"/><stop offset="0.044" stop-color="#0802ff"/><stop offset="0.287" stop-color="#c200ff"/><stop offset="0.360" stop-color="#ff00fb"/><stop offset="0.460" stop-color="#fb00b2"/><stop offset="0.593" stop-color="#f10074"/><stop offset="0.789" stop-color="#e50041"/><stop offset="1.000" stop-color="#da0021"/></linearGradient>
<linearGradient id="tr163" gradientUnits="userSpaceOnUse" x1="1169" y1="0" x2="1552" y2="0"><stop offset="0.000" stop-color="#0005ff"/><stop offset="0.042" stop-color="#0701ff"/><stop offset="0.285" stop-color="#c000ff"/><stop offset="0.360" stop-color="#ff00fc"/><stop offset="0.460" stop-color="#fb00b2"/><stop offset="0.593" stop-color="#f10075"/><stop offset="0.789" stop-color="#e50041"/><stop offset="1.000" stop-color="#db0022"/></linearGradient>
<linearGradient id="tr164" gradientUnits="userSpaceOnUse" x1="1169" y1="0" x2="1552" y2="0"><stop offset="0.000" stop-color="#0003ff"/><stop offset="0.042" stop-color="#0801ff"/><stop offset="0.287" stop-color="#c200ff"/><stop offset="0.360" stop-color="#ff00fc"/><stop offset="0.462" stop-color="#fb00b1"/><stop offset="0.598" stop-color="#f10074"/><stop offset="0.799" stop-color="#e50040"/><stop offset="1.000" stop-color="#db0022"/></linearGradient>
<linearGradient id="tr165" gradientUnits="userSpaceOnUse" x1="1169" y1="0" x2="1552" y2="0"><stop offset="0.000" stop-color="#0002ff"/><stop offset="0.039" stop-color="#0800ff"/><stop offset="0.285" stop-color="#c000ff"/><stop offset="0.360" stop-color="#ff00fc"/><stop offset="0.462" stop-color="#fb00b2"/><stop offset="0.598" stop-color="#f10074"/><stop offset="0.799" stop-color="#e50041"/><stop offset="1.000" stop-color="#db0023"/></linearGradient>
<linearGradient id="tr166" gradientUnits="userSpaceOnUse" x1="1169" y1="0" x2="1552" y2="0"><stop offset="0.000" stop-color="#0001ff"/><stop offset="0.039" stop-color="#0900ff"/><stop offset="0.287" stop-color="#c200ff"/><stop offset="0.360" stop-color="#ff00fc"/><stop offset="0.462" stop-color="#fb00b3"/><stop offset="0.598" stop-color="#f10075"/><stop offset="0.799" stop-color="#e50041"/><stop offset="1.000" stop-color="#db0023"/></linearGradient>
<linearGradient id="tr167" gradientUnits="userSpaceOnUse" x1="1169" y1="0" x2="1552" y2="0"><stop offset="0.000" stop-color="#0001ff"/><stop offset="0.039" stop-color="#0a00ff"/><stop offset="0.287" stop-color="#c200ff"/><stop offset="0.360" stop-color="#ff00fd"/><stop offset="0.462" stop-color="#fb00b3"/><stop offset="0.598" stop-color="#f20076"/><stop offset="0.799" stop-color="#e50042"/><stop offset="1.000" stop-color="#db0024"/></linearGradient>
<linearGradient id="tr168" gradientUnits="userSpaceOnUse" x1="1169" y1="0" x2="1552" y2="0"><stop offset="0.000" stop-color="#0000ff"/><stop offset="0.037" stop-color="#0900ff"/><stop offset="0.287" stop-color="#c300ff"/><stop offset="0.363" stop-color="#ff00fb"/><stop offset="0.467" stop-color="#fb00b1"/><stop offset="0.606" stop-color="#f10074"/><stop offset="0.812" stop-color="#e50040"/><stop offset="1.000" stop-color="#db0024"/></linearGradient>
<linearGradient id="tr169" gradientUnits="userSpaceOnUse" x1="1169" y1="0" x2="1552" y2="0"><stop offset="0.000" stop-color="#0000ff"/><stop offset="0.037" stop-color="#0a00ff"/><stop offset="0.287" stop-color="#c300ff"/><stop offset="0.363" stop-color="#ff00fb"/><stop offset="0.467" stop-color="#fb00b1"/><stop offset="0.606" stop-color="#f10074"/><stop offset="0.812" stop-color="#e50040"/><stop offset="1.000" stop-color="#dc0025"/></linearGradient>
<linearGradient id="tr170" gradientUnits="userSpaceOnUse" x1="1169" y1="0" x2="1552" y2="0"><stop offset="0.000" stop-color="#0000ff"/><stop offset="0.037" stop-color="#0b00ff"/><stop offset="0.287" stop-color="#c300ff"/><stop offset="0.363" stop-color="#ff00fb"/><stop offset="0.467" stop-color="#fb00b2"/><stop offset="0.608" stop-color="#f10074"/><stop offset="0.815" stop-color="#e50040"/><stop offset="1.000" stop-color="#dc0025"/></linearGradient>
<linearGradient id="insL" x1="0" y1="0" x2="0" y2="1"><stop offset="0" stop-color="#007096"/><stop offset="1" stop-color="#004a8a"/></linearGradient>
<linearGradient id="insR" x1="0" y1="0" x2="0.3" y2="1"><stop offset="0" stop-color="#10baff"/><stop offset="1" stop-color="#1a7cff"/></linearGradient>
<linearGradient id="btn" x1="0" y1="0" x2="0" y2="1"><stop offset="0" stop-color="#b4b4b4"/><stop offset="0.06" stop-color="#a2a2a2"/><stop offset="0.45" stop-color="#8e8e8e"/><stop offset="1" stop-color="#6a6a6a"/></linearGradient>
<linearGradient id="btnsel" x1="0" y1="0" x2="0" y2="1"><stop offset="0" stop-color="#6a6a6a"/><stop offset="0.06" stop-color="#5a5a5a"/><stop offset="1" stop-color="#3c3c3c"/></linearGradient>
<linearGradient id="btndk" x1="0" y1="0" x2="0" y2="1"><stop offset="0" stop-color="#4a4a4a"/><stop offset="1" stop-color="#303030"/></linearGradient>
<linearGradient id="circ" x1="0" y1="0" x2="0" y2="1"><stop offset="0" stop-color="#828282"/><stop offset="1" stop-color="#adadad"/></linearGradient>
<linearGradient id="circdk" x1="0" y1="0" x2="0" y2="1"><stop offset="0" stop-color="#2a2a2a"/><stop offset="1" stop-color="#3c3c3c"/></linearGradient>
</defs>
<rect x="0" y="0" width="1717" height="950" fill="#333333"/>
<text x="24.0" y="63.2" font-size="40" fill="#f0ede6" stroke="#f0ede6" stroke-width="0.6" textLength="242.0" lengthAdjust="spacingAndGlyphs">ColorChecker</text>
<text x="89.0" y="123.8" font-size="30" fill="#f0ede6" stroke="#f0ede6" stroke-width="0.5" textLength="242.0" lengthAdjust="spacingAndGlyphs">Avg dE2000: 2,99</text>
<text x="86.0" y="168.0" font-size="30" fill="#f0ede6" stroke="#f0ede6" stroke-width="0.5" textLength="248.0" lengthAdjust="spacingAndGlyphs">Max dE2000: 8,47</text>
<text x="203.5" y="207.0" font-size="15" fill="#d2d2d2" text-anchor="middle" textLength="80.0" lengthAdjust="spacingAndGlyphs">DeltaE 2000</text>
<rect x="20.4" y="211.5" width="366.1" height="391.5" fill="#232323"/>
<line x1="69.1" y1="211.5" x2="69.1" y2="603.0" stroke="#8e8e8e" stroke-width="1.6"/>
<line x1="117.8" y1="211.5" x2="117.8" y2="603.0" stroke="#8e8e8e" stroke-width="1.6"/>
<line x1="166.6" y1="211.5" x2="166.6" y2="603.0" stroke="#8e8e8e" stroke-width="1.6"/>
<line x1="215.3" y1="211.5" x2="215.3" y2="603.0" stroke="#8e8e8e" stroke-width="1.6"/>
<line x1="264.0" y1="211.5" x2="264.0" y2="603.0" stroke="#8e8e8e" stroke-width="1.6"/>
<line x1="312.7" y1="211.5" x2="312.7" y2="603.0" stroke="#8e8e8e" stroke-width="1.6"/>
<line x1="361.4" y1="211.5" x2="361.4" y2="603.0" stroke="#8e8e8e" stroke-width="1.6"/>
<rect x="21.0" y="587.8" width="34.8" height="13.4" fill="#050505"/>
<rect x="21.0" y="589.0" width="32.8" height="11" fill="url(#deb0)"/>
<rect x="21.0" y="589.0" width="32.8" height="11" fill="url(#barhl)"/>
<rect x="21.0" y="571.5" width="17.5" height="13.4" fill="#050505"/>
<rect x="21.0" y="572.7" width="15.5" height="11" fill="url(#deb1)"/>
<rect x="21.0" y="572.7" width="15.5" height="11" fill="url(#barhl)"/>
<rect x="21.0" y="555.2" width="13.9" height="13.4" fill="#050505"/>
<rect x="21.0" y="556.4" width="11.9" height="11" fill="url(#deb2)"/>
<rect x="21.0" y="556.4" width="11.9" height="11" fill="url(#barhl)"/>
<rect x="21.0" y="538.9" width="21.9" height="13.4" fill="#050505"/>
<rect x="21.0" y="540.1" width="19.9" height="11" fill="url(#deb3)"/>
<rect x="21.0" y="540.1" width="19.9" height="11" fill="url(#barhl)"/>
<rect x="21.0" y="522.6" width="17.5" height="13.4" fill="#050505"/>
<rect x="21.0" y="523.8" width="15.5" height="11" fill="url(#deb4)"/>
<rect x="21.0" y="523.8" width="15.5" height="11" fill="url(#barhl)"/>
<rect x="21.0" y="506.2" width="4.6" height="13.4" fill="#050505"/>
<rect x="21.0" y="507.4" width="2.6" height="11" fill="url(#deb5)"/>
<rect x="21.0" y="507.4" width="2.6" height="11" fill="url(#barhl)"/>
<rect x="21.0" y="489.9" width="76.0" height="13.4" fill="#050505"/>
<rect x="21.0" y="491.1" width="74.0" height="11" fill="url(#deb6)"/>
<rect x="21.0" y="491.1" width="74.0" height="11" fill="url(#barhl)"/>
<rect x="21.0" y="473.6" width="91.6" height="13.4" fill="#050505"/>
<rect x="21.0" y="474.8" width="89.6" height="11" fill="url(#deb7)"/>
<rect x="21.0" y="474.8" width="89.6" height="11" fill="url(#barhl)"/>
<rect x="21.0" y="457.3" width="99.4" height="13.4" fill="#050505"/>
<rect x="21.0" y="458.5" width="97.4" height="11" fill="url(#deb8)"/>
<rect x="21.0" y="458.5" width="97.4" height="11" fill="url(#barhl)"/>
<rect x="21.0" y="441.0" width="45.3" height="13.4" fill="#050505"/>
<rect x="21.0" y="442.2" width="43.3" height="11" fill="url(#deb9)"/>
<rect x="21.0" y="442.2" width="43.3" height="11" fill="url(#barhl)"/>
<rect x="21.0" y="424.7" width="50.2" height="13.4" fill="#050505"/>
<rect x="21.0" y="425.9" width="48.2" height="11" fill="url(#deb10)"/>
<rect x="21.0" y="425.9" width="48.2" height="11" fill="url(#barhl)"/>
<rect x="21.0" y="408.4" width="62.3" height="13.4" fill="#050505"/>
<rect x="21.0" y="409.6" width="60.3" height="11" fill="url(#deb11)"/>
<rect x="21.0" y="409.6" width="60.3" height="11" fill="url(#barhl)"/>
<rect x="21.0" y="392.1" width="207.5" height="13.4" fill="#050505"/>
<rect x="21.0" y="393.3" width="205.5" height="11" fill="url(#deb12)"/>
<rect x="21.0" y="393.3" width="205.5" height="11" fill="url(#barhl)"/>
<rect x="21.0" y="375.8" width="96.0" height="13.4" fill="#050505"/>
<rect x="21.0" y="377.0" width="94.0" height="11" fill="url(#deb13)"/>
<rect x="21.0" y="377.0" width="94.0" height="11" fill="url(#barhl)"/>
<rect x="21.0" y="359.5" width="52.4" height="13.4" fill="#050505"/>
<rect x="21.0" y="360.7" width="50.4" height="11" fill="url(#deb14)"/>
<rect x="21.0" y="360.7" width="50.4" height="11" fill="url(#barhl)"/>
<rect x="21.0" y="343.2" width="44.3" height="13.4" fill="#050505"/>
<rect x="21.0" y="344.4" width="42.3" height="11" fill="url(#deb15)"/>
<rect x="21.0" y="344.4" width="42.3" height="11" fill="url(#barhl)"/>
<rect x="21.0" y="326.8" width="87.4" height="13.4" fill="#050505"/>
<rect x="21.0" y="328.0" width="85.4" height="11" fill="url(#deb16)"/>
<rect x="21.0" y="328.0" width="85.4" height="11" fill="url(#barhl)"/>
<rect x="21.0" y="310.5" width="183.7" height="13.4" fill="#050505"/>
<rect x="21.0" y="311.7" width="181.7" height="11" fill="url(#deb17)"/>
<rect x="21.0" y="311.7" width="181.7" height="11" fill="url(#barhl)"/>
<rect x="21.0" y="294.2" width="95.0" height="13.4" fill="#050505"/>
<rect x="21.0" y="295.4" width="93.0" height="11" fill="url(#deb18)"/>
<rect x="21.0" y="295.4" width="93.0" height="11" fill="url(#barhl)"/>
<rect x="21.0" y="277.9" width="84.8" height="13.4" fill="#050505"/>
<rect x="21.0" y="279.1" width="82.8" height="11" fill="url(#deb19)"/>
<rect x="21.0" y="279.1" width="82.8" height="11" fill="url(#barhl)"/>
<rect x="21.0" y="261.6" width="66.2" height="13.4" fill="#050505"/>
<rect x="21.0" y="262.8" width="64.2" height="11" fill="url(#deb20)"/>
<rect x="21.0" y="262.8" width="64.2" height="11" fill="url(#barhl)"/>
<rect x="21.0" y="245.3" width="140.1" height="13.4" fill="#050505"/>
<rect x="21.0" y="246.5" width="138.1" height="11" fill="url(#deb21)"/>
<rect x="21.0" y="246.5" width="138.1" height="11" fill="url(#barhl)"/>
<rect x="21.0" y="229.0" width="61.4" height="13.4" fill="#050505"/>
<rect x="21.0" y="230.2" width="59.4" height="11" fill="url(#deb22)"/>
<rect x="21.0" y="230.2" width="59.4" height="11" fill="url(#barhl)"/>
<rect x="21.0" y="212.7" width="121.1" height="13.4" fill="#050505"/>
<rect x="21.0" y="213.9" width="119.1" height="11" fill="url(#deb23)"/>
<rect x="21.0" y="213.9" width="119.1" height="11" fill="url(#barhl)"/>
<line x1="93.5" y1="211.5" x2="93.5" y2="603.0" stroke="#1a801a" stroke-width="2" stroke-opacity="0.9"/>
<line x1="142.2" y1="211.5" x2="142.2" y2="603.0" stroke="#e8e030" stroke-width="2" stroke-opacity="0.9"/>
<line x1="264.0" y1="211.5" x2="264.0" y2="603.0" stroke="#b82222" stroke-width="2" stroke-opacity="0.9"/>
<rect x="20.4" y="211.5" width="366.1" height="391.5" fill="none" stroke="#a6a6a6" stroke-width="1.6"/>
<line x1="20.4" y1="603.0" x2="20.4" y2="609.0" stroke="#e0e0e0" stroke-width="1.6"/>
<text x="20.4" y="626.0" font-size="16" fill="#d8d8d8" text-anchor="middle">0</text>
<line x1="69.1" y1="603.0" x2="69.1" y2="609.0" stroke="#e0e0e0" stroke-width="1.6"/>
<text x="69.1" y="626.0" font-size="16" fill="#d8d8d8" text-anchor="middle">2</text>
<line x1="117.8" y1="603.0" x2="117.8" y2="609.0" stroke="#e0e0e0" stroke-width="1.6"/>
<text x="117.8" y="626.0" font-size="16" fill="#d8d8d8" text-anchor="middle">4</text>
<line x1="166.6" y1="603.0" x2="166.6" y2="609.0" stroke="#e0e0e0" stroke-width="1.6"/>
<text x="166.6" y="626.0" font-size="16" fill="#d8d8d8" text-anchor="middle">6</text>
<line x1="215.3" y1="603.0" x2="215.3" y2="609.0" stroke="#e0e0e0" stroke-width="1.6"/>
<text x="215.3" y="626.0" font-size="16" fill="#d8d8d8" text-anchor="middle">8</text>
<line x1="264.0" y1="603.0" x2="264.0" y2="609.0" stroke="#e0e0e0" stroke-width="1.6"/>
<text x="264.0" y="626.0" font-size="16" fill="#d8d8d8" text-anchor="middle">10</text>
<line x1="312.7" y1="603.0" x2="312.7" y2="609.0" stroke="#e0e0e0" stroke-width="1.6"/>
<text x="312.7" y="626.0" font-size="16" fill="#d8d8d8" text-anchor="middle">12</text>
<line x1="361.4" y1="603.0" x2="361.4" y2="609.0" stroke="#e0e0e0" stroke-width="1.6"/>
<text x="361.4" y="626.0" font-size="16" fill="#d8d8d8" text-anchor="middle">14</text>
<text x="498.2" y="43.9" font-size="15" fill="#d2d2d2" text-anchor="middle">DeltaL</text>
<rect x="432.6" y="48.9" width="149.7" height="365.7" fill="#232323"/>
<line x1="432.6" y1="414.6" x2="582.3" y2="414.6" stroke="#8c8c8c" stroke-width="1.6"/>
<line x1="426.1" y1="414.6" x2="432.6" y2="414.6" stroke="#dcdcdc" stroke-width="1.6"/>
<text x="426.8" y="421.4" font-size="16.5" fill="#d8d8d8" stroke="#d8d8d8" stroke-width="0.25" text-anchor="end">-4</text>
<line x1="432.6" y1="368.9" x2="582.3" y2="368.9" stroke="#8c8c8c" stroke-width="1.6"/>
<line x1="426.1" y1="368.9" x2="432.6" y2="368.9" stroke="#dcdcdc" stroke-width="1.6"/>
<text x="426.8" y="375.7" font-size="16.5" fill="#d8d8d8" stroke="#d8d8d8" stroke-width="0.25" text-anchor="end">-3</text>
<line x1="432.6" y1="323.2" x2="582.3" y2="323.2" stroke="#8c8c8c" stroke-width="1.6"/>
<line x1="426.1" y1="323.2" x2="432.6" y2="323.2" stroke="#dcdcdc" stroke-width="1.6"/>
<text x="426.8" y="330.0" font-size="16.5" fill="#d8d8d8" stroke="#d8d8d8" stroke-width="0.25" text-anchor="end">-2</text>
<line x1="432.6" y1="277.5" x2="582.3" y2="277.5" stroke="#8c8c8c" stroke-width="1.6"/>
<line x1="426.1" y1="277.5" x2="432.6" y2="277.5" stroke="#dcdcdc" stroke-width="1.6"/>
<text x="426.8" y="284.3" font-size="16.5" fill="#d8d8d8" stroke="#d8d8d8" stroke-width="0.25" text-anchor="end">-1</text>
<line x1="432.6" y1="231.8" x2="582.3" y2="231.8" stroke="#8c8c8c" stroke-width="1.6"/>
<line x1="426.1" y1="231.8" x2="432.6" y2="231.8" stroke="#dcdcdc" stroke-width="1.6"/>
<text x="426.8" y="238.6" font-size="16.5" fill="#d8d8d8" stroke="#d8d8d8" stroke-width="0.25" text-anchor="end">0</text>
<line x1="432.6" y1="186.0" x2="582.3" y2="186.0" stroke="#8c8c8c" stroke-width="1.6"/>
<line x1="426.1" y1="186.0" x2="432.6" y2="186.0" stroke="#dcdcdc" stroke-width="1.6"/>
<text x="426.8" y="192.8" font-size="16.5" fill="#d8d8d8" stroke="#d8d8d8" stroke-width="0.25" text-anchor="end">1</text>
<line x1="432.6" y1="140.3" x2="582.3" y2="140.3" stroke="#8c8c8c" stroke-width="1.6"/>
<line x1="426.1" y1="140.3" x2="432.6" y2="140.3" stroke="#dcdcdc" stroke-width="1.6"/>
<text x="426.8" y="147.1" font-size="16.5" fill="#d8d8d8" stroke="#d8d8d8" stroke-width="0.25" text-anchor="end">2</text>
<line x1="432.6" y1="94.6" x2="582.3" y2="94.6" stroke="#8c8c8c" stroke-width="1.6"/>
<line x1="426.1" y1="94.6" x2="432.6" y2="94.6" stroke="#dcdcdc" stroke-width="1.6"/>
<text x="426.8" y="101.4" font-size="16.5" fill="#d8d8d8" stroke="#d8d8d8" stroke-width="0.25" text-anchor="end">3</text>
<line x1="432.6" y1="48.9" x2="582.3" y2="48.9" stroke="#8c8c8c" stroke-width="1.6"/>
<line x1="426.1" y1="48.9" x2="432.6" y2="48.9" stroke="#dcdcdc" stroke-width="1.6"/>
<text x="426.8" y="55.7" font-size="16.5" fill="#d8d8d8" stroke="#d8d8d8" stroke-width="0.25" text-anchor="end">4</text>
<rect x="447.5" y="197.5" width="120.0" height="34.3" fill="#000"/>
<rect x="449.1" y="199.1" width="116.8" height="31.1" fill="url(#lchbar)"/>
<line x1="432.6" y1="94.6" x2="582.3" y2="94.6" stroke="#2a702a" stroke-width="2.2"/>
<line x1="432.6" y1="368.9" x2="582.3" y2="368.9" stroke="#2a702a" stroke-width="2.2"/>
<rect x="432.6" y="48.9" width="149.7" height="365.7" fill="none" stroke="#a4a4a4" stroke-width="1.6"/>
<text x="694.2" y="43.9" font-size="15" fill="#d2d2d2" text-anchor="middle">DeltaC</text>
<rect x="628.8" y="48.9" width="150.3" height="365.7" fill="#232323"/>
<line x1="628.8" y1="414.6" x2="779.1" y2="414.6" stroke="#8c8c8c" stroke-width="1.6"/>
<line x1="622.3" y1="414.6" x2="628.8" y2="414.6" stroke="#dcdcdc" stroke-width="1.6"/>
<text x="623.0" y="421.4" font-size="16.5" fill="#d8d8d8" stroke="#d8d8d8" stroke-width="0.25" text-anchor="end">-4</text>
<line x1="628.8" y1="368.9" x2="779.1" y2="368.9" stroke="#8c8c8c" stroke-width="1.6"/>
<line x1="622.3" y1="368.9" x2="628.8" y2="368.9" stroke="#dcdcdc" stroke-width="1.6"/>
<text x="623.0" y="375.7" font-size="16.5" fill="#d8d8d8" stroke="#d8d8d8" stroke-width="0.25" text-anchor="end">-3</text>
<line x1="628.8" y1="323.2" x2="779.1" y2="323.2" stroke="#8c8c8c" stroke-width="1.6"/>
<line x1="622.3" y1="323.2" x2="628.8" y2="323.2" stroke="#dcdcdc" stroke-width="1.6"/>
<text x="623.0" y="330.0" font-size="16.5" fill="#d8d8d8" stroke="#d8d8d8" stroke-width="0.25" text-anchor="end">-2</text>
<line x1="628.8" y1="277.5" x2="779.1" y2="277.5" stroke="#8c8c8c" stroke-width="1.6"/>
<line x1="622.3" y1="277.5" x2="628.8" y2="277.5" stroke="#dcdcdc" stroke-width="1.6"/>
<text x="623.0" y="284.3" font-size="16.5" fill="#d8d8d8" stroke="#d8d8d8" stroke-width="0.25" text-anchor="end">-1</text>
<line x1="628.8" y1="231.8" x2="779.1" y2="231.8" stroke="#8c8c8c" stroke-width="1.6"/>
<line x1="622.3" y1="231.8" x2="628.8" y2="231.8" stroke="#dcdcdc" stroke-width="1.6"/>
<text x="623.0" y="238.6" font-size="16.5" fill="#d8d8d8" stroke="#d8d8d8" stroke-width="0.25" text-anchor="end">0</text>
<line x1="628.8" y1="186.0" x2="779.1" y2="186.0" stroke="#8c8c8c" stroke-width="1.6"/>
<line x1="622.3" y1="186.0" x2="628.8" y2="186.0" stroke="#dcdcdc" stroke-width="1.6"/>
<text x="623.0" y="192.8" font-size="16.5" fill="#d8d8d8" stroke="#d8d8d8" stroke-width="0.25" text-anchor="end">1</text>
<line x1="628.8" y1="140.3" x2="779.1" y2="140.3" stroke="#8c8c8c" stroke-width="1.6"/>
<line x1="622.3" y1="140.3" x2="628.8" y2="140.3" stroke="#dcdcdc" stroke-width="1.6"/>
<text x="623.0" y="147.1" font-size="16.5" fill="#d8d8d8" stroke="#d8d8d8" stroke-width="0.25" text-anchor="end">2</text>
<line x1="628.8" y1="94.6" x2="779.1" y2="94.6" stroke="#8c8c8c" stroke-width="1.6"/>
<line x1="622.3" y1="94.6" x2="628.8" y2="94.6" stroke="#dcdcdc" stroke-width="1.6"/>
<text x="623.0" y="101.4" font-size="16.5" fill="#d8d8d8" stroke="#d8d8d8" stroke-width="0.25" text-anchor="end">3</text>
<line x1="628.8" y1="48.9" x2="779.1" y2="48.9" stroke="#8c8c8c" stroke-width="1.6"/>
<line x1="622.3" y1="48.9" x2="628.8" y2="48.9" stroke="#dcdcdc" stroke-width="1.6"/>
<text x="623.0" y="55.7" font-size="16.5" fill="#d8d8d8" stroke="#d8d8d8" stroke-width="0.25" text-anchor="end">4</text>
<rect x="644" y="231.8" width="119.6" height="122.5" fill="#000"/>
<rect x="645.6" y="233.4" width="116.4" height="119.3" fill="url(#lchbar)"/>
<line x1="628.8" y1="94.6" x2="779.1" y2="94.6" stroke="#2a702a" stroke-width="2.2"/>
<line x1="628.8" y1="368.9" x2="779.1" y2="368.9" stroke="#2a702a" stroke-width="2.2"/>
<rect x="628.8" y="48.9" width="150.3" height="365.7" fill="none" stroke="#a4a4a4" stroke-width="1.6"/>
<text x="897.6" y="43.9" font-size="15" fill="#d2d2d2" text-anchor="middle">DeltaH</text>
<rect x="824.4" y="48.9" width="165.0" height="365.7" fill="#232323"/>
<line x1="824.4" y1="414.6" x2="989.4" y2="414.6" stroke="#8c8c8c" stroke-width="1.6"/>
<line x1="817.9" y1="414.6" x2="824.4" y2="414.6" stroke="#dcdcdc" stroke-width="1.6"/>
<text x="818.6" y="421.4" font-size="16.5" fill="#d8d8d8" stroke="#d8d8d8" stroke-width="0.25" text-anchor="end">-8</text>
<line x1="824.4" y1="368.9" x2="989.4" y2="368.9" stroke="#8c8c8c" stroke-width="1.6"/>
<line x1="817.9" y1="368.9" x2="824.4" y2="368.9" stroke="#dcdcdc" stroke-width="1.6"/>
<text x="818.6" y="375.7" font-size="16.5" fill="#d8d8d8" stroke="#d8d8d8" stroke-width="0.25" text-anchor="end">-6</text>
<line x1="824.4" y1="323.2" x2="989.4" y2="323.2" stroke="#8c8c8c" stroke-width="1.6"/>
<line x1="817.9" y1="323.2" x2="824.4" y2="323.2" stroke="#dcdcdc" stroke-width="1.6"/>
<text x="818.6" y="330.0" font-size="16.5" fill="#d8d8d8" stroke="#d8d8d8" stroke-width="0.25" text-anchor="end">-4</text>
<line x1="824.4" y1="277.5" x2="989.4" y2="277.5" stroke="#8c8c8c" stroke-width="1.6"/>
<line x1="817.9" y1="277.5" x2="824.4" y2="277.5" stroke="#dcdcdc" stroke-width="1.6"/>
<text x="818.6" y="284.3" font-size="16.5" fill="#d8d8d8" stroke="#d8d8d8" stroke-width="0.25" text-anchor="end">-2</text>
<line x1="824.4" y1="231.8" x2="989.4" y2="231.8" stroke="#8c8c8c" stroke-width="1.6"/>
<line x1="817.9" y1="231.8" x2="824.4" y2="231.8" stroke="#dcdcdc" stroke-width="1.6"/>
<text x="818.6" y="238.6" font-size="16.5" fill="#d8d8d8" stroke="#d8d8d8" stroke-width="0.25" text-anchor="end">0</text>
<line x1="824.4" y1="186.0" x2="989.4" y2="186.0" stroke="#8c8c8c" stroke-width="1.6"/>
<line x1="817.9" y1="186.0" x2="824.4" y2="186.0" stroke="#dcdcdc" stroke-width="1.6"/>
<text x="818.6" y="192.8" font-size="16.5" fill="#d8d8d8" stroke="#d8d8d8" stroke-width="0.25" text-anchor="end">2</text>
<line x1="824.4" y1="140.3" x2="989.4" y2="140.3" stroke="#8c8c8c" stroke-width="1.6"/>
<line x1="817.9" y1="140.3" x2="824.4" y2="140.3" stroke="#dcdcdc" stroke-width="1.6"/>
<text x="818.6" y="147.1" font-size="16.5" fill="#d8d8d8" stroke="#d8d8d8" stroke-width="0.25" text-anchor="end">4</text>
<line x1="824.4" y1="94.6" x2="989.4" y2="94.6" stroke="#8c8c8c" stroke-width="1.6"/>
<line x1="817.9" y1="94.6" x2="824.4" y2="94.6" stroke="#dcdcdc" stroke-width="1.6"/>
<text x="818.6" y="101.4" font-size="16.5" fill="#d8d8d8" stroke="#d8d8d8" stroke-width="0.25" text-anchor="end">6</text>
<line x1="824.4" y1="48.9" x2="989.4" y2="48.9" stroke="#8c8c8c" stroke-width="1.6"/>
<line x1="817.9" y1="48.9" x2="824.4" y2="48.9" stroke="#dcdcdc" stroke-width="1.6"/>
<text x="818.6" y="55.7" font-size="16.5" fill="#d8d8d8" stroke="#d8d8d8" stroke-width="0.25" text-anchor="end">8</text>
<rect x="841.7" y="55.5" width="130.8" height="176.2" fill="#000"/>
<rect x="843.3000000000001" y="57.1" width="127.6" height="173.0" fill="url(#lchbar)"/>
<line x1="824.4" y1="117.5" x2="989.4" y2="117.5" stroke="#d8d030" stroke-width="2.2"/>
<line x1="841.7" y1="117.5" x2="972.5" y2="117.5" stroke="#a0ff9a" stroke-width="2.2" stroke-opacity="0.75"/>
<line x1="824.4" y1="163.2" x2="989.4" y2="163.2" stroke="#2a702a" stroke-width="2.2"/>
<line x1="841.7" y1="163.2" x2="972.5" y2="163.2" stroke="#1a7040" stroke-width="2.2" stroke-opacity="0.75"/>
<line x1="824.4" y1="300.3" x2="989.4" y2="300.3" stroke="#2a702a" stroke-width="2.2"/>
<line x1="824.4" y1="346.0" x2="989.4" y2="346.0" stroke="#d8d030" stroke-width="2.2"/>
<rect x="824.4" y="48.9" width="165.0" height="365.7" fill="none" stroke="#a4a4a4" stroke-width="1.6"/>
<rect x="414.1" y="421.9" width="589.2" height="195.9" fill="#000"/>
<clipPath id="spclip"><rect x="414.1" y="421.9" width="589.2" height="195.9"/></clipPath>
<g clip-path="url(#spclip)">
<rect x="433.0" y="430.9" width="58.1" height="64.1" fill="#05050a" stroke="#ffffff" stroke-width="1.7"/>
<rect x="433.0" y="513.9" width="58.1" height="64.3" fill="#000000" stroke="#ffffff" stroke-width="1.7"/>
<text x="462.1" y="594.4" font-size="12.5" fill="#f2f2f2" stroke="#f2f2f2" stroke-width="0.3" text-anchor="middle">Black</text>
<rect x="503.1" y="430.9" width="58.1" height="64.1" fill="#a2a2a2" stroke="#ffffff" stroke-width="1.7"/>
<rect x="503.1" y="513.9" width="58.1" height="64.3" fill="#a0a0a0" stroke="#ffffff" stroke-width="1.7"/>
<text x="532.1" y="594.4" font-size="12.5" fill="#f2f2f2" stroke="#f2f2f2" stroke-width="0.3" text-anchor="middle">Gray 35</text>
<rect x="573.1" y="430.9" width="58.1" height="64.1" fill="#bdbdbd" stroke="#ffffff" stroke-width="1.7"/>
<rect x="573.1" y="513.9" width="58.1" height="64.3" fill="#bcbcbc" stroke="#ffffff" stroke-width="1.7"/>
<text x="602.2" y="594.4" font-size="12.5" fill="#f2f2f2" stroke="#f2f2f2" stroke-width="0.3" text-anchor="middle">Gray 50</text>
<rect x="643.2" y="430.9" width="58.1" height="64.1" fill="#d3d3d5" stroke="#ffffff" stroke-width="1.7"/>
<rect x="643.2" y="513.9" width="58.1" height="64.3" fill="#d1d1d1" stroke="#ffffff" stroke-width="1.7"/>
<text x="672.3" y="594.4" font-size="12.5" fill="#f2f2f2" stroke="#f2f2f2" stroke-width="0.3" text-anchor="middle">Gray 65</text>
<rect x="713.3" y="430.9" width="58.1" height="64.1" fill="#e6e6e8" stroke="#ffffff" stroke-width="1.7"/>
<rect x="713.3" y="513.9" width="58.1" height="64.3" fill="#e4e4e4" stroke="#ffffff" stroke-width="1.7"/>
<text x="742.3" y="594.4" font-size="12.5" fill="#f2f2f2" stroke="#f2f2f2" stroke-width="0.3" text-anchor="middle">Gray 80</text>
<rect x="783.3" y="430.9" width="58.1" height="64.1" fill="#ffffff" stroke="#ffffff" stroke-width="1.7"/>
<rect x="783.3" y="513.9" width="58.1" height="64.3" fill="#ffffff" stroke="#ffffff" stroke-width="1.7"/>
<text x="812.4" y="594.4" font-size="12.5" fill="#f2f2f2" stroke="#f2f2f2" stroke-width="0.3" text-anchor="middle">White</text>
<rect x="853.4" y="430.9" width="58.1" height="64.1" fill="#775a47" stroke="#ffffff" stroke-width="1.7"/>
<rect x="853.4" y="513.9" width="58.1" height="64.3" fill="#775849" stroke="#ffffff" stroke-width="1.7"/>
<text x="882.5" y="594.4" font-size="12.5" fill="#f2f2f2" stroke="#f2f2f2" stroke-width="0.3" text-anchor="middle">Dark Skin</text>
<rect x="923.5" y="430.9" width="58.1" height="64.1" fill="#c09a82" stroke="#ffffff" stroke-width="1.7"/>
<rect x="923.5" y="513.9" width="58.1" height="64.3" fill="#c39685" stroke="#ffffff" stroke-width="1.7"/>
<text x="952.5" y="594.4" font-size="12.5" fill="#f2f2f2" stroke="#f2f2f2" stroke-width="0.3" text-anchor="middle">Light Skin</text>
<rect x="993.6" y="430.9" width="58.1" height="64.1" fill="#6580a8" stroke="#ffffff" stroke-width="1.7"/>
<rect x="993.6" y="513.9" width="58.1" height="64.3" fill="#6581a9" stroke="#ffffff" stroke-width="1.7"/>
<text x="1022.6" y="594.4" font-size="12.5" fill="#f2f2f2" stroke="#f2f2f2" stroke-width="0.3" text-anchor="middle">Blue Sky</text>
</g>
<text x="0" y="0" font-size="12.5" fill="#f2f2f2" stroke="#f2f2f2" stroke-width="0.3" text-anchor="middle" transform="translate(426.6,462.9) rotate(-90)">Actual</text>
<text x="0" y="0" font-size="12.5" fill="#f2f2f2" stroke="#f2f2f2" stroke-width="0.3" text-anchor="middle" transform="translate(426.6,545.9) rotate(-90)">Target</text>
<rect x="414.1" y="617.8" width="589.2" height="18.7" fill="#5b5b5b"/>
<rect x="432" y="620.5" width="189" height="14.5" rx="7" fill="#474747"/>
<rect x="415.5" y="620.8" width="14" height="14.5" rx="2" fill="#8d8d8d"/>
<path d="M425.5,623.5 L419.5,628 L425.5,632.5 Z" fill="#3c3c3c"/>
<rect x="987.5" y="620.8" width="14" height="14.5" rx="2" fill="#8d8d8d"/>
<path d="M991.5,623.5 L997.5,628 L991.5,632.5 Z" fill="#3c3c3c"/>
<rect x="1017" y="22.3" width="700" height="599.9" fill="#000"/>
<rect x="1024.2" y="29.8" width="686.8" height="585.2" fill="#333333"/>
<text x="1367.3" y="49.2" font-size="14" fill="#d2d2d2" text-anchor="middle">CIE 1931 xy</text>
<rect x="1053.7" y="54.7" width="653.7" height="528.7" fill="#242424"/>
<g clip-path="url(#hsclip)" shape-rendering="crispEdges">
<rect x="1054" y="66" width="562" height="3" fill="url(#ho0)"/>
<rect x="1054" y="69" width="562" height="3" fill="url(#ho1)"/>
<rect x="1054" y="72" width="562" height="3" fill="url(#ho2)"/>
<rect x="1054" y="75" width="562" height="3" fill="url(#ho3)"/>
<rect x="1054" y="78" width="562" height="3" fill="url(#ho4)"/>
<rect x="1054" y="81" width="562" height="3" fill="url(#ho5)"/>
<rect x="1054" y="84" width="562" height="3" fill="url(#ho6)"/>
<rect x="1054" y="87" width="562" height="3" fill="url(#ho7)"/>
<rect x="1054" y="90" width="562" height="3" fill="url(#ho8)"/>
<rect x="1054" y="93" width="562" height="3" fill="url(#ho9)"/>
<rect x="1054" y="96" width="562" height="3" fill="url(#ho10)"/>
<rect x="1054" y="99" width="562" height="3" fill="url(#ho11)"/>
<rect x="1054" y="102" width="562" height="3" fill="url(#ho12)"/>
<rect x="1054" y="105" width="562" height="3" fill="url(#ho13)"/>
<rect x="1054" y="108" width="562" height="3" fill="url(#ho14)"/>
<rect x="1054" y="111" width="562" height="3" fill="url(#ho15)"/>
<rect x="1054" y="114" width="562" height="3" fill="url(#ho16)"/>
<rect x="1054" y="117" width="562" height="3" fill="url(#ho17)"/>
<rect x="1054" y="120" width="562" height="3" fill="url(#ho18)"/>
<rect x="1054" y="123" width="562" height="3" fill="url(#ho19)"/>
<rect x="1054" y="126" width="562" height="3" fill="url(#ho20)"/>
<rect x="1054" y="129" width="562" height="3" fill="url(#ho21)"/>
<rect x="1054" y="132" width="562" height="3" fill="url(#ho22)"/>
<rect x="1054" y="135" width="562" height="3" fill="url(#ho23)"/>
<rect x="1054" y="138" width="562" height="3" fill="url(#ho24)"/>
<rect x="1054" y="141" width="562" height="3" fill="url(#ho25)"/>
<rect x="1054" y="144" width="562" height="3" fill="url(#ho26)"/>
<rect x="1054" y="147" width="562" height="3" fill="url(#ho27)"/>
<rect x="1054" y="150" width="562" height="3" fill="url(#ho28)"/>
<rect x="1054" y="153" width="562" height="3" fill="url(#ho29)"/>
<rect x="1054" y="156" width="562" height="3" fill="url(#ho30)"/>
<rect x="1054" y="159" width="562" height="3" fill="url(#ho31)"/>
<rect x="1054" y="162" width="562" height="3" fill="url(#ho32)"/>
<rect x="1054" y="165" width="562" height="3" fill="url(#ho33)"/>
<rect x="1054" y="168" width="562" height="3" fill="url(#ho34)"/>
<rect x="1054" y="171" width="562" height="3" fill="url(#ho35)"/>
<rect x="1054" y="174" width="562" height="3" fill="url(#ho36)"/>
<rect x="1054" y="177" width="562" height="3" fill="url(#ho37)"/>
<rect x="1054" y="180" width="562" height="3" fill="url(#ho38)"/>
<rect x="1054" y="183" width="562" height="3" fill="url(#ho39)"/>
<rect x="1054" y="186" width="562" height="3" fill="url(#ho40)"/>
<rect x="1054" y="189" width="562" height="3" fill="url(#ho41)"/>
<rect x="1054" y="192" width="562" height="3" fill="url(#ho42)"/>
<rect x="1054" y="195" width="562" height="3" fill="url(#ho43)"/>
<rect x="1054" y="198" width="562" height="3" fill="url(#ho44)"/>
<rect x="1054" y="201" width="562" height="3" fill="url(#ho45)"/>
<rect x="1054" y="204" width="562" height="3" fill="url(#ho46)"/>
<rect x="1054" y="207" width="562" height="3" fill="url(#ho47)"/>
<rect x="1054" y="210" width="562" height="3" fill="url(#ho48)"/>
<rect x="1054" y="213" width="562" height="3" fill="url(#ho49)"/>
<rect x="1054" y="216" width="562" height="3" fill="url(#ho50)"/>
<rect x="1054" y="219" width="562" height="3" fill="url(#ho51)"/>
<rect x="1054" y="222" width="562" height="3" fill="url(#ho52)"/>
<rect x="1054" y="225" width="562" height="3" fill="url(#ho53)"/>
<rect x="1054" y="228" width="562" height="3" fill="url(#ho54)"/>
<rect x="1054" y="231" width="562" height="3" fill="url(#ho55)"/>
<rect x="1054" y="234" width="562" height="3" fill="url(#ho56)"/>
<rect x="1054" y="237" width="562" height="3" fill="url(#ho57)"/>
<rect x="1054" y="240" width="562" height="3" fill="url(#ho58)"/>
<rect x="1054" y="243" width="562" height="3" fill="url(#ho59)"/>
<rect x="1054" y="246" width="562" height="3" fill="url(#ho60)"/>
<rect x="1054" y="249" width="562" height="3" fill="url(#ho61)"/>
<rect x="1054" y="252" width="562" height="3" fill="url(#ho62)"/>
<rect x="1054" y="255" width="562" height="3" fill="url(#ho63)"/>
<rect x="1054" y="258" width="562" height="3" fill="url(#ho64)"/>
<rect x="1054" y="261" width="562" height="3" fill="url(#ho65)"/>
<rect x="1054" y="264" width="562" height="3" fill="url(#ho66)"/>
<rect x="1054" y="267" width="562" height="3" fill="url(#ho67)"/>
<rect x="1054" y="270" width="562" height="3" fill="url(#ho68)"/>
<rect x="1054" y="273" width="562" height="3" fill="url(#ho69)"/>
<rect x="1054" y="276" width="562" height="3" fill="url(#ho70)"/>
<rect x="1054" y="279" width="562" height="3" fill="url(#ho71)"/>
<rect x="1054" y="282" width="562" height="3" fill="url(#ho72)"/>
<rect x="1054" y="285" width="562" height="3" fill="url(#ho73)"/>
<rect x="1054" y="288" width="562" height="3" fill="url(#ho74)"/>
<rect x="1054" y="291" width="562" height="3" fill="url(#ho75)"/>
<rect x="1054" y="294" width="562" height="3" fill="url(#ho76)"/>
<rect x="1054" y="297" width="562" height="3" fill="url(#ho77)"/>
<rect x="1054" y="300" width="562" height="3" fill="url(#ho78)"/>
<rect x="1054" y="303" width="562" height="3" fill="url(#ho79)"/>
<rect x="1054" y="306" width="562" height="3" fill="url(#ho80)"/>
<rect x="1054" y="309" width="562" height="3" fill="url(#ho81)"/>
<rect x="1054" y="312" width="562" height="3" fill="url(#ho82)"/>
<rect x="1054" y="315" width="562" height="3" fill="url(#ho83)"/>
<rect x="1054" y="318" width="562" height="3" fill="url(#ho84)"/>
<rect x="1054" y="321" width="562" height="3" fill="url(#ho85)"/>
<rect x="1054" y="324" width="562" height="3" fill="url(#ho86)"/>
<rect x="1054" y="327" width="562" height="3" fill="url(#ho87)"/>
<rect x="1054" y="330" width="562" height="3" fill="url(#ho88)"/>
<rect x="1054" y="333" width="562" height="3" fill="url(#ho89)"/>
<rect x="1054" y="336" width="562" height="3" fill="url(#ho90)"/>
<rect x="1054" y="339" width="562" height="3" fill="url(#ho91)"/>
<rect x="1054" y="342" width="562" height="3" fill="url(#ho92)"/>
<rect x="1054" y="345" width="562" height="3" fill="url(#ho93)"/>
<rect x="1054" y="348" width="562" height="3" fill="url(#ho94)"/>
<rect x="1054" y="351" width="562" height="3" fill="url(#ho95)"/>
<rect x="1054" y="354" width="562" height="3" fill="url(#ho96)"/>
<rect x="1054" y="357" width="562" height="3" fill="url(#ho97)"/>
<rect x="1054" y="360" width="562" height="3" fill="url(#ho98)"/>
<rect x="1054" y="363" width="562" height="3" fill="url(#ho99)"/>
<rect x="1054" y="366" width="562" height="3" fill="url(#ho100)"/>
<rect x="1054" y="369" width="562" height="3" fill="url(#ho101)"/>
<rect x="1054" y="372" width="562" height="3" fill="url(#ho102)"/>
<rect x="1054" y="375" width="562" height="3" fill="url(#ho103)"/>
<rect x="1054" y="378" width="562" height="3" fill="url(#ho104)"/>
<rect x="1054" y="381" width="562" height="3" fill="url(#ho105)"/>
<rect x="1054" y="384" width="562" height="3" fill="url(#ho106)"/>
<rect x="1054" y="387" width="562" height="3" fill="url(#ho107)"/>
<rect x="1054" y="390" width="562" height="3" fill="url(#ho108)"/>
<rect x="1054" y="393" width="562" height="3" fill="url(#ho109)"/>
<rect x="1054" y="396" width="562" height="3" fill="url(#ho110)"/>
<rect x="1054" y="399" width="562" height="3" fill="url(#ho111)"/>
<rect x="1054" y="402" width="562" height="3" fill="url(#ho112)"/>
<rect x="1054" y="405" width="562" height="3" fill="url(#ho113)"/>
<rect x="1054" y="408" width="562" height="3" fill="url(#ho114)"/>
<rect x="1054" y="411" width="562" height="3" fill="url(#ho115)"/>
<rect x="1054" y="414" width="562" height="3" fill="url(#ho116)"/>
<rect x="1054" y="417" width="562" height="3" fill="url(#ho117)"/>
<rect x="1054" y="420" width="562" height="3" fill="url(#ho118)"/>
<rect x="1054" y="423" width="562" height="3" fill="url(#ho119)"/>
<rect x="1054" y="426" width="562" height="3" fill="url(#ho120)"/>
<rect x="1054" y="429" width="562" height="3" fill="url(#ho121)"/>
<rect x="1054" y="432" width="562" height="3" fill="url(#ho122)"/>
<rect x="1054" y="435" width="562" height="3" fill="url(#ho123)"/>
<rect x="1054" y="438" width="562" height="3" fill="url(#ho124)"/>
<rect x="1054" y="441" width="562" height="3" fill="url(#ho125)"/>
<rect x="1054" y="444" width="562" height="3" fill="url(#ho126)"/>
<rect x="1054" y="447" width="562" height="3" fill="url(#ho127)"/>
<rect x="1054" y="450" width="562" height="3" fill="url(#ho128)"/>
<rect x="1054" y="453" width="562" height="3" fill="url(#ho129)"/>
<rect x="1054" y="456" width="562" height="3" fill="url(#ho130)"/>
<rect x="1054" y="459" width="562" height="3" fill="url(#ho131)"/>
<rect x="1054" y="462" width="562" height="3" fill="url(#ho132)"/>
<rect x="1054" y="465" width="562" height="3" fill="url(#ho133)"/>
<rect x="1054" y="468" width="562" height="3" fill="url(#ho134)"/>
<rect x="1054" y="471" width="562" height="3" fill="url(#ho135)"/>
<rect x="1054" y="474" width="562" height="3" fill="url(#ho136)"/>
<rect x="1054" y="477" width="562" height="3" fill="url(#ho137)"/>
<rect x="1054" y="480" width="562" height="3" fill="url(#ho138)"/>
<rect x="1054" y="483" width="562" height="3" fill="url(#ho139)"/>
<rect x="1054" y="486" width="562" height="3" fill="url(#ho140)"/>
<rect x="1054" y="489" width="562" height="3" fill="url(#ho141)"/>
<rect x="1054" y="492" width="562" height="3" fill="url(#ho142)"/>
<rect x="1054" y="495" width="562" height="3" fill="url(#ho143)"/>
<rect x="1054" y="498" width="562" height="3" fill="url(#ho144)"/>
<rect x="1054" y="501" width="562" height="3" fill="url(#ho145)"/>
<rect x="1054" y="504" width="562" height="3" fill="url(#ho146)"/>
<rect x="1054" y="507" width="562" height="3" fill="url(#ho147)"/>
<rect x="1054" y="510" width="562" height="3" fill="url(#ho148)"/>
<rect x="1054" y="513" width="562" height="3" fill="url(#ho149)"/>
<rect x="1054" y="516" width="562" height="3" fill="url(#ho150)"/>
<rect x="1054" y="519" width="562" height="3" fill="url(#ho151)"/>
<rect x="1054" y="522" width="562" height="3" fill="url(#ho152)"/>
<rect x="1054" y="525" width="562" height="3" fill="url(#ho153)"/>
<rect x="1054" y="528" width="562" height="3" fill="url(#ho154)"/>
<rect x="1054" y="531" width="562" height="3" fill="url(#ho155)"/>
<rect x="1054" y="534" width="562" height="3" fill="url(#ho156)"/>
<rect x="1054" y="537" width="562" height="3" fill="url(#ho157)"/>
<rect x="1054" y="540" width="562" height="3" fill="url(#ho158)"/>
<rect x="1054" y="543" width="562" height="3" fill="url(#ho159)"/>
<rect x="1054" y="546" width="562" height="3" fill="url(#ho160)"/>
<rect x="1054" y="549" width="562" height="3" fill="url(#ho161)"/>
<rect x="1054" y="552" width="562" height="3" fill="url(#ho162)"/>
<rect x="1054" y="555" width="562" height="3" fill="url(#ho163)"/>
<rect x="1054" y="558" width="562" height="3" fill="url(#ho164)"/>
<rect x="1054" y="561" width="562" height="3" fill="url(#ho165)"/>
<rect x="1054" y="564" width="562" height="3" fill="url(#ho166)"/>
<rect x="1054" y="567" width="562" height="3" fill="url(#ho167)"/>
<rect x="1054" y="570" width="562" height="3" fill="url(#ho168)"/>
<rect x="1054" y="573" width="562" height="3" fill="url(#ho169)"/>
<rect x="1054" y="576" width="562" height="3" fill="url(#ho170)"/>
</g>
<g clip-path="url(#triclip)" shape-rendering="crispEdges">
<rect x="1169" y="205" width="383" height="2" fill="url(#tr0)"/>
<rect x="1169" y="207" width="383" height="2" fill="url(#tr1)"/>
<rect x="1169" y="209" width="383" height="2" fill="url(#tr2)"/>
<rect x="1169" y="211" width="383" height="2" fill="url(#tr3)"/>
<rect x="1169" y="213" width="383" height="2" fill="url(#tr4)"/>
<rect x="1169" y="215" width="383" height="2" fill="url(#tr5)"/>
<rect x="1169" y="217" width="383" height="2" fill="url(#tr6)"/>
<rect x="1169" y="219" width="383" height="2" fill="url(#tr7)"/>
<rect x="1169" y="221" width="383" height="2" fill="url(#tr8)"/>
<rect x="1169" y="223" width="383" height="2" fill="url(#tr9)"/>
<rect x="1169" y="225" width="383" height="2" fill="url(#tr10)"/>
<rect x="1169" y="227" width="383" height="2" fill="url(#tr11)"/>
<rect x="1169" y="229" width="383" height="2" fill="url(#tr12)"/>
<rect x="1169" y="231" width="383" height="2" fill="url(#tr13)"/>
<rect x="1169" y="233" width="383" height="2" fill="url(#tr14)"/>
<rect x="1169" y="235" width="383" height="2" fill="url(#tr15)"/>
<rect x="1169" y="237" width="383" height="2" fill="url(#tr16)"/>
<rect x="1169" y="239" width="383" height="2" fill="url(#tr17)"/>
<rect x="1169" y="241" width="383" height="2" fill="url(#tr18)"/>
<rect x="1169" y="243" width="383" height="2" fill="url(#tr19)"/>
<rect x="1169" y="245" width="383" height="2" fill="url(#tr20)"/>
<rect x="1169" y="247" width="383" height="2" fill="url(#tr21)"/>
<rect x="1169" y="249" width="383" height="2" fill="url(#tr22)"/>
<rect x="1169" y="251" width="383" height="2" fill="url(#tr23)"/>
<rect x="1169" y="253" width="383" height="2" fill="url(#tr24)"/>
<rect x="1169" y="255" width="383" height="2" fill="url(#tr25)"/>
<rect x="1169" y="257" width="383" height="2" fill="url(#tr26)"/>
<rect x="1169" y="259" width="383" height="2" fill="url(#tr27)"/>
<rect x="1169" y="261" width="383" height="2" fill="url(#tr28)"/>
<rect x="1169" y="263" width="383" height="2" fill="url(#tr29)"/>
<rect x="1169" y="265" width="383" height="2" fill="url(#tr30)"/>
<rect x="1169" y="267" width="383" height="2" fill="url(#tr31)"/>
<rect x="1169" y="269" width="383" height="2" fill="url(#tr32)"/>
<rect x="1169" y="271" width="383" height="2" fill="url(#tr33)"/>
<rect x="1169" y="273" width="383" height="2" fill="url(#tr34)"/>
<rect x="1169" y="275" width="383" height="2" fill="url(#tr35)"/>
<rect x="1169" y="277" width="383" height="2" fill="url(#tr36)"/>
<rect x="1169" y="279" width="383" height="2" fill="url(#tr37)"/>
<rect x="1169" y="281" width="383" height="2" fill="url(#tr38)"/>
<rect x="1169" y="283" width="383" height="2" fill="url(#tr39)"/>
<rect x="1169" y="285" width="383" height="2" fill="url(#tr40)"/>
<rect x="1169" y="287" width="383" height="2" fill="url(#tr41)"/>
<rect x="1169" y="289" width="383" height="2" fill="url(#tr42)"/>
<rect x="1169" y="291" width="383" height="2" fill="url(#tr43)"/>
<rect x="1169" y="293" width="383" height="2" fill="url(#tr44)"/>
<rect x="1169" y="295" width="383" height="2" fill="url(#tr45)"/>
<rect x="1169" y="297" width="383" height="2" fill="url(#tr46)"/>
<rect x="1169" y="299" width="383" height="2" fill="url(#tr47)"/>
<rect x="1169" y="301" width="383" height="2" fill="url(#tr48)"/>
<rect x="1169" y="303" width="383" height="2" fill="url(#tr49)"/>
<rect x="1169" y="305" width="383" height="2" fill="url(#tr50)"/>
<rect x="1169" y="307" width="383" height="2" fill="url(#tr51)"/>
<rect x="1169" y="309" width="383" height="2" fill="url(#tr52)"/>
<rect x="1169" y="311" width="383" height="2" fill="url(#tr53)"/>
<rect x="1169" y="313" width="383" height="2" fill="url(#tr54)"/>
<rect x="1169" y="315" width="383" height="2" fill="url(#tr55)"/>
<rect x="1169" y="317" width="383" height="2" fill="url(#tr56)"/>
<rect x="1169" y="319" width="383" height="2" fill="url(#tr57)"/>
<rect x="1169" y="321" width="383" height="2" fill="url(#tr58)"/>
<rect x="1169" y="323" width="383" height="2" fill="url(#tr59)"/>
<rect x="1169" y="325" width="383" height="2" fill="url(#tr60)"/>
<rect x="1169" y="327" width="383" height="2" fill="url(#tr61)"/>
<rect x="1169" y="329" width="383" height="2" fill="url(#tr62)"/>
<rect x="1169" y="331" width="383" height="2" fill="url(#tr63)"/>
<rect x="1169" y="333" width="383" height="2" fill="url(#tr64)"/>
<rect x="1169" y="335" width="383" height="2" fill="url(#tr65)"/>
<rect x="1169" y="337" width="383" height="2" fill="url(#tr66)"/>
<rect x="1169" y="339" width="383" height="2" fill="url(#tr67)"/>
<rect x="1169" y="341" width="383" height="2" fill="url(#tr68)"/>
<rect x="1169" y="343" width="383" height="2" fill="url(#tr69)"/>
<rect x="1169" y="345" width="383" height="2" fill="url(#tr70)"/>
<rect x="1169" y="347" width="383" height="2" fill="url(#tr71)"/>
<rect x="1169" y="349" width="383" height="2" fill="url(#tr72)"/>
<rect x="1169" y="351" width="383" height="2" fill="url(#tr73)"/>
<rect x="1169" y="353" width="383" height="2" fill="url(#tr74)"/>
<rect x="1169" y="355" width="383" height="2" fill="url(#tr75)"/>
<rect x="1169" y="357" width="383" height="2" fill="url(#tr76)"/>
<rect x="1169" y="359" width="383" height="2" fill="url(#tr77)"/>
<rect x="1169" y="361" width="383" height="2" fill="url(#tr78)"/>
<rect x="1169" y="363" width="383" height="2" fill="url(#tr79)"/>
<rect x="1169" y="365" width="383" height="2" fill="url(#tr80)"/>
<rect x="1169" y="367" width="383" height="2" fill="url(#tr81)"/>
<rect x="1169" y="369" width="383" height="2" fill="url(#tr82)"/>
<rect x="1169" y="371" width="383" height="2" fill="url(#tr83)"/>
<rect x="1169" y="373" width="383" height="2" fill="url(#tr84)"/>
<rect x="1169" y="375" width="383" height="2" fill="url(#tr85)"/>
<rect x="1169" y="377" width="383" height="2" fill="url(#tr86)"/>
<rect x="1169" y="379" width="383" height="2" fill="url(#tr87)"/>
<rect x="1169" y="381" width="383" height="2" fill="url(#tr88)"/>
<rect x="1169" y="383" width="383" height="2" fill="url(#tr89)"/>
<rect x="1169" y="385" width="383" height="2" fill="url(#tr90)"/>
<rect x="1169" y="387" width="383" height="2" fill="url(#tr91)"/>
<rect x="1169" y="389" width="383" height="2" fill="url(#tr92)"/>
<rect x="1169" y="391" width="383" height="2" fill="url(#tr93)"/>
<rect x="1169" y="393" width="383" height="2" fill="url(#tr94)"/>
<rect x="1169" y="395" width="383" height="2" fill="url(#tr95)"/>
<rect x="1169" y="397" width="383" height="2" fill="url(#tr96)"/>
<rect x="1169" y="399" width="383" height="2" fill="url(#tr97)"/>
<rect x="1169" y="401" width="383" height="2" fill="url(#tr98)"/>
<rect x="1169" y="403" width="383" height="2" fill="url(#tr99)"/>
<rect x="1169" y="405" width="383" height="2" fill="url(#tr100)"/>
<rect x="1169" y="407" width="383" height="2" fill="url(#tr101)"/>
<rect x="1169" y="409" width="383" height="2" fill="url(#tr102)"/>
<rect x="1169" y="411" width="383" height="2" fill="url(#tr103)"/>
<rect x="1169" y="413" width="383" height="2" fill="url(#tr104)"/>
<rect x="1169" y="415" width="383" height="2" fill="url(#tr105)"/>
<rect x="1169" y="417" width="383" height="2" fill="url(#tr106)"/>
<rect x="1169" y="419" width="383" height="2" fill="url(#tr107)"/>
<rect x="1169" y="421" width="383" height="2" fill="url(#tr108)"/>
<rect x="1169" y="423" width="383" height="2" fill="url(#tr109)"/>
<rect x="1169" y="425" width="383" height="2" fill="url(#tr110)"/>
<rect x="1169" y="427" width="383" height="2" fill="url(#tr111)"/>
<rect x="1169" y="429" width="383" height="2" fill="url(#tr112)"/>
<rect x="1169" y="431" width="383" height="2" fill="url(#tr113)"/>
<rect x="1169" y="433" width="383" height="2" fill="url(#tr114)"/>
<rect x="1169" y="435" width="383" height="2" fill="url(#tr115)"/>
<rect x="1169" y="437" width="383" height="2" fill="url(#tr116)"/>
<rect x="1169" y="439" width="383" height="2" fill="url(#tr117)"/>
<rect x="1169" y="441" width="383" height="2" fill="url(#tr118)"/>
<rect x="1169" y="443" width="383" height="2" fill="url(#tr119)"/>
<rect x="1169" y="445" width="383" height="2" fill="url(#tr120)"/>
<rect x="1169" y="447" width="383" height="2" fill="url(#tr121)"/>
<rect x="1169" y="449" width="383" height="2" fill="url(#tr122)"/>
<rect x="1169" y="451" width="383" height="2" fill="url(#tr123)"/>
<rect x="1169" y="453" width="383" height="2" fill="url(#tr124)"/>
<rect x="1169" y="455" width="383" height="2" fill="url(#tr125)"/>
<rect x="1169" y="457" width="383" height="2" fill="url(#tr126)"/>
<rect x="1169" y="459" width="383" height="2" fill="url(#tr127)"/>
<rect x="1169" y="461" width="383" height="2" fill="url(#tr128)"/>
<rect x="1169" y="463" width="383" height="2" fill="url(#tr129)"/>
<rect x="1169" y="465" width="383" height="2" fill="url(#tr130)"/>
<rect x="1169" y="467" width="383" height="2" fill="url(#tr131)"/>
<rect x="1169" y="469" width="383" height="2" fill="url(#tr132)"/>
<rect x="1169" y="471" width="383" height="2" fill="url(#tr133)"/>
<rect x="1169" y="473" width="383" height="2" fill="url(#tr134)"/>
<rect x="1169" y="475" width="383" height="2" fill="url(#tr135)"/>
<rect x="1169" y="477" width="383" height="2" fill="url(#tr136)"/>
<rect x="1169" y="479" width="383" height="2" fill="url(#tr137)"/>
<rect x="1169" y="481" width="383" height="2" fill="url(#tr138)"/>
<rect x="1169" y="483" width="383" height="2" fill="url(#tr139)"/>
<rect x="1169" y="485" width="383" height="2" fill="url(#tr140)"/>
<rect x="1169" y="487" width="383" height="2" fill="url(#tr141)"/>
<rect x="1169" y="489" width="383" height="2" fill="url(#tr142)"/>
<rect x="1169" y="491" width="383" height="2" fill="url(#tr143)"/>
<rect x="1169" y="493" width="383" height="2" fill="url(#tr144)"/>
<rect x="1169" y="495" width="383" height="2" fill="url(#tr145)"/>
<rect x="1169" y="497" width="383" height="2" fill="url(#tr146)"/>
<rect x="1169" y="499" width="383" height="2" fill="url(#tr147)"/>
<rect x="1169" y="501" width="383" height="2" fill="url(#tr148)"/>
<rect x="1169" y="503" width="383" height="2" fill="url(#tr149)"/>
<rect x="1169" y="505" width="383" height="2" fill="url(#tr150)"/>
<rect x="1169" y="507" width="383" height="2" fill="url(#tr151)"/>
<rect x="1169" y="509" width="383" height="2" fill="url(#tr152)"/>
<rect x="1169" y="511" width="383" height="2" fill="url(#tr153)"/>
<rect x="1169" y="513" width="383" height="2" fill="url(#tr154)"/>
<rect x="1169" y="515" width="383" height="2" fill="url(#tr155)"/>
<rect x="1169" y="517" width="383" height="2" fill="url(#tr156)"/>
<rect x="1169" y="519" width="383" height="2" fill="url(#tr157)"/>
<rect x="1169" y="521" width="383" height="2" fill="url(#tr158)"/>
<rect x="1169" y="523" width="383" height="2" fill="url(#tr159)"/>
<rect x="1169" y="525" width="383" height="2" fill="url(#tr160)"/>
<rect x="1169" y="527" width="383" height="2" fill="url(#tr161)"/>
<rect x="1169" y="529" width="383" height="2" fill="url(#tr162)"/>
<rect x="1169" y="531" width="383" height="2" fill="url(#tr163)"/>
<rect x="1169" y="533" width="383" height="2" fill="url(#tr164)"/>
<rect x="1169" y="535" width="383" height="2" fill="url(#tr165)"/>
<rect x="1169" y="537" width="383" height="2" fill="url(#tr166)"/>
<rect x="1169" y="539" width="383" height="2" fill="url(#tr167)"/>
<rect x="1169" y="541" width="383" height="2" fill="url(#tr168)"/>
<rect x="1169" y="543" width="383" height="2" fill="url(#tr169)"/>
<rect x="1169" y="545" width="383" height="2" fill="url(#tr170)"/>
</g>
<rect x="1053.7" y="54.7" width="653.7" height="528.7" fill="none" stroke="#a8a8a8" stroke-width="1.6"/>
<line x1="1046.7" y1="583.4" x2="1053.7" y2="583.4" stroke="#dcdcdc" stroke-width="1.6"/>
<text x="1047.2" y="589.9" font-size="16" fill="#d8d8d8" text-anchor="end">0</text>
<line x1="1053.7" y1="583.4" x2="1053.7" y2="590.4" stroke="#dcdcdc" stroke-width="1.6"/>
<text x="1053.7" y="607.0" font-size="16" fill="#d8d8d8" text-anchor="middle">0</text>
<line x1="1046.7" y1="520.7" x2="1053.7" y2="520.7" stroke="#dcdcdc" stroke-width="1.6"/>
<text x="1047.2" y="527.2" font-size="16" fill="#d8d8d8" text-anchor="end">0,1</text>
<line x1="1131.4" y1="583.4" x2="1131.4" y2="590.4" stroke="#dcdcdc" stroke-width="1.6"/>
<text x="1131.4" y="607.0" font-size="16" fill="#d8d8d8" text-anchor="middle">0,1</text>
<line x1="1046.7" y1="457.9" x2="1053.7" y2="457.9" stroke="#dcdcdc" stroke-width="1.6"/>
<text x="1047.2" y="464.4" font-size="16" fill="#d8d8d8" text-anchor="end">0,2</text>
<line x1="1209.0" y1="583.4" x2="1209.0" y2="590.4" stroke="#dcdcdc" stroke-width="1.6"/>
<text x="1209.0" y="607.0" font-size="16" fill="#d8d8d8" text-anchor="middle">0,2</text>
<line x1="1046.7" y1="395.2" x2="1053.7" y2="395.2" stroke="#dcdcdc" stroke-width="1.6"/>
<text x="1047.2" y="401.7" font-size="16" fill="#d8d8d8" text-anchor="end">0,3</text>
<line x1="1286.7" y1="583.4" x2="1286.7" y2="590.4" stroke="#dcdcdc" stroke-width="1.6"/>
<text x="1286.7" y="607.0" font-size="16" fill="#d8d8d8" text-anchor="middle">0,3</text>
<line x1="1046.7" y1="332.4" x2="1053.7" y2="332.4" stroke="#dcdcdc" stroke-width="1.6"/>
<text x="1047.2" y="338.9" font-size="16" fill="#d8d8d8" text-anchor="end">0,4</text>
<line x1="1364.3" y1="583.4" x2="1364.3" y2="590.4" stroke="#dcdcdc" stroke-width="1.6"/>
<text x="1364.3" y="607.0" font-size="16" fill="#d8d8d8" text-anchor="middle">0,4</text>
<line x1="1046.7" y1="269.7" x2="1053.7" y2="269.7" stroke="#dcdcdc" stroke-width="1.6"/>
<text x="1047.2" y="276.2" font-size="16" fill="#d8d8d8" text-anchor="end">0,5</text>
<line x1="1442.0" y1="583.4" x2="1442.0" y2="590.4" stroke="#dcdcdc" stroke-width="1.6"/>
<text x="1442.0" y="607.0" font-size="16" fill="#d8d8d8" text-anchor="middle">0,5</text>
<line x1="1046.7" y1="207.0" x2="1053.7" y2="207.0" stroke="#dcdcdc" stroke-width="1.6"/>
<text x="1047.2" y="213.5" font-size="16" fill="#d8d8d8" text-anchor="end">0,6</text>
<line x1="1519.7" y1="583.4" x2="1519.7" y2="590.4" stroke="#dcdcdc" stroke-width="1.6"/>
<text x="1519.7" y="607.0" font-size="16" fill="#d8d8d8" text-anchor="middle">0,6</text>
<line x1="1046.7" y1="144.2" x2="1053.7" y2="144.2" stroke="#dcdcdc" stroke-width="1.6"/>
<text x="1047.2" y="150.7" font-size="16" fill="#d8d8d8" text-anchor="end">0,7</text>
<line x1="1597.3" y1="583.4" x2="1597.3" y2="590.4" stroke="#dcdcdc" stroke-width="1.6"/>
<text x="1597.3" y="607.0" font-size="16" fill="#d8d8d8" text-anchor="middle">0,7</text>
<line x1="1046.7" y1="81.5" x2="1053.7" y2="81.5" stroke="#dcdcdc" stroke-width="1.6"/>
<text x="1047.2" y="88.0" font-size="16" fill="#d8d8d8" text-anchor="end">0,8</text>
<line x1="1675.0" y1="583.4" x2="1675.0" y2="590.4" stroke="#dcdcdc" stroke-width="1.6"/>
<text x="1675.0" y="607.0" font-size="16" fill="#d8d8d8" text-anchor="middle">0,8</text>
<rect x="1282.3" y="266.8" width="16" height="16" fill="none" stroke="#ffffff" stroke-opacity="0.85" stroke-width="2"/>
<rect x="1337.5" y="264.0" width="16" height="16" fill="none" stroke="#ffffff" stroke-opacity="0.85" stroke-width="2"/>
<rect x="1309.4" y="305.4" width="16" height="16" fill="none" stroke="#ffffff" stroke-opacity="0.85" stroke-width="2"/>
<rect x="1250.3" y="346.8" width="16" height="16" fill="none" stroke="#ffffff" stroke-opacity="0.85" stroke-width="2"/>
<rect x="1339.8" y="349.8" width="16" height="16" fill="none" stroke="#ffffff" stroke-opacity="0.85" stroke-width="2"/>
<rect x="1356.7" y="345.3" width="16" height="16" fill="none" stroke="#ffffff" stroke-opacity="0.85" stroke-width="2"/>
<rect x="1206.5" y="405.0" width="16" height="16" fill="none" stroke="#ffffff" stroke-opacity="0.85" stroke-width="2"/>
<rect x="1239.0" y="408.0" width="16" height="16" fill="none" stroke="#ffffff" stroke-opacity="0.85" stroke-width="2"/>
<rect x="1254.8" y="414.8" width="16" height="16" fill="none" stroke="#ffffff" stroke-opacity="0.85" stroke-width="2"/>
<rect x="1271.5" y="435.8" width="16" height="16" fill="none" stroke="#ffffff" stroke-opacity="0.85" stroke-width="2"/>
<rect x="1335.5" y="419.9" width="16" height="16" fill="none" stroke="#ffffff" stroke-opacity="0.85" stroke-width="2"/>
<rect x="1213.4" y="453.8" width="16" height="16" fill="none" stroke="#ffffff" stroke-opacity="0.85" stroke-width="2"/>
<rect x="1195.5" y="486.0" width="16" height="16" fill="none" stroke="#ffffff" stroke-opacity="0.85" stroke-width="2"/>
<rect x="1393.5" y="277.1" width="16" height="16" fill="none" stroke="#ffffff" stroke-opacity="0.85" stroke-width="2"/>
<rect x="1414.5" y="297.7" width="16" height="16" fill="none" stroke="#ffffff" stroke-opacity="0.85" stroke-width="2"/>
<rect x="1443.5" y="319.0" width="16" height="16" fill="none" stroke="#ffffff" stroke-opacity="0.85" stroke-width="2"/>
<rect x="1404.6" y="377.6" width="16" height="16" fill="none" stroke="#ffffff" stroke-opacity="0.85" stroke-width="2"/>
<rect x="1463.5" y="374.8" width="16" height="16" fill="none" stroke="#ffffff" stroke-opacity="0.85" stroke-width="2"/>
<circle cx="1258.2" cy="431" r="5.3" fill="#000000" stroke="#000000" stroke-width="1.4"/>
<circle cx="1305.9" cy="264.9" r="5.3" fill="#4e8c50" stroke="#111f12" stroke-width="1.4"/>
<circle cx="1356.3" cy="256" r="5.3" fill="#a6b862" stroke="#252816" stroke-width="1.4"/>
<circle cx="1324.4" cy="305.7" r="5.3" fill="#5c6c4a" stroke="#141810" stroke-width="1.4"/>
<circle cx="1266.4" cy="356.2" r="5.3" fill="#6cb6a2" stroke="#182824" stroke-width="1.4"/>
<circle cx="1343.3" cy="354.8" r="5.3" fill="#be9a88" stroke="#2a221e" stroke-width="1.4"/>
<circle cx="1361.8" cy="347.7" r="5.3" fill="#6a5044" stroke="#17120f" stroke-width="1.4"/>
<circle cx="1224.5" cy="419" r="5.3" fill="#0c8aa2" stroke="#031e24" stroke-width="1.4"/>
<circle cx="1249.4" cy="419.8" r="5.3" fill="#6a80a0" stroke="#171c23" stroke-width="1.4"/>
<circle cx="1259.1" cy="429" r="5.3" fill="#8a88b2" stroke="#1e1e27" stroke-width="1.4"/>
<circle cx="1270.3" cy="450.9" r="5.3" fill="#5a3c6a" stroke="#140d17" stroke-width="1.4"/>
<circle cx="1329.4" cy="431.7" r="5.3" fill="#ba5a92" stroke="#291420" stroke-width="1.4"/>
<circle cx="1221.6" cy="470.8" r="5.3" fill="#5a68a8" stroke="#141725" stroke-width="1.4"/>
<circle cx="1202.4" cy="504.8" r="5.3" fill="#3c4298" stroke="#0d0f21" stroke-width="1.4"/>
<circle cx="1406.5" cy="263.1" r="5.3" fill="#e8c846" stroke="#332c0f" stroke-width="1.4"/>
<circle cx="1425.6" cy="285.5" r="5.3" fill="#e2aa48" stroke="#322510" stroke-width="1.4"/>
<circle cx="1453.3" cy="307.7" r="5.3" fill="#d8904c" stroke="#302011" stroke-width="1.4"/>
<circle cx="1401.5" cy="382.8" r="5.3" fill="#c05a72" stroke="#2a1419" stroke-width="1.4"/>
<circle cx="1467.3" cy="376.7" r="5.3" fill="#b23c4a" stroke="#270d10" stroke-width="1.4"/>
<rect x="1288.5" y="368" width="15.5" height="15.5" fill="none" stroke="#000" stroke-width="2.6"/>
<circle cx="1296.2" cy="375.7" r="5.6" fill="#ffffff" stroke="#151515" stroke-width="1.4"/>
<rect x="1506.5" y="58.5" width="198.5" height="163.5" fill="#1e1e1e"/>
<rect x="1510" y="61.9" width="191.4" height="156.7" fill="url(#insL)"/>
<path d="M1631.5,61.9 L1701.4,61.9 L1701.4,218.6 L1579.4,218.6 Z" fill="url(#insR)"/>
<rect x="1510" y="61.9" width="191.4" height="156.7" fill="none" stroke="#8c8c8c" stroke-width="1.6"/>
<rect x="1597.3" y="132.3" width="16.4" height="17" fill="none" stroke="#ffffff" stroke-width="2"/>
<circle cx="1649.3" cy="168.9" r="5.3" fill="#0a8aa2" stroke="#0e2030" stroke-width="1.6"/>
<rect x="1423.6" y="541.2" width="280" height="29" fill="#363636"/>
<text x="1454.5" y="564.0" font-size="20" fill="#f0ede6" stroke="#f0ede6" stroke-width="0.4" textLength="218.0" lengthAdjust="spacingAndGlyphs">RGB Triplet: 0, 133, 163</text>
<text x="14.0" y="686.8" font-size="30" fill="#f0ede6" stroke="#f0ede6" stroke-width="0.5" textLength="226.5" lengthAdjust="spacingAndGlyphs">Current Reading</text>
<text x="14.0" y="732.3" font-size="24" fill="#f0ede6" stroke="#f0ede6" stroke-width="0.45" textLength="107.0" lengthAdjust="spacingAndGlyphs">x: 0,2198</text>
<text x="14.0" y="776.3" font-size="24" fill="#f0ede6" stroke="#f0ede6" stroke-width="0.45" textLength="107.0" lengthAdjust="spacingAndGlyphs">y: 0,2605</text>
<text x="14.0" y="820.6" font-size="24" fill="#f0ede6" stroke="#f0ede6" stroke-width="0.45" textLength="114.0" lengthAdjust="spacingAndGlyphs">fL: 23,097</text>
<text x="14.0" y="864.2" font-size="24" fill="#f0ede6" stroke="#f0ede6" stroke-width="0.45" textLength="164.0" lengthAdjust="spacingAndGlyphs">cd/m²: 79,137</text>
<rect x="331" y="639.3" width="8.7" height="29.0" fill="#050505"/>
<rect x="331" y="668.3" width="8.7" height="197.2" fill="#282828"/>
<rect x="339.7" y="639.3" width="1231.9" height="14.3" fill="#2f2f2f"/>
<rect x="339.7" y="653.6" width="1231.9" height="14.7" fill="#151515"/>
<rect x="339.7" y="668.30" width="1231.9" height="28.47" fill="#454545"/>
<rect x="339.7" y="696.47" width="1231.9" height="28.47" fill="#888888"/>
<rect x="339.7" y="724.64" width="1231.9" height="28.47" fill="#454545"/>
<rect x="339.7" y="752.81" width="1231.9" height="28.47" fill="#888888"/>
<rect x="339.7" y="780.98" width="1231.9" height="28.47" fill="#454545"/>
<rect x="339.7" y="809.15" width="1231.9" height="28.47" fill="#888888"/>
<rect x="339.7" y="837.32" width="1231.9" height="28.47" fill="#454545"/>
<g transform="scale(0.7,1)" fill="#f0ede6" font-size="15" stroke="#f0ede6" stroke-width="0.35">
<text x="604.4" y="659.8">Black</text>
<text x="648.0" y="659.8">Gray 35</text>
<text x="709.3" y="659.8">Gray 50</text>
<text x="769.4" y="659.8">Gray 65</text>
<text x="830.7" y="659.8">Gray 80</text>
<text x="891.4" y="659.8">White</text>
<text x="950.4" y="659.8">Dark Skin</text>
<text x="1022.4" y="659.8">Light Skin</text>
<text x="1095.3" y="659.8">Blue Sky</text>
<text x="1161.9" y="659.8">Foliage</text>
<text x="1218.9" y="659.8">Blue Flower</text>
<text x="1307.7" y="659.8">Bluish Green</text>
<text x="1402.4" y="659.8">Orange</text>
<text x="1461.1" y="659.8">Purplish Blue</text>
<text x="1558.9" y="659.8">Moderate Red</text>
<text x="1665.0" y="659.8">Purple</text>
<text x="1718.1" y="659.8">Yellow Green</text>
<text x="1816.0" y="659.8">Orange Yellow</text>
<text x="1921.4" y="659.8">Blue</text>
<text x="1971.3" y="659.8">Green</text>
<text x="2021.9" y="659.8">Red</text>
<text x="2071.3" y="659.8">Yellow</text>
<text x="2130.6" y="659.8">Magenta</text>
<text x="2199.9" y="659.8">Cyan</text>
</g>
<g transform="scale(0.68,1)" fill="#f0ede6" font-size="16" stroke="#f0ede6" stroke-width="0.35">
<text x="504.7" y="689.6">x: CIE31</text>
<text x="622.2" y="689.6">0,26</text>
<text x="667.1" y="689.6">0,31</text>
<text x="730.1" y="689.6">0,31</text>
<text x="792.1" y="689.6">0,31</text>
<text x="855.1" y="689.6">0,31</text>
<text x="917.6" y="689.6">0,31</text>
<text x="978.4" y="689.6">0,40</text>
<text x="1052.5" y="689.6">0,37</text>
<text x="1127.5" y="689.6">0,25</text>
<text x="1196.0" y="689.6">0,35</text>
<text x="1254.7" y="689.6">0,27</text>
<text x="1346.2" y="689.6">0,27</text>
<text x="1443.7" y="689.6">0,51</text>
<text x="1504.1" y="689.6">0,22</text>
<text x="1604.7" y="689.6">0,45</text>
<text x="1714.0" y="689.6">0,28</text>
<text x="1768.7" y="689.6">0,39</text>
<text x="1869.4" y="689.6">0,48</text>
<text x="1977.9" y="689.6">0,19</text>
<text x="2029.3" y="689.6">0,33</text>
<text x="2081.3" y="689.6">0,53</text>
<text x="2132.2" y="689.6">0,45</text>
<text x="2193.2" y="689.6">0,36</text>
<text x="2264.6" y="689.6">0,22</text>
<text x="504.7" y="717.8">y: CIE31</text>
<text x="622.2" y="717.8">0,24</text>
<text x="667.1" y="717.8">0,33</text>
<text x="730.1" y="717.8">0,33</text>
<text x="792.1" y="717.8">0,33</text>
<text x="855.1" y="717.8">0,33</text>
<text x="917.6" y="717.8">0,33</text>
<text x="978.4" y="717.8">0,37</text>
<text x="1052.5" y="717.8">0,36</text>
<text x="1127.5" y="717.8">0,26</text>
<text x="1196.0" y="717.8">0,44</text>
<text x="1254.7" y="717.8">0,24</text>
<text x="1346.2" y="717.8">0,36</text>
<text x="1443.7" y="717.8">0,44</text>
<text x="1504.1" y="717.8">0,18</text>
<text x="1604.7" y="717.8">0,32</text>
<text x="1714.0" y="717.8">0,21</text>
<text x="1768.7" y="717.8">0,52</text>
<text x="1869.4" y="717.8">0,47</text>
<text x="1977.9" y="717.8">0,13</text>
<text x="2029.3" y="717.8">0,51</text>
<text x="2081.3" y="717.8">0,33</text>
<text x="2132.2" y="717.8">0,51</text>
<text x="2193.2" y="717.8">0,24</text>
<text x="2264.6" y="717.8">0,26</text>
<text x="504.7" y="745.9">Y</text>
<text x="622.2" y="745.9">0,33</text>
<text x="667.1" y="745.9">138,29</text>
<text x="730.1" y="745.9">197,84</text>
<text x="792.1" y="745.9">254,67</text>
<text x="855.1" y="745.9">313,79</text>
<text x="917.6" y="745.9">394,48</text>
<text x="978.4" y="745.9">39,14</text>
<text x="1052.5" y="745.9">139,28</text>
<text x="1127.5" y="745.9">75,50</text>
<text x="1196.0" y="745.9">52,46</text>
<text x="1254.7" y="745.9">93,09</text>
<text x="1346.2" y="745.9">171,66</text>
<text x="1443.7" y="745.9">109,85</text>
<text x="1504.1" y="745.9">46,33</text>
<text x="1604.7" y="745.9">71,20</text>
<text x="1714.0" y="745.9">25,39</text>
<text x="1768.7" y="745.9">174,03</text>
<text x="1869.4" y="745.9">167,83</text>
<text x="1977.9" y="745.9">23,54</text>
<text x="2029.3" y="745.9">94,65</text>
<text x="2081.3" y="745.9">42,40</text>
<text x="2132.2" y="745.9">234,55</text>
<text x="2193.2" y="745.9">71,80</text>
<text x="2264.6" y="745.9">79,14</text>
<text x="504.7" y="774.1">Target x:CIE31</text>
<text x="622.2" y="774.1">0,31</text>
<text x="667.1" y="774.1">0,31</text>
<text x="730.1" y="774.1">0,31</text>
<text x="792.1" y="774.1">0,31</text>
<text x="855.1" y="774.1">0,31</text>
<text x="917.6" y="774.1">0,31</text>
<text x="978.4" y="774.1">0,40</text>
<text x="1052.5" y="774.1">0,38</text>
<text x="1127.5" y="774.1">0,25</text>
<text x="1196.0" y="774.1">0,34</text>
<text x="1254.7" y="774.1">0,27</text>
<text x="1346.2" y="774.1">0,26</text>
<text x="1443.7" y="774.1">0,51</text>
<text x="1504.1" y="774.1">0,22</text>
<text x="1604.7" y="774.1">0,46</text>
<text x="1714.0" y="774.1">0,29</text>
<text x="1768.7" y="774.1">0,38</text>
<text x="1869.4" y="774.1">0,47</text>
<text x="1977.9" y="774.1">0,19</text>
<text x="2029.3" y="774.1">0,31</text>
<text x="2081.3" y="774.1">0,54</text>
<text x="2132.2" y="774.1">0,45</text>
<text x="2193.2" y="774.1">0,37</text>
<text x="2264.6" y="774.1">0,21</text>
<text x="504.7" y="802.3">Target y:CIE31</text>
<text x="622.2" y="802.3">0,33</text>
<text x="667.1" y="802.3">0,33</text>
<text x="730.1" y="802.3">0,33</text>
<text x="792.1" y="802.3">0,33</text>
<text x="855.1" y="802.3">0,33</text>
<text x="917.6" y="802.3">0,33</text>
<text x="978.4" y="802.3">0,36</text>
<text x="1052.5" y="802.3">0,36</text>
<text x="1127.5" y="802.3">0,27</text>
<text x="1196.0" y="802.3">0,43</text>
<text x="1254.7" y="802.3">0,25</text>
<text x="1346.2" y="802.3">0,36</text>
<text x="1443.7" y="802.3">0,41</text>
<text x="1504.1" y="802.3">0,19</text>
<text x="1604.7" y="802.3">0,31</text>
<text x="1714.0" y="802.3">0,22</text>
<text x="1768.7" y="802.3">0,49</text>
<text x="1869.4" y="802.3">0,44</text>
<text x="1977.9" y="802.3">0,14</text>
<text x="2029.3" y="802.3">0,49</text>
<text x="2081.3" y="802.3">0,32</text>
<text x="2132.2" y="802.3">0,47</text>
<text x="2193.2" y="802.3">0,25</text>
<text x="2264.6" y="802.3">0,27</text>
<text x="504.7" y="830.4">Target Y</text>
<text x="622.2" y="830.4">0,00</text>
<text x="667.1" y="830.4">134,88</text>
<text x="730.1" y="830.4">193,70</text>
<text x="792.1" y="830.4">251,52</text>
<text x="855.1" y="830.4">312,15</text>
<text x="917.6" y="830.4">394,48</text>
<text x="978.4" y="830.4">39,74</text>
<text x="1052.5" y="830.4">137,65</text>
<text x="1127.5" y="830.4">73,76</text>
<text x="1196.0" y="830.4">51,41</text>
<text x="1254.7" y="830.4">91,99</text>
<text x="1346.2" y="830.4">165,18</text>
<text x="1443.7" y="830.4">111,82</text>
<text x="1504.1" y="830.4">46,37</text>
<text x="1604.7" y="830.4">73,67</text>
<text x="1714.0" y="830.4">26,33</text>
<text x="1768.7" y="830.4">168,67</text>
<text x="1869.4" y="830.4">167,70</text>
<text x="1977.9" y="830.4">24,63</text>
<text x="2029.3" y="830.4">90,63</text>
<text x="2081.3" y="830.4">46,00</text>
<text x="2132.2" y="830.4">232,60</text>
<text x="2193.2" y="830.4">74,26</text>
<text x="2264.6" y="830.4">76,60</text>
<text x="504.7" y="858.6">ΔE 2000</text>
<text x="622.2" y="858.6">1,38</text>
<text x="667.1" y="858.6">0,67</text>
<text x="730.1" y="858.6">0,52</text>
<text x="792.1" y="858.6">0,85</text>
<text x="855.1" y="858.6">0,67</text>
<text x="917.6" y="858.6">0,14</text>
<text x="978.4" y="858.6">3,07</text>
<text x="1052.5" y="858.6">3,71</text>
<text x="1127.5" y="858.6">4,03</text>
<text x="1196.0" y="858.6">1,81</text>
<text x="1254.7" y="858.6">2,01</text>
<text x="1346.2" y="858.6">2,51</text>
<text x="1443.7" y="858.6">8,47</text>
<text x="1504.1" y="858.6">3,89</text>
<text x="1604.7" y="858.6">2,10</text>
<text x="1714.0" y="858.6">1,77</text>
<text x="1768.7" y="858.6">3,54</text>
<text x="1869.4" y="858.6">7,49</text>
<text x="1977.9" y="858.6">3,85</text>
<text x="2029.3" y="858.6">3,43</text>
<text x="2081.3" y="858.6">2,67</text>
<text x="2132.2" y="858.6">5,70</text>
<text x="2193.2" y="858.6">2,47</text>
<text x="2264.6" y="858.6">4,92</text>
</g>
<rect x="0" y="888.0" width="1717" height="62.0" fill="#2a2a2a"/>
<path d="M0.0,950 L0.0,893.0 Q0.0,889.0 4.0,889.0 L52.0,889.0 Q56.0,889.0 56.0,893.0 L56.0,950 Z" fill="url(#btn)"/>
<rect x="4.9" y="893.8" width="46" height="24.6" rx="3.2" fill="#000000" stroke="#c4c4c4" stroke-opacity="0.85" stroke-width="1.3"/>
<text x="28.0" y="933.0" font-size="11" fill="#424242" text-anchor="middle" textLength="27.3" lengthAdjust="spacingAndGlyphs" font-weight="bold">Black</text>
<path d="M58.1,950 L58.1,893.0 Q58.1,889.0 62.1,889.0 L110.1,889.0 Q114.1,889.0 114.1,893.0 L114.1,950 Z" fill="url(#btn)"/>
<rect x="63.0" y="893.8" width="46" height="24.6" rx="3.2" fill="#5b5b5b" stroke="#c4c4c4" stroke-opacity="0.85" stroke-width="1.3"/>
<text x="86.1" y="933.0" font-size="11" fill="#424242" text-anchor="middle" textLength="37.6" lengthAdjust="spacingAndGlyphs" font-weight="bold">Gray 35</text>
<path d="M116.2,950 L116.2,893.0 Q116.2,889.0 120.2,889.0 L168.2,889.0 Q172.2,889.0 172.2,893.0 L172.2,950 Z" fill="url(#btn)"/>
<rect x="121.1" y="893.8" width="46" height="24.6" rx="3.2" fill="#7b7b7b" stroke="#c4c4c4" stroke-opacity="0.85" stroke-width="1.3"/>
<text x="144.2" y="933.0" font-size="11" fill="#424242" text-anchor="middle" textLength="37.6" lengthAdjust="spacingAndGlyphs" font-weight="bold">Gray 50</text>
<path d="M174.4,950 L174.4,893.0 Q174.4,889.0 178.4,889.0 L226.4,889.0 Q230.4,889.0 230.4,893.0 L230.4,950 Z" fill="url(#btn)"/>
<rect x="179.3" y="893.8" width="46" height="24.6" rx="3.2" fill="#a4a4a4" stroke="#c4c4c4" stroke-opacity="0.85" stroke-width="1.3"/>
<text x="202.4" y="933.0" font-size="11" fill="#424242" text-anchor="middle" textLength="37.6" lengthAdjust="spacingAndGlyphs" font-weight="bold">Gray 65</text>
<path d="M232.5,950 L232.5,893.0 Q232.5,889.0 236.5,889.0 L284.5,889.0 Q288.5,889.0 288.5,893.0 L288.5,950 Z" fill="url(#btn)"/>
<rect x="237.4" y="893.8" width="46" height="24.6" rx="3.2" fill="#cecece" stroke="#c4c4c4" stroke-opacity="0.85" stroke-width="1.3"/>
<text x="260.5" y="933.0" font-size="11" fill="#424242" text-anchor="middle" textLength="37.6" lengthAdjust="spacingAndGlyphs" font-weight="bold">Gray 80</text>
<path d="M290.6,950 L290.6,893.0 Q290.6,889.0 294.6,889.0 L342.6,889.0 Q346.6,889.0 346.6,893.0 L346.6,950 Z" fill="url(#btn)"/>
<rect x="295.5" y="893.8" width="46" height="24.6" rx="3.2" fill="#ffffff" stroke="#c4c4c4" stroke-opacity="0.85" stroke-width="1.3"/>
<text x="318.6" y="933.0" font-size="11" fill="#424242" text-anchor="middle" textLength="27.8" lengthAdjust="spacingAndGlyphs" font-weight="bold">White</text>
<path d="M348.7,950 L348.7,893.0 Q348.7,889.0 352.7,889.0 L400.7,889.0 Q404.7,889.0 404.7,893.0 L404.7,950 Z" fill="url(#btn)"/>
<rect x="353.6" y="893.8" width="46" height="24.6" rx="3.2" fill="#744f40" stroke="#c4c4c4" stroke-opacity="0.85" stroke-width="1.3"/>
<text x="376.7" y="933.0" font-size="11" fill="#424242" text-anchor="middle" textLength="47.2" lengthAdjust="spacingAndGlyphs" font-weight="bold">Dark Skin</text>
<path d="M406.8,950 L406.8,893.0 Q406.8,889.0 410.8,889.0 L458.8,889.0 Q462.8,889.0 462.8,893.0 L462.8,950 Z" fill="url(#btn)"/>
<rect x="411.7" y="893.8" width="46" height="24.6" rx="3.2" fill="#c7957f" stroke="#c4c4c4" stroke-opacity="0.85" stroke-width="1.3"/>
<text x="434.8" y="933.0" font-size="11" fill="#424242" text-anchor="middle" textLength="49.5" lengthAdjust="spacingAndGlyphs" font-weight="bold">Light Skin</text>
<path d="M465.0,950 L465.0,893.0 Q465.0,889.0 469.0,889.0 L517.0,889.0 Q521.0,889.0 521.0,893.0 L521.0,950 Z" fill="url(#btn)"/>
<rect x="469.9" y="893.8" width="46" height="24.6" rx="3.2" fill="#5a7ea6" stroke="#c4c4c4" stroke-opacity="0.85" stroke-width="1.3"/>
<text x="493.0" y="933.0" font-size="11" fill="#424242" text-anchor="middle" textLength="43.2" lengthAdjust="spacingAndGlyphs" font-weight="bold">Blue Sky</text>
<path d="M523.1,950 L523.1,893.0 Q523.1,889.0 527.1,889.0 L575.1,889.0 Q579.1,889.0 579.1,893.0 L579.1,950 Z" fill="url(#btn)"/>
<rect x="528.0" y="893.8" width="46" height="24.6" rx="3.2" fill="#5a7042" stroke="#c4c4c4" stroke-opacity="0.85" stroke-width="1.3"/>
<text x="551.1" y="933.0" font-size="11" fill="#424242" text-anchor="middle" textLength="35.8" lengthAdjust="spacingAndGlyphs" font-weight="bold">Foliage</text>
<path d="M581.2,950 L581.2,893.0 Q581.2,889.0 585.2,889.0 L633.2,889.0 Q637.2,889.0 637.2,893.0 L637.2,950 Z" fill="url(#btn)"/>
<rect x="586.1" y="893.8" width="46" height="24.6" rx="3.2" fill="#8882b8" stroke="#c4c4c4" stroke-opacity="0.85" stroke-width="1.3"/>
<text x="592.7" y="933.0" font-size="11" fill="#424242" textLength="22.1" lengthAdjust="spacingAndGlyphs" font-weight="bold">Blue</text>
<text x="592.7" y="944.4" font-size="11" fill="#424242" textLength="32.9" lengthAdjust="spacingAndGlyphs" font-weight="bold">Flower</text>
<path d="M639.3,950 L639.3,893.0 Q639.3,889.0 643.3,889.0 L691.3,889.0 Q695.3,889.0 695.3,893.0 L695.3,950 Z" fill="url(#btn)"/>
<rect x="644.2" y="893.8" width="46" height="24.6" rx="3.2" fill="#62c2ac" stroke="#c4c4c4" stroke-opacity="0.85" stroke-width="1.3"/>
<text x="651.7" y="933.0" font-size="11" fill="#424242" textLength="31.2" lengthAdjust="spacingAndGlyphs" font-weight="bold">Bluish</text>
<text x="651.7" y="944.4" font-size="11" fill="#424242" textLength="29.6" lengthAdjust="spacingAndGlyphs" font-weight="bold">Green</text>
<path d="M697.4,950 L697.4,893.0 Q697.4,889.0 701.4,889.0 L749.4,889.0 Q753.4,889.0 753.4,893.0 L753.4,950 Z" fill="url(#btn)"/>
<rect x="702.3" y="893.8" width="46" height="24.6" rx="3.2" fill="#e07c28" stroke="#c4c4c4" stroke-opacity="0.85" stroke-width="1.3"/>
<text x="725.4" y="933.0" font-size="11" fill="#424242" text-anchor="middle" textLength="35.8" lengthAdjust="spacingAndGlyphs" font-weight="bold">Orange</text>
<path d="M755.6,950 L755.6,893.0 Q755.6,889.0 759.6,889.0 L807.6,889.0 Q811.6,889.0 811.6,893.0 L811.6,950 Z" fill="url(#btn)"/>
<rect x="760.5" y="893.8" width="46" height="24.6" rx="3.2" fill="#4757b0" stroke="#c4c4c4" stroke-opacity="0.85" stroke-width="1.3"/>
<text x="763.1" y="933.0" font-size="11" fill="#424242" textLength="40.9" lengthAdjust="spacingAndGlyphs" font-weight="bold">Purplish</text>
<text x="763.1" y="944.4" font-size="11" fill="#424242" textLength="22.1" lengthAdjust="spacingAndGlyphs" font-weight="bold">Blue</text>
<path d="M813.7,950 L813.7,893.0 Q813.7,889.0 817.7,889.0 L865.7,889.0 Q869.7,889.0 869.7,893.0 L869.7,950 Z" fill="url(#btn)"/>
<rect x="818.6" y="893.8" width="46" height="24.6" rx="3.2" fill="#cf5262" stroke="#c4c4c4" stroke-opacity="0.85" stroke-width="1.3"/>
<text x="818.9" y="933.0" font-size="11" fill="#424242" textLength="45.5" lengthAdjust="spacingAndGlyphs" font-weight="bold">Moderate</text>
<text x="818.9" y="944.4" font-size="11" fill="#424242" textLength="19.3" lengthAdjust="spacingAndGlyphs" font-weight="bold">Red</text>
<path d="M871.8,950 L871.8,893.0 Q871.8,889.0 875.8,889.0 L923.8,889.0 Q927.8,889.0 927.8,893.0 L927.8,950 Z" fill="url(#btn)"/>
<rect x="876.7" y="893.8" width="46" height="24.6" rx="3.2" fill="#5c3a6e" stroke="#c4c4c4" stroke-opacity="0.85" stroke-width="1.3"/>
<text x="899.8" y="933.0" font-size="11" fill="#424242" text-anchor="middle" textLength="31.8" lengthAdjust="spacingAndGlyphs" font-weight="bold">Purple</text>
<path d="M929.9,950 L929.9,893.0 Q929.9,889.0 933.9,889.0 L981.9,889.0 Q985.9,889.0 985.9,893.0 L985.9,950 Z" fill="url(#btn)"/>
<rect x="934.8" y="893.8" width="46" height="24.6" rx="3.2" fill="#a2c23e" stroke="#c4c4c4" stroke-opacity="0.85" stroke-width="1.3"/>
<text x="942.0" y="933.0" font-size="11" fill="#424242" textLength="31.9" lengthAdjust="spacingAndGlyphs" font-weight="bold">Yellow</text>
<text x="942.0" y="944.4" font-size="11" fill="#424242" textLength="29.6" lengthAdjust="spacingAndGlyphs" font-weight="bold">Green</text>
<path d="M988.0,950 L988.0,893.0 Q988.0,889.0 992.0,889.0 L1040.0,889.0 Q1044.0,889.0 1044.0,893.0 L1044.0,950 Z" fill="url(#btn)"/>
<rect x="992.9" y="893.8" width="46" height="24.6" rx="3.2" fill="#eca82e" stroke="#c4c4c4" stroke-opacity="0.85" stroke-width="1.3"/>
<text x="998.1" y="933.0" font-size="11" fill="#424242" textLength="35.8" lengthAdjust="spacingAndGlyphs" font-weight="bold">Orange</text>
<text x="998.1" y="944.4" font-size="11" fill="#424242" textLength="31.9" lengthAdjust="spacingAndGlyphs" font-weight="bold">Yellow</text>
<path d="M1046.2,950 L1046.2,893.0 Q1046.2,889.0 1050.2,889.0 L1098.2,889.0 Q1102.2,889.0 1102.2,893.0 L1102.2,950 Z" fill="url(#btn)"/>
<rect x="1051.1" y="893.8" width="46" height="24.6" rx="3.2" fill="#2b3ca8" stroke="#c4c4c4" stroke-opacity="0.85" stroke-width="1.3"/>
<text x="1074.2" y="933.0" font-size="11" fill="#424242" text-anchor="middle" textLength="22.1" lengthAdjust="spacingAndGlyphs" font-weight="bold">Blue</text>
<path d="M1104.3,950 L1104.3,893.0 Q1104.3,889.0 1108.3,889.0 L1156.3,889.0 Q1160.3,889.0 1160.3,893.0 L1160.3,950 Z" fill="url(#btn)"/>
<rect x="1109.2" y="893.8" width="46" height="24.6" rx="3.2" fill="#3e9a48" stroke="#c4c4c4" stroke-opacity="0.85" stroke-width="1.3"/>
<text x="1132.3" y="933.0" font-size="11" fill="#424242" text-anchor="middle" textLength="29.6" lengthAdjust="spacingAndGlyphs" font-weight="bold">Green</text>
<path d="M1162.4,950 L1162.4,893.0 Q1162.4,889.0 1166.4,889.0 L1214.4,889.0 Q1218.4,889.0 1218.4,893.0 L1218.4,950 Z" fill="url(#btn)"/>
<rect x="1167.3" y="893.8" width="46" height="24.6" rx="3.2" fill="#c22a38" stroke="#c4c4c4" stroke-opacity="0.85" stroke-width="1.3"/>
<text x="1190.4" y="933.0" font-size="11" fill="#424242" text-anchor="middle" textLength="19.3" lengthAdjust="spacingAndGlyphs" font-weight="bold">Red</text>
<path d="M1220.5,950 L1220.5,893.0 Q1220.5,889.0 1224.5,889.0 L1272.5,889.0 Q1276.5,889.0 1276.5,893.0 L1276.5,950 Z" fill="url(#btn)"/>
<rect x="1225.4" y="893.8" width="46" height="24.6" rx="3.2" fill="#f2c820" stroke="#c4c4c4" stroke-opacity="0.85" stroke-width="1.3"/>
<text x="1248.5" y="933.0" font-size="11" fill="#424242" text-anchor="middle" textLength="31.9" lengthAdjust="spacingAndGlyphs" font-weight="bold">Yellow</text>
<path d="M1278.6,950 L1278.6,893.0 Q1278.6,889.0 1282.6,889.0 L1330.6,889.0 Q1334.6,889.0 1334.6,893.0 L1334.6,950 Z" fill="url(#btn)"/>
<rect x="1283.5" y="893.8" width="46" height="24.6" rx="3.2" fill="#c250a2" stroke="#c4c4c4" stroke-opacity="0.85" stroke-width="1.3"/>
<text x="1306.6" y="933.0" font-size="11" fill="#424242" text-anchor="middle" textLength="41.6" lengthAdjust="spacingAndGlyphs" font-weight="bold">Magenta</text>
<path d="M1336.8,950 L1336.8,893.0 Q1336.8,889.0 1340.8,889.0 L1388.8,889.0 Q1392.8,889.0 1392.8,893.0 L1392.8,950 Z" fill="url(#btnsel)"/>
<rect x="1341.7" y="893.8" width="46" height="24.6" rx="3.2" fill="#0a92b2" stroke="#7fd0e0" stroke-opacity="0.85" stroke-width="1.3"/>
<text x="1364.8" y="933.0" font-size="11" fill="#dcdcdc" text-anchor="middle" textLength="25.0" lengthAdjust="spacingAndGlyphs" font-weight="bold">Cyan</text>
<rect x="1396.2" y="889" width="47.7" height="61" fill="#2a2a2a"/>
<path d="M1396.2,907 L1396.2,893 Q1396.2,889 1400.2,889 L1439.9,889 Q1443.9,889 1443.9,893 L1443.9,907 Z" fill="url(#btn)"/>
<rect x="1396.2" y="908.5" width="47.7" height="41.5" fill="url(#btn)"/>
<circle cx="1420.2" cy="898" r="8.5" fill="url(#circ)"/>
<path d="M1416.3,900.3 L1420.2,895.6 L1424.1,900.3 Z" fill="#333"/>
<rect x="1404.2" y="912.6" width="32.2" height="32.8" rx="5.5" fill="#b6b6b6" stroke="#c4c4c4" stroke-width="1"/>
<rect x="1404.2" y="929" width="32.2" height="16.4" fill="#000" opacity="0.07"/>
<rect x="1406.1" y="914.5" width="28.4" height="29" rx="4" fill="none" stroke="#2e2e2e" stroke-width="2.7"/>
<rect x="1413" y="921.8" width="14" height="14.2" fill="#000"/>
<rect x="1413" y="921.8" width="14" height="7.1" fill="#1e1e1e"/>
<path d="M1445.7,919 L1445.7,893 Q1445.7,889 1449.7,889 L1490.9,889 L1490.9,919 Z" fill="url(#btn)"/>
<circle cx="1468.3" cy="904" r="9.6" fill="url(#circ)"/>
<rect x="1464.3" y="900" width="8" height="8" fill="#2a2a2a"/>
<line x1="1491.2" y1="889" x2="1491.2" y2="919" stroke="#2a2a2a" stroke-width="1"/>
<rect x="1491.5" y="889" width="44.5" height="30" fill="url(#btn)"/>
<circle cx="1513.8" cy="904" r="9.6" fill="url(#circ)"/>
<path d="M1510.2,899.7 L1518.5,904.8 L1510.2,909.6 Z" fill="#2a2a2a"/>
<line x1="1536.3" y1="889" x2="1536.3" y2="919" stroke="#2a2a2a" stroke-width="1"/>
<rect x="1536.5" y="889" width="44.7" height="30" fill="url(#btn)"/>
<circle cx="1558.8" cy="904" r="9.6" fill="url(#circ)"/>
<path d="M1555.5,898.2 L1553.2,898.2 L1553.2,909.8 L1555.5,909.8 M1562.1,898.2 L1564.4,898.2 L1564.4,909.8 L1562.1,909.8" fill="none" stroke="#262626" stroke-width="2.3"/>
<rect x="1556.2" y="903.2" width="1.8" height="1.7" fill="#262626"/><rect x="1559.6" y="903.2" width="1.8" height="1.7" fill="#262626"/>
<line x1="1581.5" y1="889" x2="1581.5" y2="919" stroke="#2a2a2a" stroke-width="1"/>
<rect x="1581.7" y="889" width="44.6" height="30" fill="url(#btn)"/>
<circle cx="1604.0" cy="904" r="9.6" fill="url(#circ)"/>
<path d="M1604.0,904 C1601.8,900.7 1597.2,900.7 1597.2,904 C1597.2,907.3 1601.8,907.3 1604.0,904 C1606.2,900.7 1610.8,900.7 1610.8,904 C1610.8,907.3 1606.2,907.3 1604.0,904 Z" fill="none" stroke="#262626" stroke-width="1.6"/>
<line x1="1626.6" y1="889" x2="1626.6" y2="919" stroke="#2a2a2a" stroke-width="1"/>
<rect x="1626.8" y="889" width="44.7" height="30" fill="url(#btndk)"/>
<circle cx="1649.2" cy="904" r="9.6" fill="url(#circdk)"/>
<path d="M1654.2,902 A5.5,5.5 0 0 0 1644.2,903 M1644.2,906 A5.5,5.5 0 0 0 1654.2,905" fill="none" stroke="#1c1c1c" stroke-width="2"/>
<path d="M1655.7,898 L1655.7,903.5 L1650.7,902.5 Z M1642.7,910 L1642.7,904.5 L1647.7,905.5 Z" fill="#1c1c1c"/>
<line x1="1671.8" y1="889" x2="1671.8" y2="919" stroke="#2a2a2a" stroke-width="1"/>
<rect x="1672" y="889" width="45.0" height="30" fill="url(#btndk)"/>
<circle cx="1694.5" cy="904" r="9.6" fill="url(#circdk)"/>
<line x1="1717.3" y1="889" x2="1717.3" y2="919" stroke="#2a2a2a" stroke-width="1"/>
<path d="M1445.7,950 L1445.7,924.2 Q1445.7,920.2 1449.7,920.2 L1581.2,920.2 L1581.2,950 Z" fill="url(#btn)"/>
<path d="M1581.9,950 L1581.9,920.2 L1713,920.2 Q1717,920.2 1717,924.2 L1717,950 Z" fill="url(#btn)"/>
<line x1="1581.5" y1="920" x2="1581.5" y2="950" stroke="#2a2a2a" stroke-width="1.2"/>
<circle cx="1475.6" cy="935" r="10" fill="url(#circ)"/>
<path d="M1475.1,930 L1471.1,935 L1475.1,940 M1479.1,930 L1475.1,935 L1479.1,940" fill="none" stroke="#2a2a2a" stroke-width="1.7"/>
<circle cx="1689.1" cy="935" r="10" fill="url(#circ)"/>
<path d="M1689.6,930 L1693.6,935 L1689.6,940 M1685.6,930 L1689.6,935 L1685.6,940" fill="none" stroke="#2a2a2a" stroke-width="1.7"/>
<text x="1502.5" y="943.2" font-size="22" fill="#2c2c2c" stroke="#2c2c2c" stroke-width="0.9" textLength="50.0" lengthAdjust="spacingAndGlyphs">Back</text>
<text x="1609.5" y="943.2" font-size="22" fill="#2c2c2c" stroke="#2c2c2c" stroke-width="0.9" textLength="51.0" lengthAdjust="spacingAndGlyphs">Next</text>
</svg>
</body></html>
